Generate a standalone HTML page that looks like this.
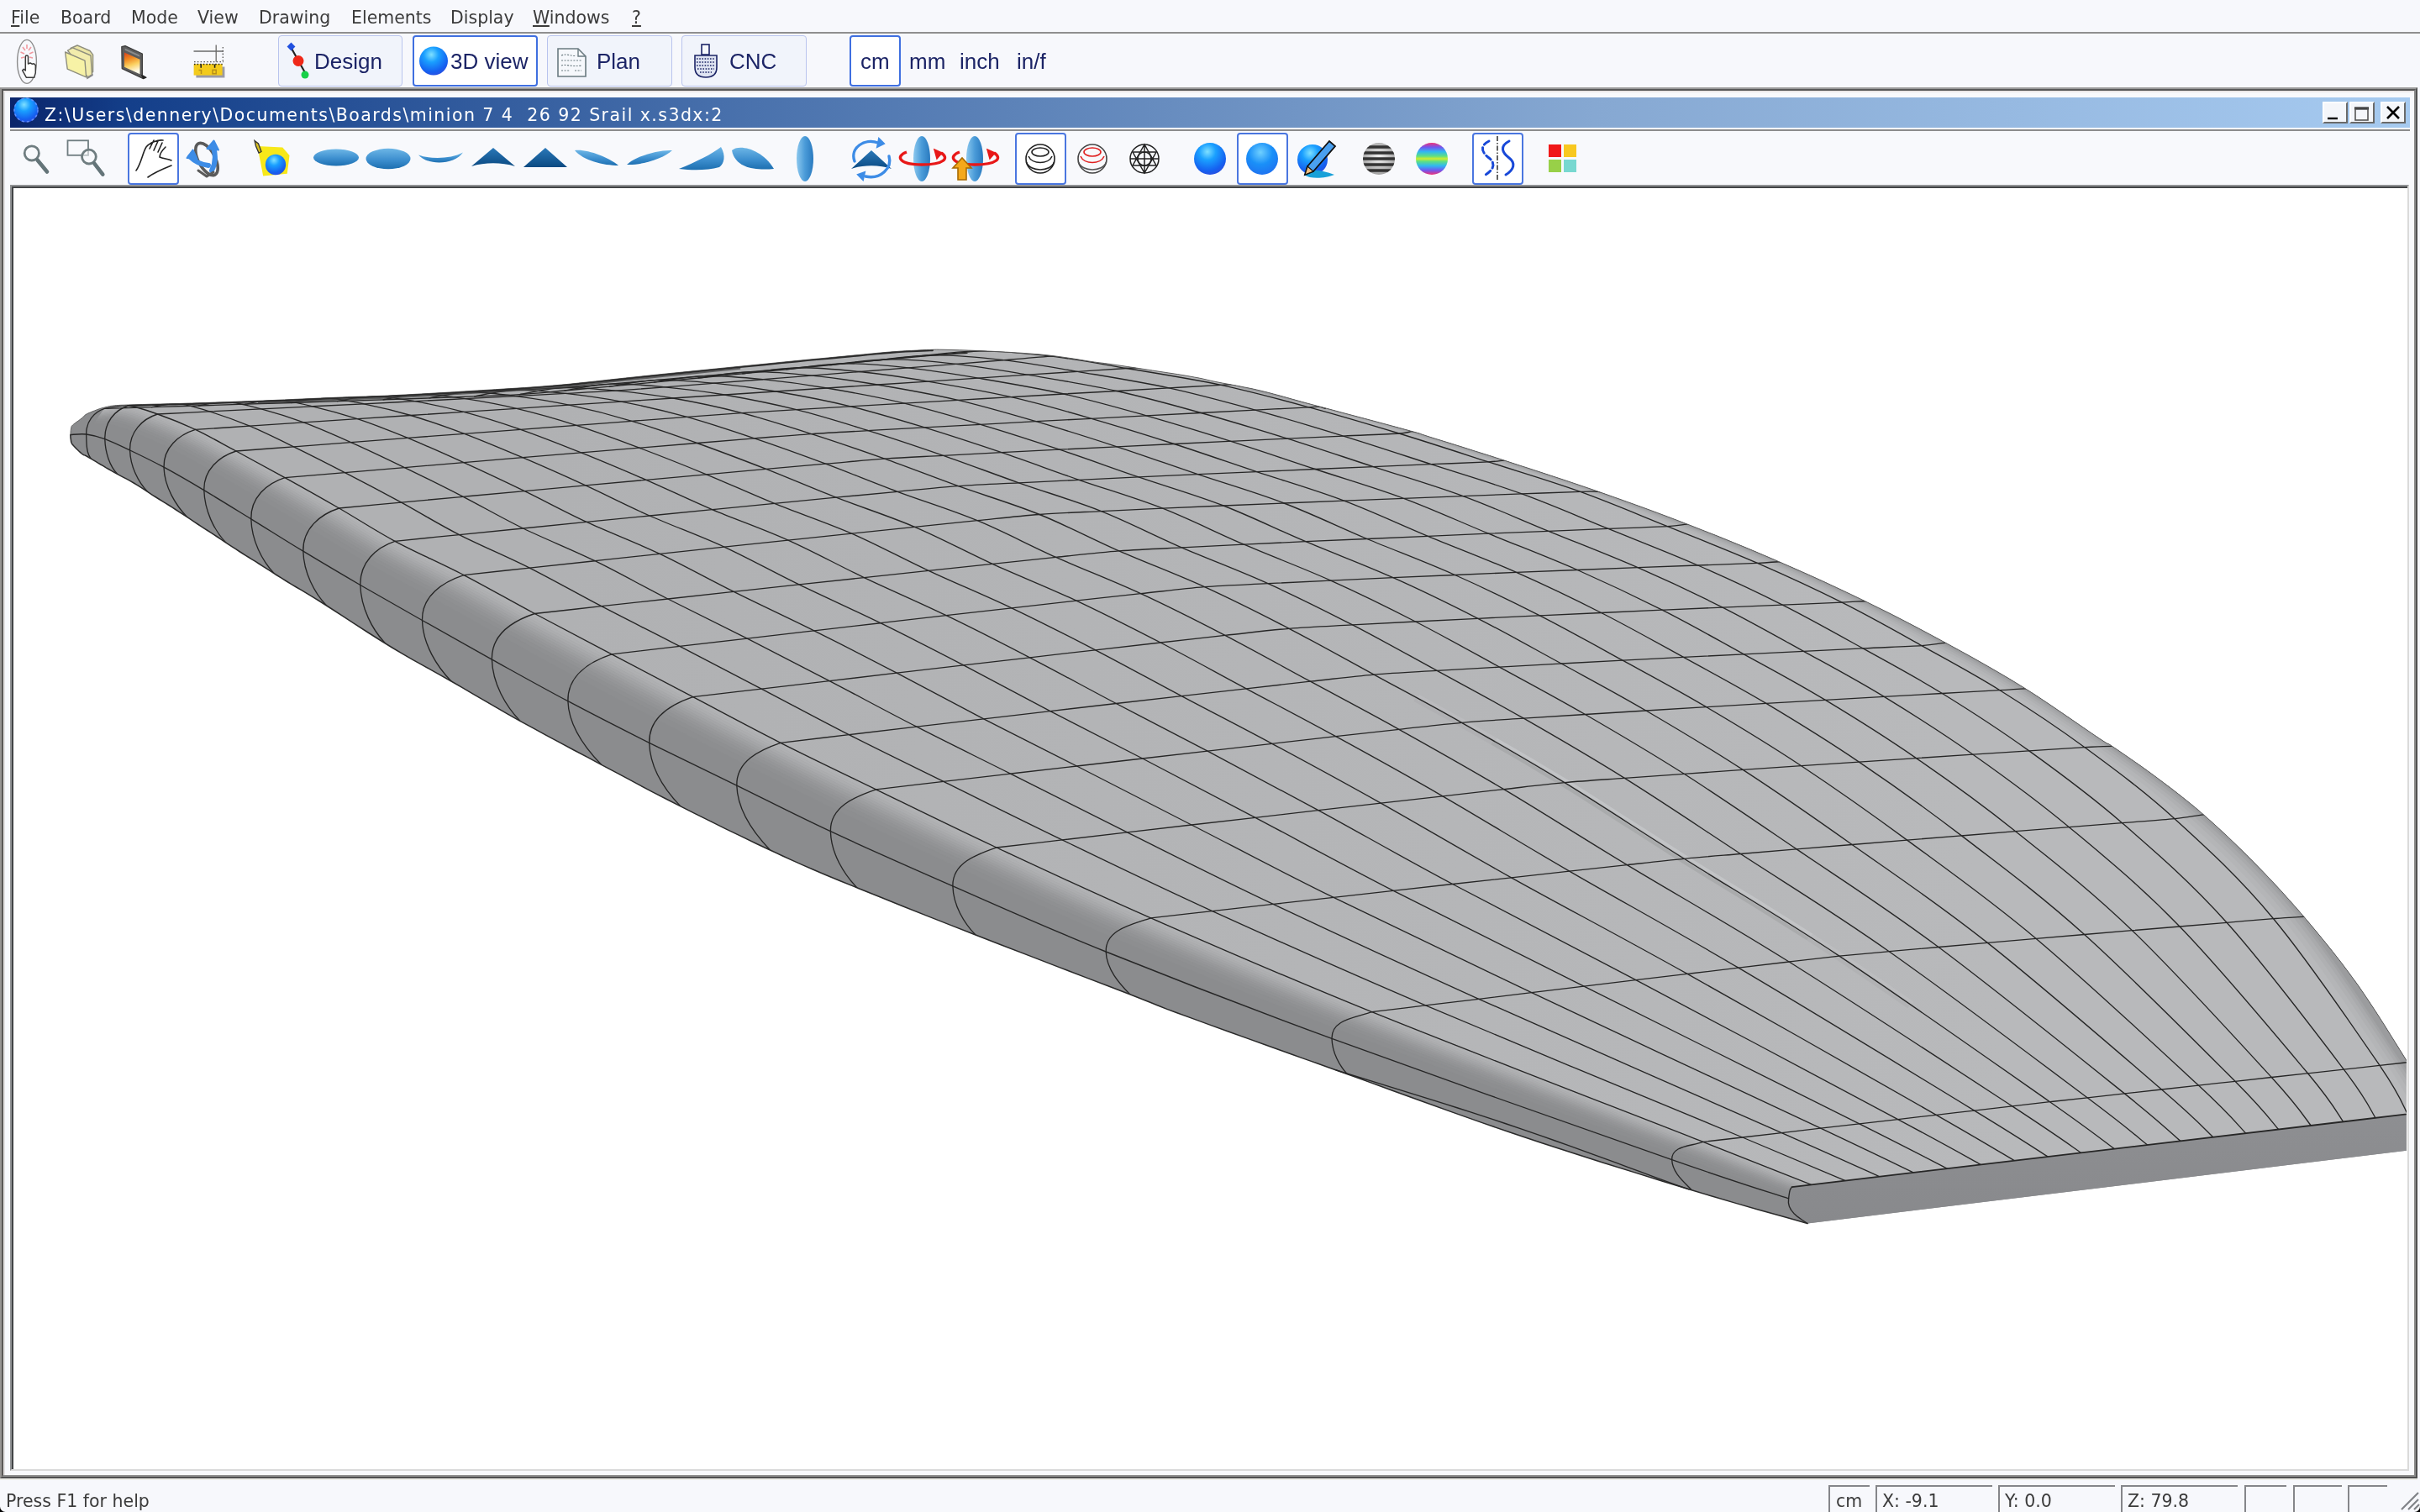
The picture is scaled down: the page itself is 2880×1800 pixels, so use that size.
<!DOCTYPE html><html><head><meta charset="utf-8"><title>Shape3D</title><style>
html,body{margin:0;padding:0;}
body{width:2880px;height:1800px;overflow:hidden;background:#f7f8fc;position:relative;
 font-family:"DejaVu Sans","Liberation Sans",sans-serif;color:#3a3a3a;}
.abs{position:absolute;}
.menu,.tbt,.stt,.ttl{will-change:transform;}
.menu span{position:absolute;top:8px;font-size:20.5px;line-height:26px;color:#3b3b3b;white-space:pre;}
.tb{position:absolute;top:42px;height:61px;border:1.5px solid #b9c4ee;border-radius:4px;background:#f1f4fb;box-sizing:border-box;}
.tb.sel{background:#fff;border:2px solid #3f6fe0;}
.tbt{position:absolute;top:57px;font-family:"Liberation Sans",sans-serif;font-size:26px;line-height:32px;color:#1c2466;white-space:pre;}
.sel2{position:absolute;top:158px;height:62px;width:61px;border:2px solid #4a76e0;border-radius:4px;background:#fff;box-sizing:border-box;}
.st{position:absolute;top:1768px;height:32px;border-top:2px solid #85868a;border-left:2px solid #85868a;box-sizing:border-box;}
.stt{position:absolute;top:1774px;font-size:20.5px;line-height:26px;color:#3b3b3b;white-space:pre;}
.cap{position:absolute;top:121px;height:26px;width:30px;background:#f4f6fa;box-sizing:border-box;
 border-top:2px solid #fff;border-left:2px solid #fff;border-right:2px solid #6a6a6a;border-bottom:2px solid #6a6a6a;}
</style></head><body>
<div class="menu">
<span style="left:13px"><u>F</u>ile</span>
<span style="left:72px">Board</span>
<span style="left:156px">Mode</span>
<span style="left:235px">View</span>
<span style="left:308px">Drawing</span>
<span style="left:418px">Elements</span>
<span style="left:536px">Display</span>
<span style="left:634px"><u>W</u>indows</span>
<span style="left:752px"><u>?</u></span>
</div>
<div class="abs" style="left:0;top:38px;width:2880px;height:2px;background:#8f8f8f"></div>
<div class="tb" style="left:331px;width:148px"></div>
<div class="tb sel" style="left:491px;width:149px"></div>
<div class="tb" style="left:651px;width:149px"></div>
<div class="tb" style="left:811px;width:149px"></div>
<div class="tb sel" style="left:1011px;width:61px"></div>
<div class="tbt" style="left:374px">Design</div>
<div class="tbt" style="left:536px">3D view</div>
<div class="tbt" style="left:710px">Plan</div>
<div class="tbt" style="left:868px">CNC</div>
<div class="tbt" style="left:1024px">cm</div>
<div class="tbt" style="left:1082px">mm</div>
<div class="tbt" style="left:1142px">inch</div>
<div class="tbt" style="left:1210px">in/f</div>
<div class="abs" style="left:0;top:104px;width:2877px;height:1656px;box-sizing:border-box;border-top:2px solid #9a9a9a;border-left:2px solid #979593;border-right:2px solid #505050;border-bottom:2px solid #505050;"></div>
<div class="abs" style="left:2px;top:106px;width:2873px;height:1652px;box-sizing:border-box;border-top:2px solid #585858;border-left:2px solid #5a5856;border-right:2px solid #8a8a8a;border-bottom:2px solid #8e8e8e;background:#f8f9fc"></div>
<div class="abs" style="left:4px;top:108px;width:2869px;height:1648px;box-sizing:border-box;border-top:2px solid #ebe7e7;border-left:2px solid #e4e2e2;"></div>
<div class="abs" style="left:12px;top:116px;width:2856px;height:36px;background:linear-gradient(90deg,#0a246a 0%,#143f8a 5%,#4a72ad 31%,#86a8d2 66%,#a6caf0 100%)"></div>
<div class="abs" style="left:12px;top:154px;width:2856px;height:2px;background:#8c8c8c"></div>
<div class="abs ttl" style="left:53px;top:123px;font-size:20.5px;line-height:28px;color:#fff;letter-spacing:1.45px;white-space:pre">Z:\Users\dennery\Documents\Boards\minion 7 4  26 92 Srail x.s3dx:2</div>
<div class="cap" style="left:2764px"></div>
<div class="cap" style="left:2796px"></div>
<div class="cap" style="left:2833px"></div>
<div class="sel2" style="left:152px"></div>
<div class="sel2" style="left:1208px"></div>
<div class="sel2" style="left:1472px"></div>
<div class="sel2" style="left:1752px"></div>
<div class="abs" style="left:12px;top:220px;width:2855px;height:1531px;box-sizing:border-box;border-top:2px solid #909294;border-left:2px solid #909294;border-right:2px solid #dadada;border-bottom:2px solid #dadada;background:#fff"></div>
<div class="abs" style="left:14px;top:222px;width:2851px;height:1527px;box-sizing:border-box;border-top:2px solid #424446;border-left:2px solid #424446;background:#fff"></div>
<div class="stt" style="left:7px">Press F1 for help</div>
<div class="abs" style="left:0;top:1760px;width:2877px;height:2px;background:#ecece8"></div>
<div class="st" style="left:2176px;width:49px"></div>
<div class="st" style="left:2232px;width:139px"></div>
<div class="st" style="left:2378px;width:139px"></div>
<div class="st" style="left:2524px;width:139px"></div>
<div class="st" style="left:2671px;width:50px"></div>
<div class="st" style="left:2729px;width:58px"></div>
<div class="st" style="left:2794px;width:47px"></div>
<div class="stt" style="left:2185px">cm</div>
<div class="stt" style="left:2240px">X: -9.1</div>
<div class="stt" style="left:2386px">Y: 0.0</div>
<div class="stt" style="left:2532px">Z: 79.8</div>
<svg width="2880" height="1800" viewBox="0 0 2880 1800" style="position:absolute;left:0;top:0">
<defs>
<clipPath id="vp"><rect x="16" y="224" width="2848" height="1524"/></clipPath>
<clipPath id="deckc"><path d="M2155.5 1410.3L2144.6 1406.0L2132.0 1400.9L2115.8 1394.5L2094.1 1385.9L2065.1 1374.5L2026.8 1359.4L1974.9 1339.1L1910.2 1313.9L1838.1 1285.9L1764.1 1256.9L1693.8 1229.2L1632.6 1204.7L1580.2 1183.2L1532.2 1163.2L1487.9 1144.3L1446.4 1126.4L1407.2 1109.3L1369.5 1092.8L1333.8 1077.0L1301.0 1062.2L1270.3 1048.2L1241.3 1034.8L1213.3 1021.8L1186.0 1009.0L1159.4 996.5L1134.1 984.3L1109.9 972.6L1086.6 961.3L1064.2 950.4L1042.5 939.8L1021.7 929.7L1002.1 920.3L983.2 911.1L965.0 902.2L946.9 893.3L928.9 884.3L910.9 875.1L893.2 865.9L875.7 856.7L858.5 847.6L841.5 838.6L824.7 829.7L808.1 821.0L791.7 812.4L775.6 803.9L759.6 795.5L743.7 787.2L728.0 778.9L712.3 770.7L696.8 762.5L681.4 754.4L666.1 746.4L651.1 738.4L636.3 730.5L621.8 722.6L607.5 714.8L593.5 707.0L579.6 699.4L565.7 691.9L551.9 684.6L537.9 677.5L523.8 670.7L509.8 664.0L496.1 657.5L482.7 650.9L470.0 644.3L458.0 637.7L446.6 631.0L435.7 624.4L424.9 617.8L414.3 611.4L403.5 605.0L392.6 598.7L381.6 592.5L370.7 586.3L359.9 580.3L349.4 574.4L339.0 568.6L328.8 563.0L318.8 557.5L309.0 552.1L299.4 546.9L290.0 541.9L281.0 537.0L272.3 532.3L264.0 527.8L255.9 523.4L248.1 519.2L240.3 515.2L232.5 511.4L224.7 507.8L216.9 504.4L209.2 501.2L201.6 498.2L194.4 495.5L187.5 493.0L181.0 490.7L174.9 488.5L169.0 486.6L163.4 485.0L157.9 483.8L152.6 483.0L147.2 482.8L141.7 483.3L136.4 484.1L131.5 485.0L127.5 485.9L124.5 486.4L124.5 485.0L125.9 484.6L127.3 484.3L128.8 483.9L130.4 483.6L132.2 483.3L134.4 483.0L136.5 482.8L138.4 482.6L140.6 482.5L143.4 482.3L147.3 482.2L152.6 482.0L160.1 481.8L169.6 481.5L180.2 481.2L190.9 481.0L200.7 480.7L208.8 480.5L214.4 480.4L218.1 480.3L221.0 480.2L224.1 480.1L228.6 480.0L235.3 479.8L244.5 479.5L255.4 479.1L267.5 478.7L280.6 478.2L294.2 477.7L308.0 477.2L322.6 476.6L338.3 475.9L354.5 475.2L370.7 474.5L386.3 473.8L400.6 473.2L413.3 472.7L424.8 472.3L435.6 472.0L446.3 471.6L457.6 471.2L469.8 470.6L483.0 469.9L496.6 469.2L510.7 468.4L525.3 467.6L540.4 466.7L556.0 465.7L572.3 464.7L589.3 463.7L606.8 462.6L624.6 461.5L642.4 460.2L660.0 458.8L676.8 457.3L692.8 455.6L708.8 453.9L725.7 452.0L744.3 450.0L765.3 447.8L790.5 445.2L819.5 442.3L850.2 439.2L880.4 436.2L907.9 433.5L930.6 431.2L947.8 429.5L961.1 428.2L971.8 427.2L981.0 426.4L990.0 425.5L1000.0 424.6L1011.0 423.5L1022.0 422.5L1032.8 421.4L1043.2 420.4L1053.0 419.5L1062.0 418.8L1070.2 418.2L1077.8 417.7L1084.8 417.4L1091.2 417.1L1097.1 416.8L1102.5 416.6L1106.7 416.4L1109.6 416.3L1111.9 416.2L1114.5 416.1L1118.3 416.2L1124.0 416.3L1132.0 416.5L1141.7 416.8L1152.5 417.1L1163.8 417.5L1175.2 418.0L1186.0 418.5L1196.4 419.1L1206.9 419.7L1217.5 420.4L1227.9 421.2L1238.1 422.0L1248.0 423.0L1257.8 424.2L1267.7 425.6L1277.4 427.0L1286.6 428.5L1295.0 429.9L1302.5 431.0L1308.1 431.8L1311.8 432.2L1314.8 432.6L1318.2 433.0L1323.1 433.7L1330.6 434.8L1341.8 436.5L1355.8 438.6L1371.4 441.0L1387.1 443.4L1401.4 445.6L1413.0 447.5L1421.3 449.0L1427.2 450.1L1431.9 451.1L1436.1 452.1L1440.8 453.2L1447.0 454.5L1454.6 456.0L1462.8 457.5L1471.6 459.1L1480.7 460.9L1490.2 462.8L1499.8 465.0L1509.1 467.3L1518.1 469.7L1527.4 472.2L1537.5 475.1L1549.1 478.3L1562.8 482.0L1580.1 486.6L1601.0 492.2L1623.2 498.1L1645.0 503.9L1664.1 509.1L1678.5 513.0L1686.8 515.3L1690.1 516.2L1690.9 516.5L1691.3 516.8L1693.6 517.6L1700.0 519.7L1710.7 523.0L1723.9 527.1L1739.0 531.8L1755.3 537.0L1772.3 542.3L1789.3 547.8L1806.8 553.5L1825.3 559.5L1844.5 565.8L1863.9 572.2L1883.1 578.7L1901.7 585.1L1919.7 591.4L1937.3 597.7L1954.8 604.0L1972.2 610.4L1989.7 617.0L2007.4 623.8L2025.5 630.9L2043.8 638.1L2062.2 645.6L2080.5 653.1L2098.7 660.8L2116.5 668.4L2134.0 676.1L2151.4 683.8L2168.6 691.6L2185.6 699.5L2202.4 707.4L2219.0 715.4L2235.4 723.5L2251.6 731.6L2267.6 739.8L2283.4 748.1L2299.2 756.5L2314.9 765.0L2330.5 773.5L2346.0 782.0L2361.4 790.7L2376.7 799.5L2392.0 808.5L2407.4 817.9L2423.7 828.3L2441.1 839.9L2458.5 851.8L2474.8 863.0L2488.9 872.7L2499.7 880.0L2506.0 884.1L2508.6 885.6L2508.9 885.6L2508.6 885.2L2509.5 885.6L2513.0 888.0L2519.4 892.3L2527.3 897.7L2536.3 903.9L2545.9 910.6L2555.6 917.5L2565.0 924.4L2574.2 931.3L2583.5 938.3L2592.9 945.6L2602.5 953.2L2612.2 961.1L2622.0 969.5L2632.0 978.4L2642.2 987.7L2652.6 997.4L2663.0 1007.4L2673.4 1017.6L2683.7 1028.0L2693.9 1038.5L2704.1 1049.2L2714.3 1060.2L2724.4 1071.4L2734.6 1082.9L2744.8 1094.8L2755.0 1107.0L2765.3 1119.5L2775.6 1132.3L2785.9 1145.4L2796.0 1158.9L2806.0 1172.6L2816.2 1187.4L2826.7 1203.3L2837.1 1219.5L2846.9 1235.2L2855.8 1249.5L2863.3 1261.5L2869.3 1271.0L2874.0 1278.6L2877.8 1284.9L2880.9 1290.2L2883.5 1295.1L2886.0 1300.0L2888.2 1305.0L2889.8 1309.7L2890.9 1313.9L2891.8 1317.6L2892.4 1320.7L2893.0 1323.0Z"/></clipPath>
<clipPath id="silc"><path d="M83.8 517.5L83.9 516.6L84.0 515.4L84.1 514.0L84.2 512.5L84.4 511.1L84.6 510.0L84.8 509.2L84.8 508.6L84.9 508.0L85.2 507.5L85.7 506.9L86.5 506.0L87.8 504.9L89.6 503.5L91.6 502.1L93.7 500.6L95.6 499.2L97.2 498.0L98.4 497.0L99.2 496.1L99.9 495.4L100.6 494.6L101.6 493.8L103.0 493.0L104.9 492.0L107.3 491.0L109.9 489.9L112.5 488.9L114.9 488.0L117.0 487.2L118.6 486.6L119.9 486.2L121.0 485.9L122.1 485.6L123.2 485.3L124.5 485.0L125.9 484.6L127.3 484.3L128.8 483.9L130.4 483.6L132.2 483.3L134.4 483.0L136.5 482.8L138.4 482.6L140.6 482.5L143.4 482.3L147.3 482.2L152.6 482.0L160.1 481.8L169.6 481.5L180.2 481.2L190.9 481.0L200.7 480.7L208.8 480.5L214.4 480.4L218.1 480.3L221.0 480.2L224.1 480.1L228.6 480.0L235.3 479.8L244.5 479.5L255.4 479.1L267.5 478.7L280.6 478.2L294.2 477.7L308.0 477.2L322.6 476.6L338.3 475.9L354.5 475.2L370.7 474.5L386.3 473.8L400.6 473.2L413.3 472.7L424.8 472.3L435.6 472.0L446.3 471.6L457.6 471.2L469.8 470.6L483.0 469.9L496.6 469.2L510.7 468.4L525.3 467.6L540.4 466.7L556.0 465.7L572.3 464.7L589.3 463.7L606.8 462.6L624.6 461.5L642.4 460.2L660.0 458.8L676.8 457.3L692.8 455.6L708.8 453.9L725.7 452.0L744.3 450.0L765.3 447.8L790.5 445.2L819.5 442.3L850.2 439.2L880.4 436.2L907.9 433.5L930.6 431.2L947.8 429.5L961.1 428.2L971.8 427.2L981.0 426.4L990.0 425.5L1000.0 424.6L1011.0 423.5L1022.0 422.5L1032.8 421.4L1043.2 420.4L1053.0 419.5L1062.0 418.8L1070.2 418.2L1077.8 417.7L1084.8 417.4L1091.2 417.1L1097.1 416.8L1102.5 416.6L1106.7 416.4L1109.6 416.3L1111.9 416.2L1114.5 416.1L1118.3 416.2L1124.0 416.3L1132.0 416.5L1141.7 416.8L1152.5 417.1L1163.8 417.5L1175.2 418.0L1186.0 418.5L1196.4 419.1L1206.9 419.7L1217.5 420.4L1227.9 421.2L1238.1 422.0L1248.0 423.0L1257.8 424.2L1267.7 425.6L1277.4 427.0L1286.6 428.5L1295.0 429.9L1302.5 431.0L1308.1 431.8L1311.8 432.2L1314.8 432.6L1318.2 433.0L1323.1 433.7L1330.6 434.8L1341.8 436.5L1355.8 438.6L1371.4 441.0L1387.1 443.4L1401.4 445.6L1413.0 447.5L1421.3 449.0L1427.2 450.1L1431.9 451.1L1436.1 452.1L1440.8 453.2L1447.0 454.5L1454.6 456.0L1462.8 457.5L1471.6 459.1L1480.7 460.9L1490.2 462.8L1499.8 465.0L1509.1 467.3L1518.1 469.7L1527.4 472.2L1537.5 475.1L1549.1 478.3L1562.8 482.0L1580.1 486.6L1601.0 492.2L1623.2 498.1L1645.0 503.9L1664.1 509.1L1678.5 513.0L1686.8 515.3L1690.1 516.2L1690.9 516.5L1691.3 516.8L1693.6 517.6L1700.0 519.7L1710.7 523.0L1723.9 527.1L1739.0 531.8L1755.3 537.0L1772.3 542.3L1789.3 547.8L1806.8 553.5L1825.3 559.5L1844.5 565.8L1863.9 572.2L1883.1 578.7L1901.7 585.1L1919.7 591.4L1937.3 597.7L1954.8 604.0L1972.2 610.4L1989.7 617.0L2007.4 623.8L2025.5 630.9L2043.8 638.1L2062.2 645.6L2080.5 653.1L2098.7 660.8L2116.5 668.4L2134.0 676.1L2151.4 683.8L2168.6 691.6L2185.6 699.5L2202.4 707.4L2219.0 715.4L2235.4 723.5L2251.6 731.6L2267.6 739.8L2283.4 748.1L2299.2 756.5L2314.9 765.0L2330.5 773.5L2346.0 782.0L2361.4 790.7L2376.7 799.5L2392.0 808.5L2407.4 817.9L2423.7 828.3L2441.1 839.9L2458.5 851.8L2474.8 863.0L2488.9 872.7L2499.7 880.0L2506.0 884.1L2508.6 885.6L2508.9 885.6L2508.6 885.2L2509.5 885.6L2513.0 888.0L2519.4 892.3L2527.3 897.7L2536.3 903.9L2545.9 910.6L2555.6 917.5L2565.0 924.4L2574.2 931.3L2583.5 938.3L2592.9 945.6L2602.5 953.2L2612.2 961.1L2622.0 969.5L2632.0 978.4L2642.2 987.7L2652.6 997.4L2663.0 1007.4L2673.4 1017.6L2683.7 1028.0L2693.9 1038.5L2704.1 1049.2L2714.3 1060.2L2724.4 1071.4L2734.6 1082.9L2744.8 1094.8L2755.0 1107.0L2765.3 1119.5L2775.6 1132.3L2785.9 1145.4L2796.0 1158.9L2806.0 1172.6L2816.2 1187.4L2826.7 1203.3L2837.1 1219.5L2846.9 1235.2L2855.8 1249.5L2863.3 1261.5L2869.3 1271.0L2874.0 1278.6L2877.8 1284.9L2880.9 1290.2L2883.5 1295.1L2886.0 1300.0L2888.2 1305.0L2889.8 1309.7L2890.9 1313.9L2891.8 1317.6L2892.4 1320.7L2893.0 1323.0L2893.0 1366.3L2151.0 1456.5L2136.3 1452.3L2116.7 1446.8L2093.1 1440.2L2066.6 1432.6L2038.2 1424.3L2009.0 1415.5L1977.9 1406.0L1944.0 1395.4L1908.1 1384.2L1871.5 1372.5L1835.1 1360.7L1800.0 1349.0L1764.7 1336.9L1728.0 1323.9L1691.6 1310.8L1657.0 1298.2L1625.9 1286.9L1600.0 1277.5L1581.0 1270.7L1567.9 1266.0L1558.3 1262.6L1549.7 1259.6L1539.7 1256.0L1525.8 1251.0L1507.0 1244.2L1485.1 1236.4L1461.7 1228.0L1438.6 1219.6L1417.5 1211.9L1400.0 1205.5L1388.2 1201.1L1381.1 1198.3L1376.0 1196.2L1370.0 1193.8L1360.5 1190.0L1344.7 1183.8L1321.3 1174.8L1292.1 1163.6L1259.5 1151.1L1225.3 1137.9L1191.8 1125.0L1161.0 1113.0L1132.0 1101.6L1102.8 1090.1L1074.2 1078.7L1047.1 1067.8L1022.1 1057.7L1000.0 1048.7L981.9 1041.2L967.3 1035.0L954.9 1029.6L943.2 1024.4L930.9 1018.7L916.5 1012.0L899.9 1004.2L882.2 995.7L863.9 986.8L845.4 977.7L827.2 968.6L809.9 959.9L793.5 951.5L777.6 943.3L762.1 935.1L746.8 926.9L731.3 918.7L715.6 910.3L699.5 901.7L683.0 893.0L666.5 884.2L650.1 875.4L634.2 866.7L618.9 858.3L604.3 850.1L590.1 841.9L576.3 833.9L562.9 826.1L549.8 818.4L537.0 811.0L524.8 804.1L513.2 797.6L502.0 791.4L490.7 785.1L479.1 778.4L466.7 771.0L453.0 762.5L438.0 753.0L422.7 743.1L407.8 733.4L394.1 724.5L382.4 717.0L372.9 711.1L365.1 706.4L358.5 702.4L352.6 699.0L346.9 695.6L341.0 692.0L334.9 688.2L329.0 684.5L323.4 680.8L318.0 677.4L312.8 674.1L308.0 671.0L303.6 668.2L299.7 665.8L296.0 663.5L292.5 661.3L288.8 659.0L284.9 656.5L280.6 653.7L276.2 650.8L271.6 647.8L267.1 644.8L262.7 641.8L258.4 639.0L254.4 636.4L250.6 633.9L246.9 631.5L243.1 629.1L239.3 626.6L235.3 624.0L231.0 621.2L226.6 618.2L222.1 615.2L217.5 612.2L213.1 609.3L208.8 606.5L204.8 603.9L201.0 601.5L197.2 599.2L193.5 596.9L189.7 594.5L185.7 592.0L181.4 589.3L177.0 586.4L172.5 583.4L167.9 580.4L163.5 577.6L159.2 575.0L155.1 572.6L151.1 570.4L147.1 568.3L143.3 566.3L139.6 564.4L136.0 562.4L132.5 560.4L129.2 558.5L125.9 556.6L122.8 554.7L119.8 553.0L117.0 551.3L114.3 549.7L111.7 548.1L109.2 546.6L106.9 545.3L104.8 544.0L103.0 543.0L101.6 542.3L100.6 541.9L99.9 541.7L99.2 541.4L98.4 540.9L97.2 540.0L95.6 538.6L93.6 536.8L91.5 534.8L89.5 532.7L87.7 530.8L86.3 529.2L85.4 527.9L84.9 526.8L84.6 525.8L84.5 524.8L84.4 523.9L84.3 523.0L84.1 522.0L84.0 520.9L83.9 519.9L83.9 518.9L83.8 518.1L83.8 517.5Z"/></clipPath>
<linearGradient id="tailg" x1="0" y1="0" x2="0" y2="1"><stop offset="0" stop-color="#8e8f92"/><stop offset="1" stop-color="#88898c"/></linearGradient>
<linearGradient id="deckg" gradientUnits="userSpaceOnUse" x1="700" y1="950" x2="2300" y2="700"><stop offset="0" stop-color="#b0b1b3"/><stop offset="1" stop-color="#b8b9bb"/></linearGradient>
</defs>
<g clip-path="url(#vp)">
<path d="M83.8 517.5L83.9 516.6L84.0 515.4L84.1 514.0L84.2 512.5L84.4 511.1L84.6 510.0L84.8 509.2L84.8 508.6L84.9 508.0L85.2 507.5L85.7 506.9L86.5 506.0L87.8 504.9L89.6 503.5L91.6 502.1L93.7 500.6L95.6 499.2L97.2 498.0L98.4 497.0L99.2 496.1L99.9 495.4L100.6 494.6L101.6 493.8L103.0 493.0L104.9 492.0L107.3 491.0L109.9 489.9L112.5 488.9L114.9 488.0L117.0 487.2L118.6 486.6L119.9 486.2L121.0 485.9L122.1 485.6L123.2 485.3L124.5 485.0L125.9 484.6L127.3 484.3L128.8 483.9L130.4 483.6L132.2 483.3L134.4 483.0L136.5 482.8L138.4 482.6L140.6 482.5L143.4 482.3L147.3 482.2L152.6 482.0L160.1 481.8L169.6 481.5L180.2 481.2L190.9 481.0L200.7 480.7L208.8 480.5L214.4 480.4L218.1 480.3L221.0 480.2L224.1 480.1L228.6 480.0L235.3 479.8L244.5 479.5L255.4 479.1L267.5 478.7L280.6 478.2L294.2 477.7L308.0 477.2L322.6 476.6L338.3 475.9L354.5 475.2L370.7 474.5L386.3 473.8L400.6 473.2L413.3 472.7L424.8 472.3L435.6 472.0L446.3 471.6L457.6 471.2L469.8 470.6L483.0 469.9L496.6 469.2L510.7 468.4L525.3 467.6L540.4 466.7L556.0 465.7L572.3 464.7L589.3 463.7L606.8 462.6L624.6 461.5L642.4 460.2L660.0 458.8L676.8 457.3L692.8 455.6L708.8 453.9L725.7 452.0L744.3 450.0L765.3 447.8L790.5 445.2L819.5 442.3L850.2 439.2L880.4 436.2L907.9 433.5L930.6 431.2L947.8 429.5L961.1 428.2L971.8 427.2L981.0 426.4L990.0 425.5L1000.0 424.6L1011.0 423.5L1022.0 422.5L1032.8 421.4L1043.2 420.4L1053.0 419.5L1062.0 418.8L1070.2 418.2L1077.8 417.7L1084.8 417.4L1091.2 417.1L1097.1 416.8L1102.5 416.6L1106.7 416.4L1109.6 416.3L1111.9 416.2L1114.5 416.1L1118.3 416.2L1124.0 416.3L1132.0 416.5L1141.7 416.8L1152.5 417.1L1163.8 417.5L1175.2 418.0L1186.0 418.5L1196.4 419.1L1206.9 419.7L1217.5 420.4L1227.9 421.2L1238.1 422.0L1248.0 423.0L1257.8 424.2L1267.7 425.6L1277.4 427.0L1286.6 428.5L1295.0 429.9L1302.5 431.0L1308.1 431.8L1311.8 432.2L1314.8 432.6L1318.2 433.0L1323.1 433.7L1330.6 434.8L1341.8 436.5L1355.8 438.6L1371.4 441.0L1387.1 443.4L1401.4 445.6L1413.0 447.5L1421.3 449.0L1427.2 450.1L1431.9 451.1L1436.1 452.1L1440.8 453.2L1447.0 454.5L1454.6 456.0L1462.8 457.5L1471.6 459.1L1480.7 460.9L1490.2 462.8L1499.8 465.0L1509.1 467.3L1518.1 469.7L1527.4 472.2L1537.5 475.1L1549.1 478.3L1562.8 482.0L1580.1 486.6L1601.0 492.2L1623.2 498.1L1645.0 503.9L1664.1 509.1L1678.5 513.0L1686.8 515.3L1690.1 516.2L1690.9 516.5L1691.3 516.8L1693.6 517.6L1700.0 519.7L1710.7 523.0L1723.9 527.1L1739.0 531.8L1755.3 537.0L1772.3 542.3L1789.3 547.8L1806.8 553.5L1825.3 559.5L1844.5 565.8L1863.9 572.2L1883.1 578.7L1901.7 585.1L1919.7 591.4L1937.3 597.7L1954.8 604.0L1972.2 610.4L1989.7 617.0L2007.4 623.8L2025.5 630.9L2043.8 638.1L2062.2 645.6L2080.5 653.1L2098.7 660.8L2116.5 668.4L2134.0 676.1L2151.4 683.8L2168.6 691.6L2185.6 699.5L2202.4 707.4L2219.0 715.4L2235.4 723.5L2251.6 731.6L2267.6 739.8L2283.4 748.1L2299.2 756.5L2314.9 765.0L2330.5 773.5L2346.0 782.0L2361.4 790.7L2376.7 799.5L2392.0 808.5L2407.4 817.9L2423.7 828.3L2441.1 839.9L2458.5 851.8L2474.8 863.0L2488.9 872.7L2499.7 880.0L2506.0 884.1L2508.6 885.6L2508.9 885.6L2508.6 885.2L2509.5 885.6L2513.0 888.0L2519.4 892.3L2527.3 897.7L2536.3 903.9L2545.9 910.6L2555.6 917.5L2565.0 924.4L2574.2 931.3L2583.5 938.3L2592.9 945.6L2602.5 953.2L2612.2 961.1L2622.0 969.5L2632.0 978.4L2642.2 987.7L2652.6 997.4L2663.0 1007.4L2673.4 1017.6L2683.7 1028.0L2693.9 1038.5L2704.1 1049.2L2714.3 1060.2L2724.4 1071.4L2734.6 1082.9L2744.8 1094.8L2755.0 1107.0L2765.3 1119.5L2775.6 1132.3L2785.9 1145.4L2796.0 1158.9L2806.0 1172.6L2816.2 1187.4L2826.7 1203.3L2837.1 1219.5L2846.9 1235.2L2855.8 1249.5L2863.3 1261.5L2869.3 1271.0L2874.0 1278.6L2877.8 1284.9L2880.9 1290.2L2883.5 1295.1L2886.0 1300.0L2888.2 1305.0L2889.8 1309.7L2890.9 1313.9L2891.8 1317.6L2892.4 1320.7L2893.0 1323.0L2893.0 1366.3L2151.0 1456.5L2136.3 1452.3L2116.7 1446.8L2093.1 1440.2L2066.6 1432.6L2038.2 1424.3L2009.0 1415.5L1977.9 1406.0L1944.0 1395.4L1908.1 1384.2L1871.5 1372.5L1835.1 1360.7L1800.0 1349.0L1764.7 1336.9L1728.0 1323.9L1691.6 1310.8L1657.0 1298.2L1625.9 1286.9L1600.0 1277.5L1581.0 1270.7L1567.9 1266.0L1558.3 1262.6L1549.7 1259.6L1539.7 1256.0L1525.8 1251.0L1507.0 1244.2L1485.1 1236.4L1461.7 1228.0L1438.6 1219.6L1417.5 1211.9L1400.0 1205.5L1388.2 1201.1L1381.1 1198.3L1376.0 1196.2L1370.0 1193.8L1360.5 1190.0L1344.7 1183.8L1321.3 1174.8L1292.1 1163.6L1259.5 1151.1L1225.3 1137.9L1191.8 1125.0L1161.0 1113.0L1132.0 1101.6L1102.8 1090.1L1074.2 1078.7L1047.1 1067.8L1022.1 1057.7L1000.0 1048.7L981.9 1041.2L967.3 1035.0L954.9 1029.6L943.2 1024.4L930.9 1018.7L916.5 1012.0L899.9 1004.2L882.2 995.7L863.9 986.8L845.4 977.7L827.2 968.6L809.9 959.9L793.5 951.5L777.6 943.3L762.1 935.1L746.8 926.9L731.3 918.7L715.6 910.3L699.5 901.7L683.0 893.0L666.5 884.2L650.1 875.4L634.2 866.7L618.9 858.3L604.3 850.1L590.1 841.9L576.3 833.9L562.9 826.1L549.8 818.4L537.0 811.0L524.8 804.1L513.2 797.6L502.0 791.4L490.7 785.1L479.1 778.4L466.7 771.0L453.0 762.5L438.0 753.0L422.7 743.1L407.8 733.4L394.1 724.5L382.4 717.0L372.9 711.1L365.1 706.4L358.5 702.4L352.6 699.0L346.9 695.6L341.0 692.0L334.9 688.2L329.0 684.5L323.4 680.8L318.0 677.4L312.8 674.1L308.0 671.0L303.6 668.2L299.7 665.8L296.0 663.5L292.5 661.3L288.8 659.0L284.9 656.5L280.6 653.7L276.2 650.8L271.6 647.8L267.1 644.8L262.7 641.8L258.4 639.0L254.4 636.4L250.6 633.9L246.9 631.5L243.1 629.1L239.3 626.6L235.3 624.0L231.0 621.2L226.6 618.2L222.1 615.2L217.5 612.2L213.1 609.3L208.8 606.5L204.8 603.9L201.0 601.5L197.2 599.2L193.5 596.9L189.7 594.5L185.7 592.0L181.4 589.3L177.0 586.4L172.5 583.4L167.9 580.4L163.5 577.6L159.2 575.0L155.1 572.6L151.1 570.4L147.1 568.3L143.3 566.3L139.6 564.4L136.0 562.4L132.5 560.4L129.2 558.5L125.9 556.6L122.8 554.7L119.8 553.0L117.0 551.3L114.3 549.7L111.7 548.1L109.2 546.6L106.9 545.3L104.8 544.0L103.0 543.0L101.6 542.3L100.6 541.9L99.9 541.7L99.2 541.4L98.4 540.9L97.2 540.0L95.6 538.6L93.6 536.8L91.5 534.8L89.5 532.7L87.7 530.8L86.3 529.2L85.4 527.9L84.9 526.8L84.6 525.8L84.5 524.8L84.4 523.9L84.3 523.0L84.1 522.0L84.0 520.9L83.9 519.9L83.9 518.9L83.8 518.1L83.8 517.5Z" fill="#8b8c8e"/>
<path d="M2155.5 1410.3L2144.6 1406.0L2132.0 1400.9L2115.8 1394.5L2094.1 1385.9L2065.1 1374.5L2026.8 1359.4L1974.9 1339.1L1910.2 1313.9L1838.1 1285.9L1764.1 1256.9L1693.8 1229.2L1632.6 1204.7L1580.2 1183.2L1532.2 1163.2L1487.9 1144.3L1446.4 1126.4L1407.2 1109.3L1369.5 1092.8L1333.8 1077.0L1301.0 1062.2L1270.3 1048.2L1241.3 1034.8L1213.3 1021.8L1186.0 1009.0L1159.4 996.5L1134.1 984.3L1109.9 972.6L1086.6 961.3L1064.2 950.4L1042.5 939.8L1021.7 929.7L1002.1 920.3L983.2 911.1L965.0 902.2L946.9 893.3L928.9 884.3L910.9 875.1L893.2 865.9L875.7 856.7L858.5 847.6L841.5 838.6L824.7 829.7L808.1 821.0L791.7 812.4L775.6 803.9L759.6 795.5L743.7 787.2L728.0 778.9L712.3 770.7L696.8 762.5L681.4 754.4L666.1 746.4L651.1 738.4L636.3 730.5L621.8 722.6L607.5 714.8L593.5 707.0L579.6 699.4L565.7 691.9L551.9 684.6L537.9 677.5L523.8 670.7L509.8 664.0L496.1 657.5L482.7 650.9L470.0 644.3L458.0 637.7L446.6 631.0L435.7 624.4L424.9 617.8L414.3 611.4L403.5 605.0L392.6 598.7L381.6 592.5L370.7 586.3L359.9 580.3L349.4 574.4L339.0 568.6L328.8 563.0L318.8 557.5L309.0 552.1L299.4 546.9L290.0 541.9L281.0 537.0L272.3 532.3L264.0 527.8L255.9 523.4L248.1 519.2L240.3 515.2L232.5 511.4L224.7 507.8L216.9 504.4L209.2 501.2L201.6 498.2L194.4 495.5L187.5 493.0L181.0 490.7L174.9 488.5L169.0 486.6L163.4 485.0L157.9 483.8L152.6 483.0L147.2 482.8L141.7 483.3L136.4 484.1L131.5 485.0L127.5 485.9L124.5 486.4L123.0 488.5L125.9 488.1L129.9 487.3L134.7 486.5L139.9 485.8L145.3 485.5L150.7 485.8L155.9 486.6L161.3 487.9L166.9 489.6L172.7 491.5L178.8 493.7L185.2 496.0L192.0 498.5L199.2 501.3L206.7 504.3L214.3 507.5L222.1 510.9L229.9 514.5L237.6 518.3L245.4 522.4L253.3 526.6L261.3 531.0L269.7 535.5L278.3 540.3L287.3 545.2L296.7 550.2L306.3 555.5L316.1 560.9L326.1 566.4L336.2 572.1L346.5 577.8L357.1 583.8L367.8 589.8L378.7 596.0L389.6 602.3L400.5 608.6L411.3 615.0L422.0 621.5L432.7 628.0L443.7 634.7L455.1 641.3L467.1 648.0L479.8 654.6L493.0 661.2L506.7 667.8L520.5 674.5L534.5 681.3L548.4 688.4L562.2 695.7L576.0 703.2L589.9 710.9L604.0 718.7L618.2 726.5L632.7 734.4L647.5 742.3L662.5 750.3L677.7 758.3L693.1 766.4L708.6 774.6L724.3 782.9L740.0 791.2L755.9 799.5L771.8 807.9L788.0 816.4L804.4 824.9L821.0 833.6L837.8 842.5L854.8 851.4L872.0 860.5L889.4 869.7L907.1 878.8L925.1 888.0L943.1 897.0L961.1 905.9L979.3 914.8L998.1 924.0L1017.7 933.5L1038.5 943.5L1060.2 954.1L1082.6 965.0L1105.9 976.3L1130.1 988.0L1155.4 1000.0L1182.0 1012.5L1209.3 1025.3L1237.2 1038.3L1266.1 1051.6L1296.7 1065.6L1329.6 1080.3L1365.2 1096.0L1402.9 1112.5L1442.2 1129.5L1483.6 1147.3L1528.0 1166.1L1576.1 1186.1L1628.5 1207.4L1689.7 1231.8L1760.2 1259.4L1834.3 1288.2L1906.5 1316.2L1971.3 1341.2L2023.3 1361.4L2061.7 1376.4L2090.8 1387.8L2112.6 1396.4L2128.9 1402.8L2141.6 1407.8L2152.6 1412.1Z" fill="#b1b2b4" stroke="#b1b2b4" stroke-width="0.6"/>
<path d="M2152.6 1412.1L2141.6 1407.8L2128.9 1402.8L2112.6 1396.4L2090.8 1387.8L2061.7 1376.4L2023.3 1361.4L1971.3 1341.2L1906.5 1316.2L1834.3 1288.2L1760.2 1259.4L1689.7 1231.8L1628.5 1207.4L1576.1 1186.1L1528.0 1166.1L1483.6 1147.3L1442.2 1129.5L1402.9 1112.5L1365.2 1096.0L1329.6 1080.3L1296.7 1065.6L1266.1 1051.6L1237.2 1038.3L1209.3 1025.3L1182.0 1012.5L1155.4 1000.0L1130.1 988.0L1105.9 976.3L1082.6 965.0L1060.2 954.1L1038.5 943.5L1017.7 933.5L998.1 924.0L979.3 914.8L961.1 905.9L943.1 897.0L925.1 888.0L907.1 878.8L889.4 869.7L872.0 860.5L854.8 851.4L837.8 842.5L821.0 833.6L804.4 824.9L788.0 816.4L771.8 807.9L755.9 799.5L740.0 791.2L724.3 782.9L708.6 774.6L693.1 766.4L677.7 758.3L662.5 750.3L647.5 742.3L632.7 734.4L618.2 726.5L604.0 718.7L589.9 710.9L576.0 703.2L562.2 695.7L548.4 688.4L534.5 681.3L520.5 674.5L506.7 667.8L493.0 661.2L479.8 654.6L467.1 648.0L455.1 641.3L443.7 634.7L432.7 628.0L422.0 621.5L411.3 615.0L400.5 608.6L389.6 602.3L378.7 596.0L367.8 589.8L357.1 583.8L346.5 577.8L336.2 572.1L326.1 566.4L316.1 560.9L306.3 555.5L296.7 550.2L287.3 545.2L278.3 540.3L269.7 535.5L261.3 531.0L253.3 526.6L245.4 522.4L237.6 518.3L229.9 514.5L222.1 510.9L214.3 507.5L206.7 504.3L199.2 501.3L192.0 498.5L185.2 496.0L178.8 493.7L172.7 491.5L166.9 489.6L161.3 487.9L155.9 486.6L150.7 485.8L145.3 485.5L139.9 485.8L134.7 486.5L129.9 487.3L125.9 488.1L123.0 488.5L122.1 489.8L125.0 489.4L129.0 488.7L133.7 487.9L138.9 487.3L144.3 487.0L149.5 487.4L154.7 488.3L160.1 489.6L165.6 491.2L171.4 493.2L177.5 495.4L183.9 497.7L190.7 500.3L197.8 503.1L205.2 506.1L212.9 509.3L220.6 512.7L228.4 516.3L236.1 520.1L243.9 524.2L251.8 528.4L259.8 532.8L268.1 537.4L276.8 542.1L285.8 547.0L295.1 552.1L304.7 557.4L314.5 562.8L324.5 568.4L334.6 574.0L344.9 579.8L355.4 585.8L366.1 591.9L377.0 598.1L387.9 604.3L398.8 610.7L409.6 617.0L420.3 623.5L431.1 630.1L442.1 636.7L453.5 643.4L465.4 650.1L478.1 656.7L491.3 663.3L504.8 669.9L518.7 676.6L532.6 683.5L546.4 690.6L560.2 697.9L574.0 705.4L587.9 713.1L601.9 720.8L616.1 728.7L630.6 736.6L645.4 744.5L660.4 752.5L675.6 760.6L691.0 768.7L706.5 776.9L722.2 785.1L737.9 793.4L753.7 801.8L769.7 810.2L785.9 818.6L802.2 827.2L818.8 835.9L835.6 844.7L852.6 853.6L869.8 862.7L887.3 871.8L905.0 881.0L922.9 890.1L940.9 899.1L958.9 908.0L977.1 917.0L995.8 926.1L1015.4 935.6L1036.2 945.6L1057.9 956.2L1080.3 967.1L1103.6 978.4L1127.8 990.0L1153.1 1002.1L1179.7 1014.5L1207.0 1027.3L1234.8 1040.2L1263.7 1053.6L1294.3 1067.5L1327.1 1082.2L1362.7 1097.9L1400.5 1114.3L1439.7 1131.3L1481.2 1149.1L1525.6 1167.8L1573.7 1187.7L1626.1 1209.0L1687.4 1233.3L1757.9 1260.9L1832.1 1289.6L1904.3 1317.4L1969.2 1342.4L2021.3 1362.6L2059.7 1377.5L2089.0 1388.9L2110.8 1397.4L2127.2 1403.8L2139.9 1408.8L2150.9 1413.1Z" fill="#afb0b2" stroke="#afb0b2" stroke-width="0.6"/>
<path d="M2150.9 1413.1L2139.9 1408.8L2127.2 1403.8L2110.8 1397.4L2089.0 1388.9L2059.7 1377.5L2021.3 1362.6L1969.2 1342.4L1904.3 1317.4L1832.1 1289.6L1757.9 1260.9L1687.4 1233.3L1626.1 1209.0L1573.7 1187.7L1525.6 1167.8L1481.2 1149.1L1439.7 1131.3L1400.5 1114.3L1362.7 1097.9L1327.1 1082.2L1294.3 1067.5L1263.7 1053.6L1234.8 1040.2L1207.0 1027.3L1179.7 1014.5L1153.1 1002.1L1127.8 990.0L1103.6 978.4L1080.3 967.1L1057.9 956.2L1036.2 945.6L1015.4 935.6L995.8 926.1L977.1 917.0L958.9 908.0L940.9 899.1L922.9 890.1L905.0 881.0L887.3 871.8L869.8 862.7L852.6 853.6L835.6 844.7L818.8 835.9L802.2 827.2L785.9 818.6L769.7 810.2L753.7 801.8L737.9 793.4L722.2 785.1L706.5 776.9L691.0 768.7L675.6 760.6L660.4 752.5L645.4 744.5L630.6 736.6L616.1 728.7L601.9 720.8L587.9 713.1L574.0 705.4L560.2 697.9L546.4 690.6L532.6 683.5L518.7 676.6L504.8 669.9L491.3 663.3L478.1 656.7L465.4 650.1L453.5 643.4L442.1 636.7L431.1 630.1L420.3 623.5L409.6 617.0L398.8 610.7L387.9 604.3L377.0 598.1L366.1 591.9L355.4 585.8L344.9 579.8L334.6 574.0L324.5 568.4L314.5 562.8L304.7 557.4L295.1 552.1L285.8 547.0L276.8 542.1L268.1 537.4L259.8 532.8L251.8 528.4L243.9 524.2L236.1 520.1L228.4 516.3L220.6 512.7L212.9 509.3L205.2 506.1L197.8 503.1L190.7 500.3L183.9 497.7L177.5 495.4L171.4 493.2L165.6 491.2L160.1 489.6L154.7 488.3L149.5 487.4L144.3 487.0L138.9 487.3L133.7 487.9L129.0 488.7L125.0 489.4L122.1 489.8L121.2 491.0L124.1 490.6L128.0 490.0L132.7 489.3L137.8 488.8L143.2 488.6L148.4 488.9L153.6 489.9L158.9 491.2L164.4 492.9L170.2 494.9L176.2 497.1L182.6 499.5L189.3 502.0L196.4 504.8L203.8 507.8L211.4 511.1L219.1 514.5L226.9 518.1L234.6 522.0L242.4 526.0L250.2 530.2L258.3 534.7L266.6 539.2L275.3 544.0L284.3 548.9L293.6 554.0L303.1 559.3L312.9 564.8L322.9 570.3L333.0 576.0L343.2 581.8L353.8 587.8L364.5 593.9L375.3 600.1L386.2 606.4L397.1 612.7L407.9 619.1L418.6 625.6L429.4 632.2L440.4 638.8L451.8 645.5L463.8 652.2L476.4 658.8L489.5 665.4L503.0 672.0L516.8 678.8L530.6 685.7L544.4 692.7L558.2 700.1L572.0 707.6L585.8 715.3L599.9 723.0L614.1 730.9L628.6 738.8L643.3 746.7L658.3 754.7L673.5 762.8L688.9 771.0L704.4 779.2L720.0 787.4L735.8 795.7L751.6 804.0L767.6 812.4L783.7 820.9L800.1 829.4L816.7 838.1L833.5 846.9L850.5 855.9L867.7 864.9L885.1 874.0L902.8 883.1L920.8 892.2L938.7 901.3L956.7 910.2L974.8 919.1L993.6 928.2L1013.1 937.7L1033.9 947.8L1055.6 958.3L1078.0 969.2L1101.3 980.4L1125.5 992.1L1150.9 1004.1L1177.4 1016.6L1204.7 1029.3L1232.5 1042.2L1261.4 1055.5L1291.9 1069.4L1324.7 1084.1L1360.3 1099.7L1398.0 1116.1L1437.3 1133.1L1478.8 1150.8L1523.2 1169.5L1571.3 1189.3L1623.8 1210.6L1685.1 1234.8L1755.7 1262.3L1829.9 1290.9L1902.2 1318.7L1967.2 1343.7L2019.2 1363.7L2057.8 1378.6L2087.1 1390.0L2109.0 1398.5L2125.4 1404.8L2138.2 1409.8L2149.2 1414.2Z" fill="#acadaf" stroke="#acadaf" stroke-width="0.6"/>
<path d="M2149.2 1414.2L2138.2 1409.8L2125.4 1404.8L2109.0 1398.5L2087.1 1390.0L2057.8 1378.6L2019.2 1363.7L1967.2 1343.7L1902.2 1318.7L1829.9 1290.9L1755.7 1262.3L1685.1 1234.8L1623.8 1210.6L1571.3 1189.3L1523.2 1169.5L1478.8 1150.8L1437.3 1133.1L1398.0 1116.1L1360.3 1099.7L1324.7 1084.1L1291.9 1069.4L1261.4 1055.5L1232.5 1042.2L1204.7 1029.3L1177.4 1016.6L1150.9 1004.1L1125.5 992.1L1101.3 980.4L1078.0 969.2L1055.6 958.3L1033.9 947.8L1013.1 937.7L993.6 928.2L974.8 919.1L956.7 910.2L938.7 901.3L920.8 892.2L902.8 883.1L885.1 874.0L867.7 864.9L850.5 855.9L833.5 846.9L816.7 838.1L800.1 829.4L783.7 820.9L767.6 812.4L751.6 804.0L735.8 795.7L720.0 787.4L704.4 779.2L688.9 771.0L673.5 762.8L658.3 754.7L643.3 746.7L628.6 738.8L614.1 730.9L599.9 723.0L585.8 715.3L572.0 707.6L558.2 700.1L544.4 692.7L530.6 685.7L516.8 678.8L503.0 672.0L489.5 665.4L476.4 658.8L463.8 652.2L451.8 645.5L440.4 638.8L429.4 632.2L418.6 625.6L407.9 619.1L397.1 612.7L386.2 606.4L375.3 600.1L364.5 593.9L353.8 587.8L343.2 581.8L333.0 576.0L322.9 570.3L312.9 564.8L303.1 559.3L293.6 554.0L284.3 548.9L275.3 544.0L266.6 539.2L258.3 534.7L250.2 530.2L242.4 526.0L234.6 522.0L226.9 518.1L219.1 514.5L211.4 511.1L203.8 507.8L196.4 504.8L189.3 502.0L182.6 499.5L176.2 497.1L170.2 494.9L164.4 492.9L158.9 491.2L153.6 489.9L148.4 488.9L143.2 488.6L137.8 488.8L132.7 489.3L128.0 490.0L124.1 490.6L121.2 491.0L120.4 492.2L123.2 491.9L127.1 491.3L131.7 490.7L136.8 490.2L142.1 490.1L147.3 490.5L152.4 491.5L157.7 492.9L163.2 494.6L168.9 496.6L174.9 498.8L181.2 501.2L188.0 503.7L195.0 506.6L202.4 509.6L210.0 512.8L217.7 516.3L225.4 519.9L233.1 523.8L240.8 527.8L248.7 532.1L256.8 536.5L265.1 541.1L273.7 545.9L282.7 550.8L292.0 555.9L301.6 561.2L311.3 566.7L321.3 572.3L331.3 578.0L341.6 583.8L352.1 589.8L362.8 595.9L373.6 602.1L384.5 608.4L395.4 614.8L406.2 621.2L416.9 627.7L427.7 634.3L438.8 640.9L450.2 647.6L462.1 654.3L474.7 660.9L487.8 667.5L501.2 674.2L514.9 680.9L528.7 687.8L542.4 694.9L556.2 702.3L569.9 709.8L583.8 717.5L597.8 725.2L612.0 733.1L626.5 741.0L641.3 748.9L656.2 757.0L671.4 765.1L686.8 773.2L702.3 781.4L717.9 789.7L733.6 798.0L749.5 806.3L765.4 814.7L781.6 823.1L798.0 831.7L814.5 840.4L831.4 849.1L848.3 858.1L865.5 867.1L883.0 876.1L900.6 885.2L918.6 894.4L936.5 903.4L954.4 912.3L972.6 921.2L991.3 930.3L1010.9 939.9L1031.6 949.9L1053.3 960.4L1075.7 971.3L1099.0 982.5L1123.2 994.1L1148.6 1006.2L1175.1 1018.6L1202.4 1031.3L1230.1 1044.2L1259.0 1057.5L1289.5 1071.4L1322.3 1086.0L1357.8 1101.6L1395.6 1117.9L1434.8 1134.8L1476.3 1152.5L1520.8 1171.1L1568.9 1190.9L1621.4 1212.1L1682.8 1236.3L1753.4 1263.7L1827.7 1292.3L1900.1 1320.0L1965.1 1344.9L2017.2 1364.9L2055.8 1379.8L2085.2 1391.1L2107.2 1399.5L2123.7 1405.9L2136.5 1410.9L2147.6 1415.2Z" fill="#a8a9ab" stroke="#a8a9ab" stroke-width="0.6"/>
<path d="M2147.6 1415.2L2136.5 1410.9L2123.7 1405.9L2107.2 1399.5L2085.2 1391.1L2055.8 1379.8L2017.2 1364.9L1965.1 1344.9L1900.1 1320.0L1827.7 1292.3L1753.4 1263.7L1682.8 1236.3L1621.4 1212.1L1568.9 1190.9L1520.8 1171.1L1476.3 1152.5L1434.8 1134.8L1395.6 1117.9L1357.8 1101.6L1322.3 1086.0L1289.5 1071.4L1259.0 1057.5L1230.1 1044.2L1202.4 1031.3L1175.1 1018.6L1148.6 1006.2L1123.2 994.1L1099.0 982.5L1075.7 971.3L1053.3 960.4L1031.6 949.9L1010.9 939.9L991.3 930.3L972.6 921.2L954.4 912.3L936.5 903.4L918.6 894.4L900.6 885.2L883.0 876.1L865.5 867.1L848.3 858.1L831.4 849.1L814.5 840.4L798.0 831.7L781.6 823.1L765.4 814.7L749.5 806.3L733.6 798.0L717.9 789.7L702.3 781.4L686.8 773.2L671.4 765.1L656.2 757.0L641.3 748.9L626.5 741.0L612.0 733.1L597.8 725.2L583.8 717.5L569.9 709.8L556.2 702.3L542.4 694.9L528.7 687.8L514.9 680.9L501.2 674.2L487.8 667.5L474.7 660.9L462.1 654.3L450.2 647.6L438.8 640.9L427.7 634.3L416.9 627.7L406.2 621.2L395.4 614.8L384.5 608.4L373.6 602.1L362.8 595.9L352.1 589.8L341.6 583.8L331.3 578.0L321.3 572.3L311.3 566.7L301.6 561.2L292.0 555.9L282.7 550.8L273.7 545.9L265.1 541.1L256.8 536.5L248.7 532.1L240.8 527.8L233.1 523.8L225.4 519.9L217.7 516.3L210.0 512.8L202.4 509.6L195.0 506.6L188.0 503.7L181.2 501.2L174.9 498.8L168.9 496.6L163.2 494.6L157.7 492.9L152.4 491.5L147.3 490.5L142.1 490.1L136.8 490.2L131.7 490.7L127.1 491.3L123.2 491.9L120.4 492.2L119.5 493.4L122.3 493.2L126.2 492.6L130.7 492.1L135.8 491.7L141.0 491.6L146.2 492.1L151.3 493.1L156.5 494.5L162.0 496.2L167.7 498.3L173.6 500.5L179.9 502.9L186.6 505.5L193.7 508.3L201.0 511.4L208.5 514.6L216.2 518.1L223.9 521.7L231.6 525.6L239.3 529.6L247.2 533.9L255.2 538.3L263.6 543.0L272.2 547.7L281.2 552.7L290.5 557.8L300.0 563.2L309.7 568.6L319.7 574.2L329.7 579.9L340.0 585.8L350.5 591.8L361.1 597.9L371.9 604.2L382.8 610.5L393.6 616.8L404.5 623.2L415.2 629.8L426.1 636.3L437.1 643.0L448.5 649.7L460.5 656.4L473.0 663.0L486.0 669.7L499.4 676.3L513.0 683.1L526.7 690.0L540.5 697.1L554.1 704.4L567.9 712.0L581.7 719.6L595.8 727.4L610.0 735.3L624.5 743.2L639.2 751.2L654.2 759.2L669.3 767.3L684.7 775.5L700.2 783.7L715.8 792.0L731.5 800.3L747.3 808.6L763.3 817.0L779.5 825.4L795.8 834.0L812.4 842.6L829.2 851.4L846.2 860.3L863.4 869.2L880.8 878.3L898.5 887.4L916.4 896.5L934.4 905.5L952.2 914.4L970.4 923.3L989.0 932.5L1008.6 942.0L1029.3 952.0L1051.0 962.5L1073.4 973.4L1096.7 984.6L1120.9 996.2L1146.3 1008.2L1172.8 1020.6L1200.1 1033.3L1227.8 1046.1L1256.6 1059.4L1287.1 1073.3L1319.8 1087.9L1355.4 1103.5L1393.1 1119.8L1432.4 1136.6L1473.9 1154.2L1518.4 1172.8L1566.5 1192.6L1619.1 1213.7L1680.5 1237.8L1751.1 1265.2L1825.5 1293.6L1897.9 1321.3L1963.0 1346.1L2015.2 1366.0L2053.9 1380.9L2083.3 1392.1L2105.4 1400.6L2121.9 1406.9L2134.8 1411.9L2145.9 1416.2Z" fill="#a4a5a7" stroke="#a4a5a7" stroke-width="0.6"/>
<path d="M2145.9 1416.2L2134.8 1411.9L2121.9 1406.9L2105.4 1400.6L2083.3 1392.1L2053.9 1380.9L2015.2 1366.0L1963.0 1346.1L1897.9 1321.3L1825.5 1293.6L1751.1 1265.2L1680.5 1237.8L1619.1 1213.7L1566.5 1192.6L1518.4 1172.8L1473.9 1154.2L1432.4 1136.6L1393.1 1119.8L1355.4 1103.5L1319.8 1087.9L1287.1 1073.3L1256.6 1059.4L1227.8 1046.1L1200.1 1033.3L1172.8 1020.6L1146.3 1008.2L1120.9 996.2L1096.7 984.6L1073.4 973.4L1051.0 962.5L1029.3 952.0L1008.6 942.0L989.0 932.5L970.4 923.3L952.2 914.4L934.4 905.5L916.4 896.5L898.5 887.4L880.8 878.3L863.4 869.2L846.2 860.3L829.2 851.4L812.4 842.6L795.8 834.0L779.5 825.4L763.3 817.0L747.3 808.6L731.5 800.3L715.8 792.0L700.2 783.7L684.7 775.5L669.3 767.3L654.2 759.2L639.2 751.2L624.5 743.2L610.0 735.3L595.8 727.4L581.7 719.6L567.9 712.0L554.1 704.4L540.5 697.1L526.7 690.0L513.0 683.1L499.4 676.3L486.0 669.7L473.0 663.0L460.5 656.4L448.5 649.7L437.1 643.0L426.1 636.3L415.2 629.8L404.5 623.2L393.6 616.8L382.8 610.5L371.9 604.2L361.1 597.9L350.5 591.8L340.0 585.8L329.7 579.9L319.7 574.2L309.7 568.6L300.0 563.2L290.5 557.8L281.2 552.7L272.2 547.7L263.6 543.0L255.2 538.3L247.2 533.9L239.3 529.6L231.6 525.6L223.9 521.7L216.2 518.1L208.5 514.6L201.0 511.4L193.7 508.3L186.6 505.5L179.9 502.9L173.6 500.5L167.7 498.3L162.0 496.2L156.5 494.5L151.3 493.1L146.2 492.1L141.0 491.6L135.8 491.7L130.7 492.1L126.2 492.6L122.3 493.2L119.5 493.4L118.6 494.7L121.4 494.4L125.2 494.0L129.8 493.5L134.8 493.2L140.0 493.2L145.1 493.7L150.2 494.7L155.4 496.2L160.8 497.9L166.4 499.9L172.4 502.2L178.6 504.6L185.3 507.2L192.3 510.1L199.6 513.1L207.1 516.4L214.7 519.8L222.4 523.5L230.0 527.4L237.8 531.4L245.7 535.7L253.7 540.2L262.0 544.8L270.7 549.6L279.6 554.6L288.9 559.7L298.4 565.1L308.2 570.6L318.1 576.2L328.1 581.9L338.4 587.8L348.8 593.8L359.4 599.9L370.2 606.2L381.0 612.5L391.9 618.9L402.8 625.3L413.5 631.8L424.4 638.4L435.5 645.1L446.9 651.8L458.8 658.5L471.3 665.1L484.3 671.8L497.6 678.5L511.1 685.2L524.8 692.1L538.5 699.3L552.1 706.6L565.8 714.2L579.7 721.8L593.7 729.6L607.9 737.5L622.4 745.4L637.1 753.4L652.1 761.4L667.2 769.5L682.6 777.7L698.1 786.0L713.7 794.2L729.4 802.5L745.2 810.9L761.2 819.2L777.3 827.7L793.7 836.2L810.3 844.8L827.1 853.6L844.1 862.5L861.3 871.4L878.7 880.4L896.3 889.5L914.2 898.6L932.2 907.6L950.0 916.5L968.1 925.4L986.8 934.6L1006.3 944.1L1027.0 954.1L1048.6 964.6L1071.1 975.5L1094.4 986.7L1118.7 998.3L1144.0 1010.2L1170.5 1022.6L1197.8 1035.3L1225.5 1048.1L1254.2 1061.4L1284.7 1075.2L1317.4 1089.8L1352.9 1105.3L1390.6 1121.6L1429.9 1138.4L1471.5 1156.0L1516.0 1174.5L1564.2 1194.2L1616.7 1215.3L1678.2 1239.3L1748.9 1266.6L1823.3 1295.0L1895.8 1322.5L1960.9 1347.3L2013.2 1367.2L2051.9 1382.0L2081.4 1393.2L2103.6 1401.6L2120.2 1408.0L2133.1 1412.9L2144.2 1417.2Z" fill="#a0a1a3" stroke="#a0a1a3" stroke-width="0.6"/>
<path d="M2144.2 1417.2L2133.1 1412.9L2120.2 1408.0L2103.6 1401.6L2081.4 1393.2L2051.9 1382.0L2013.2 1367.2L1960.9 1347.3L1895.8 1322.5L1823.3 1295.0L1748.9 1266.6L1678.2 1239.3L1616.7 1215.3L1564.2 1194.2L1516.0 1174.5L1471.5 1156.0L1429.9 1138.4L1390.6 1121.6L1352.9 1105.3L1317.4 1089.8L1284.7 1075.2L1254.2 1061.4L1225.5 1048.1L1197.8 1035.3L1170.5 1022.6L1144.0 1010.2L1118.7 998.3L1094.4 986.7L1071.1 975.5L1048.6 964.6L1027.0 954.1L1006.3 944.1L986.8 934.6L968.1 925.4L950.0 916.5L932.2 907.6L914.2 898.6L896.3 889.5L878.7 880.4L861.3 871.4L844.1 862.5L827.1 853.6L810.3 844.8L793.7 836.2L777.3 827.7L761.2 819.2L745.2 810.9L729.4 802.5L713.7 794.2L698.1 786.0L682.6 777.7L667.2 769.5L652.1 761.4L637.1 753.4L622.4 745.4L607.9 737.5L593.7 729.6L579.7 721.8L565.8 714.2L552.1 706.6L538.5 699.3L524.8 692.1L511.1 685.2L497.6 678.5L484.3 671.8L471.3 665.1L458.8 658.5L446.9 651.8L435.5 645.1L424.4 638.4L413.5 631.8L402.8 625.3L391.9 618.9L381.0 612.5L370.2 606.2L359.4 599.9L348.8 593.8L338.4 587.8L328.1 581.9L318.1 576.2L308.2 570.6L298.4 565.1L288.9 559.7L279.6 554.6L270.7 549.6L262.0 544.8L253.7 540.2L245.7 535.7L237.8 531.4L230.0 527.4L222.4 523.5L214.7 519.8L207.1 516.4L199.6 513.1L192.3 510.1L185.3 507.2L178.6 504.6L172.4 502.2L166.4 499.9L160.8 497.9L155.4 496.2L150.2 494.7L145.1 493.7L140.0 493.2L134.8 493.2L129.8 493.5L125.2 494.0L121.4 494.4L118.6 494.7L117.7 495.9L120.5 495.7L124.3 495.3L128.8 494.9L133.7 494.6L138.9 494.7L144.0 495.3L149.0 496.4L154.2 497.8L159.6 499.6L165.2 501.6L171.1 503.9L177.3 506.3L183.9 509.0L190.9 511.8L198.1 514.9L205.6 518.2L213.2 521.6L220.9 525.3L228.5 529.2L236.3 533.3L244.1 537.5L252.2 542.0L260.5 546.7L269.1 551.5L278.1 556.5L287.4 561.6L296.9 567.0L306.6 572.5L316.5 578.1L326.5 583.9L336.7 589.8L347.2 595.8L357.8 602.0L368.5 608.2L379.3 614.5L390.2 620.9L401.0 627.4L411.8 633.9L422.7 640.5L433.8 647.2L445.3 653.9L457.2 660.6L469.6 667.2L482.5 673.9L495.8 680.6L509.2 687.4L522.8 694.3L536.5 701.4L550.1 708.8L563.8 716.3L577.7 724.0L591.7 731.8L605.9 739.7L620.3 747.6L635.1 755.6L650.0 763.7L665.2 771.8L680.5 780.0L696.0 788.2L711.6 796.5L727.3 804.8L743.1 813.1L759.1 821.5L775.2 829.9L791.6 838.5L808.1 847.1L824.9 855.8L841.9 864.7L859.1 873.6L876.5 882.6L894.2 891.6L912.1 900.7L930.0 909.7L947.8 918.6L965.9 927.6L984.5 936.7L1004.0 946.2L1024.6 956.3L1046.3 966.8L1068.8 977.6L1092.1 988.8L1116.4 1000.3L1141.7 1012.3L1168.2 1024.6L1195.4 1037.3L1223.1 1050.1L1251.9 1063.3L1282.3 1077.1L1314.9 1091.7L1350.5 1107.2L1388.2 1123.4L1427.5 1140.2L1469.0 1157.7L1513.6 1176.2L1561.8 1195.8L1614.4 1216.8L1675.9 1240.8L1746.6 1268.0L1821.1 1296.3L1893.7 1323.8L1958.9 1348.5L2011.2 1368.3L2050.0 1383.1L2079.5 1394.3L2101.8 1402.7L2118.4 1409.0L2131.4 1413.9L2142.6 1418.3Z" fill="#9c9d9f" stroke="#9c9d9f" stroke-width="0.6"/>
<path d="M2142.6 1418.3L2131.4 1413.9L2118.4 1409.0L2101.8 1402.7L2079.5 1394.3L2050.0 1383.1L2011.2 1368.3L1958.9 1348.5L1893.7 1323.8L1821.1 1296.3L1746.6 1268.0L1675.9 1240.8L1614.4 1216.8L1561.8 1195.8L1513.6 1176.2L1469.0 1157.7L1427.5 1140.2L1388.2 1123.4L1350.5 1107.2L1314.9 1091.7L1282.3 1077.1L1251.9 1063.3L1223.1 1050.1L1195.4 1037.3L1168.2 1024.6L1141.7 1012.3L1116.4 1000.3L1092.1 988.8L1068.8 977.6L1046.3 966.8L1024.6 956.3L1004.0 946.2L984.5 936.7L965.9 927.6L947.8 918.6L930.0 909.7L912.1 900.7L894.2 891.6L876.5 882.6L859.1 873.6L841.9 864.7L824.9 855.8L808.1 847.1L791.6 838.5L775.2 829.9L759.1 821.5L743.1 813.1L727.3 804.8L711.6 796.5L696.0 788.2L680.5 780.0L665.2 771.8L650.0 763.7L635.1 755.6L620.3 747.6L605.9 739.7L591.7 731.8L577.7 724.0L563.8 716.3L550.1 708.8L536.5 701.4L522.8 694.3L509.2 687.4L495.8 680.6L482.5 673.9L469.6 667.2L457.2 660.6L445.3 653.9L433.8 647.2L422.7 640.5L411.8 633.9L401.0 627.4L390.2 620.9L379.3 614.5L368.5 608.2L357.8 602.0L347.2 595.8L336.7 589.8L326.5 583.9L316.5 578.1L306.6 572.5L296.9 567.0L287.4 561.6L278.1 556.5L269.1 551.5L260.5 546.7L252.2 542.0L244.1 537.5L236.3 533.3L228.5 529.2L220.9 525.3L213.2 521.6L205.6 518.2L198.1 514.9L190.9 511.8L183.9 509.0L177.3 506.3L171.1 503.9L165.2 501.6L159.6 499.6L154.2 497.8L149.0 496.4L144.0 495.3L138.9 494.7L133.7 494.6L128.8 494.9L124.3 495.3L120.5 495.7L117.7 495.9L116.9 497.1L119.6 497.0L123.3 496.6L127.8 496.3L132.7 496.1L137.8 496.2L142.9 496.9L147.9 498.0L153.0 499.5L158.3 501.3L163.9 503.3L169.8 505.6L176.0 508.1L182.6 510.7L189.5 513.6L196.7 516.6L204.2 519.9L211.7 523.4L219.4 527.1L227.0 531.0L234.8 535.1L242.6 539.4L250.7 543.9L259.0 548.5L267.6 553.3L276.6 558.3L285.8 563.5L295.3 568.9L305.0 574.4L314.9 580.1L324.9 585.9L335.1 591.7L345.5 597.8L356.1 604.0L366.8 610.2L377.6 616.6L388.5 623.0L399.3 629.4L410.1 636.0L421.0 642.6L432.2 649.2L443.6 655.9L455.5 662.7L467.9 669.4L480.8 676.0L493.9 682.7L507.4 689.5L520.9 696.5L534.5 703.6L548.1 711.0L561.8 718.5L575.6 726.2L589.6 734.0L603.8 741.9L618.3 749.8L633.0 757.8L647.9 765.9L663.1 774.0L678.4 782.2L693.8 790.5L709.4 798.8L725.1 807.1L741.0 815.4L756.9 823.8L773.1 832.2L789.4 840.7L806.0 849.3L822.8 858.1L839.8 866.9L857.0 875.8L874.4 884.7L892.0 893.8L909.9 902.8L927.8 911.8L945.6 920.7L963.6 929.7L982.2 938.8L1001.7 948.4L1022.3 958.4L1044.0 968.9L1066.5 979.7L1089.8 990.8L1114.1 1002.4L1139.4 1014.3L1166.0 1026.7L1193.1 1039.3L1220.8 1052.1L1249.5 1065.3L1279.8 1079.0L1312.5 1093.6L1348.0 1109.0L1385.7 1125.2L1425.0 1141.9L1466.6 1159.4L1511.2 1177.8L1559.4 1197.4L1612.1 1218.4L1673.6 1242.3L1744.4 1269.4L1818.9 1297.7L1891.5 1325.1L1956.8 1349.7L2009.2 1369.5L2048.0 1384.2L2077.7 1395.4L2099.9 1403.7L2116.7 1410.0L2129.7 1415.0L2140.9 1419.3Z" fill="#98999b" stroke="#98999b" stroke-width="0.6"/>
<path d="M2140.9 1419.3L2129.7 1415.0L2116.7 1410.0L2099.9 1403.7L2077.7 1395.4L2048.0 1384.2L2009.2 1369.5L1956.8 1349.7L1891.5 1325.1L1818.9 1297.7L1744.4 1269.4L1673.6 1242.3L1612.1 1218.4L1559.4 1197.4L1511.2 1177.8L1466.6 1159.4L1425.0 1141.9L1385.7 1125.2L1348.0 1109.0L1312.5 1093.6L1279.8 1079.0L1249.5 1065.3L1220.8 1052.1L1193.1 1039.3L1166.0 1026.7L1139.4 1014.3L1114.1 1002.4L1089.8 990.8L1066.5 979.7L1044.0 968.9L1022.3 958.4L1001.7 948.4L982.2 938.8L963.6 929.7L945.6 920.7L927.8 911.8L909.9 902.8L892.0 893.8L874.4 884.7L857.0 875.8L839.8 866.9L822.8 858.1L806.0 849.3L789.4 840.7L773.1 832.2L756.9 823.8L741.0 815.4L725.1 807.1L709.4 798.8L693.8 790.5L678.4 782.2L663.1 774.0L647.9 765.9L633.0 757.8L618.3 749.8L603.8 741.9L589.6 734.0L575.6 726.2L561.8 718.5L548.1 711.0L534.5 703.6L520.9 696.5L507.4 689.5L493.9 682.7L480.8 676.0L467.9 669.4L455.5 662.7L443.6 655.9L432.2 649.2L421.0 642.6L410.1 636.0L399.3 629.4L388.5 623.0L377.6 616.6L366.8 610.2L356.1 604.0L345.5 597.8L335.1 591.7L324.9 585.9L314.9 580.1L305.0 574.4L295.3 568.9L285.8 563.5L276.6 558.3L267.6 553.3L259.0 548.5L250.7 543.9L242.6 539.4L234.8 535.1L227.0 531.0L219.4 527.1L211.7 523.4L204.2 519.9L196.7 516.6L189.5 513.6L182.6 510.7L176.0 508.1L169.8 505.6L163.9 503.3L158.3 501.3L153.0 499.5L147.9 498.0L142.9 496.9L137.8 496.2L132.7 496.1L127.8 496.3L123.3 496.6L119.6 497.0L116.9 497.1L116.0 498.3L118.7 498.2L122.4 498.0L126.8 497.7L131.7 497.6L136.7 497.8L141.8 498.4L146.7 499.6L151.8 501.1L157.1 502.9L162.7 505.0L168.5 507.3L174.7 509.8L181.2 512.4L188.1 515.3L195.3 518.4L202.7 521.7L210.3 525.2L217.9 528.9L225.5 532.8L233.2 536.9L241.1 541.2L249.2 545.7L257.5 550.4L266.1 555.2L275.0 560.2L284.3 565.4L293.7 570.8L303.4 576.4L313.3 582.1L323.3 587.8L333.5 593.7L343.9 599.8L354.4 606.0L365.1 612.3L375.9 618.6L386.8 625.0L397.6 631.5L408.5 638.0L419.4 644.7L430.5 651.3L442.0 658.0L453.9 664.8L466.2 671.5L479.0 678.1L492.1 684.9L505.5 691.7L519.0 698.6L532.5 705.8L546.1 713.2L559.7 720.7L573.6 728.4L587.6 736.2L601.8 744.1L616.2 752.0L630.9 760.0L645.8 768.1L661.0 776.3L676.3 784.5L691.7 792.8L707.3 801.1L723.0 809.4L738.8 817.7L754.8 826.0L770.9 834.5L787.3 843.0L803.9 851.6L820.7 860.3L837.6 869.1L854.8 877.9L872.2 886.9L889.8 895.9L907.7 904.9L925.6 913.9L943.4 922.8L961.4 931.8L980.0 941.0L999.4 950.5L1020.0 960.5L1041.7 971.0L1064.2 981.8L1087.5 992.9L1111.8 1004.4L1137.1 1016.4L1163.7 1028.7L1190.8 1041.2L1218.4 1054.0L1247.1 1067.2L1277.4 1080.9L1310.0 1095.4L1345.6 1110.9L1383.3 1127.0L1422.6 1143.7L1464.2 1161.1L1508.7 1179.5L1557.0 1199.0L1609.7 1219.9L1671.3 1243.8L1742.1 1270.9L1816.7 1299.0L1889.4 1326.4L1954.7 1350.9L2007.1 1370.6L2046.1 1385.3L2075.8 1396.4L2098.1 1404.8L2115.0 1411.1L2128.1 1416.0L2139.2 1420.3Z" fill="#959698" stroke="#959698" stroke-width="0.6"/>
<path d="M2139.2 1420.3L2128.1 1416.0L2115.0 1411.1L2098.1 1404.8L2075.8 1396.4L2046.1 1385.3L2007.1 1370.6L1954.7 1350.9L1889.4 1326.4L1816.7 1299.0L1742.1 1270.9L1671.3 1243.8L1609.7 1219.9L1557.0 1199.0L1508.7 1179.5L1464.2 1161.1L1422.6 1143.7L1383.3 1127.0L1345.6 1110.9L1310.0 1095.4L1277.4 1080.9L1247.1 1067.2L1218.4 1054.0L1190.8 1041.2L1163.7 1028.7L1137.1 1016.4L1111.8 1004.4L1087.5 992.9L1064.2 981.8L1041.7 971.0L1020.0 960.5L999.4 950.5L980.0 941.0L961.4 931.8L943.4 922.8L925.6 913.9L907.7 904.9L889.8 895.9L872.2 886.9L854.8 877.9L837.6 869.1L820.7 860.3L803.9 851.6L787.3 843.0L770.9 834.5L754.8 826.0L738.8 817.7L723.0 809.4L707.3 801.1L691.7 792.8L676.3 784.5L661.0 776.3L645.8 768.1L630.9 760.0L616.2 752.0L601.8 744.1L587.6 736.2L573.6 728.4L559.7 720.7L546.1 713.2L532.5 705.8L519.0 698.6L505.5 691.7L492.1 684.9L479.0 678.1L466.2 671.5L453.9 664.8L442.0 658.0L430.5 651.3L419.4 644.7L408.5 638.0L397.6 631.5L386.8 625.0L375.9 618.6L365.1 612.3L354.4 606.0L343.9 599.8L333.5 593.7L323.3 587.8L313.3 582.1L303.4 576.4L293.7 570.8L284.3 565.4L275.0 560.2L266.1 555.2L257.5 550.4L249.2 545.7L241.1 541.2L233.2 536.9L225.5 532.8L217.9 528.9L210.3 525.2L202.7 521.7L195.3 518.4L188.1 515.3L181.2 512.4L174.7 509.8L168.5 507.3L162.7 505.0L157.1 502.9L151.8 501.1L146.7 499.6L141.8 498.4L136.7 497.8L131.7 497.6L126.8 497.7L122.4 498.0L118.7 498.2L116.0 498.3L114.9 499.9L117.6 499.8L121.2 499.6L125.6 499.4L130.4 499.4L135.4 499.7L140.4 500.4L145.3 501.6L150.3 503.2L155.6 505.0L161.1 507.1L166.9 509.4L173.0 511.9L179.5 514.6L186.4 517.5L193.5 520.6L200.9 523.9L208.4 527.4L216.0 531.1L223.6 535.0L231.3 539.2L239.2 543.5L247.3 548.0L255.6 552.7L264.2 557.5L273.1 562.6L282.3 567.8L291.8 573.2L301.4 578.8L311.3 584.5L321.3 590.3L331.4 596.2L341.8 602.3L352.3 608.5L363.0 614.8L373.8 621.2L384.7 627.6L395.5 634.1L406.3 640.6L417.3 647.3L428.4 653.9L439.9 660.6L451.8 667.4L464.1 674.1L476.8 680.8L489.9 687.5L503.1 694.4L516.5 701.3L530.0 708.5L543.5 715.9L557.2 723.4L571.0 731.2L585.0 739.0L599.2 746.9L613.6 754.8L628.3 762.8L643.2 770.9L658.4 779.1L673.6 787.3L689.1 795.6L704.7 803.9L720.4 812.2L736.2 820.5L752.1 828.9L768.3 837.3L784.6 845.8L801.2 854.4L818.0 863.1L835.0 871.8L852.1 880.7L869.5 889.6L887.1 898.6L905.0 907.6L922.9 916.6L940.6 925.5L958.6 934.5L977.1 943.6L996.6 953.2L1017.2 963.2L1038.8 973.6L1061.3 984.4L1084.6 995.5L1108.9 1007.0L1134.3 1018.9L1160.8 1031.2L1187.9 1043.7L1215.5 1056.5L1244.1 1069.6L1274.4 1083.3L1307.0 1097.8L1342.5 1113.2L1380.2 1129.3L1419.5 1145.9L1461.1 1163.3L1505.7 1181.6L1554.0 1201.1L1606.8 1221.9L1668.4 1245.7L1739.3 1272.7L1813.9 1300.7L1886.7 1328.0L1952.1 1352.4L2004.6 1372.1L2043.6 1386.7L2073.4 1397.8L2095.9 1406.1L2112.8 1412.4L2125.9 1417.3L2137.2 1421.6Z" fill="#929395" stroke="#929395" stroke-width="0.6"/>
<path d="M2137.2 1421.6L2125.9 1417.3L2112.8 1412.4L2095.9 1406.1L2073.4 1397.8L2043.6 1386.7L2004.6 1372.1L1952.1 1352.4L1886.7 1328.0L1813.9 1300.7L1739.3 1272.7L1668.4 1245.7L1606.8 1221.9L1554.0 1201.1L1505.7 1181.6L1461.1 1163.3L1419.5 1145.9L1380.2 1129.3L1342.5 1113.2L1307.0 1097.8L1274.4 1083.3L1244.1 1069.6L1215.5 1056.5L1187.9 1043.7L1160.8 1031.2L1134.3 1018.9L1108.9 1007.0L1084.6 995.5L1061.3 984.4L1038.8 973.6L1017.2 963.2L996.6 953.2L977.1 943.6L958.6 934.5L940.6 925.5L922.9 916.6L905.0 907.6L887.1 898.6L869.5 889.6L852.1 880.7L835.0 871.8L818.0 863.1L801.2 854.4L784.6 845.8L768.3 837.3L752.1 828.9L736.2 820.5L720.4 812.2L704.7 803.9L689.1 795.6L673.6 787.3L658.4 779.1L643.2 770.9L628.3 762.8L613.6 754.8L599.2 746.9L585.0 739.0L571.0 731.2L557.2 723.4L543.5 715.9L530.0 708.5L516.5 701.3L503.1 694.4L489.9 687.5L476.8 680.8L464.1 674.1L451.8 667.4L439.9 660.6L428.4 653.9L417.3 647.3L406.3 640.6L395.5 634.1L384.7 627.6L373.8 621.2L363.0 614.8L352.3 608.5L341.8 602.3L331.4 596.2L321.3 590.3L311.3 584.5L301.4 578.8L291.8 573.2L282.3 567.8L273.1 562.6L264.2 557.5L255.6 552.7L247.3 548.0L239.2 543.5L231.3 539.2L223.6 535.0L216.0 531.1L208.4 527.4L200.9 523.9L193.5 520.6L186.4 517.5L179.5 514.6L173.0 511.9L166.9 509.4L161.1 507.1L155.6 505.0L150.3 503.2L145.3 501.6L140.4 500.4L135.4 499.7L130.4 499.4L125.6 499.4L121.2 499.6L117.6 499.8L114.9 499.9L113.6 501.7L116.2 501.7L119.8 501.6L124.1 501.5L128.9 501.6L133.8 502.0L138.7 502.8L143.5 504.1L148.6 505.6L153.8 507.5L159.2 509.7L165.0 512.0L171.0 514.5L177.5 517.2L184.3 520.1L191.4 523.2L198.7 526.6L206.2 530.1L213.7 533.8L221.3 537.7L229.0 541.9L236.9 546.2L245.0 550.8L253.3 555.5L261.9 560.3L270.8 565.4L280.0 570.7L289.4 576.1L299.1 581.7L308.9 587.4L318.9 593.3L329.0 599.2L339.3 605.3L349.8 611.5L360.5 617.9L371.2 624.3L382.1 630.7L392.9 637.2L403.8 643.7L414.8 650.4L426.0 657.1L437.4 663.8L449.3 670.5L461.6 677.3L474.2 684.0L487.1 690.7L500.3 697.6L513.6 704.6L527.0 711.8L540.5 719.2L554.2 726.7L568.0 734.4L581.9 742.3L596.1 750.2L610.6 758.1L625.2 766.1L640.1 774.3L655.2 782.5L670.5 790.7L685.9 799.0L701.5 807.3L717.2 815.6L733.0 823.9L748.9 832.3L765.1 840.7L781.4 849.2L798.0 857.7L814.8 866.4L831.7 875.1L848.9 883.9L866.3 892.8L883.9 901.8L901.8 910.8L919.6 919.7L937.3 928.6L955.2 937.6L973.7 946.8L993.1 956.4L1013.7 966.4L1035.4 976.8L1057.8 987.6L1081.2 998.7L1105.5 1010.1L1130.9 1022.0L1157.4 1034.2L1184.5 1046.7L1212.0 1059.5L1240.6 1072.6L1270.8 1086.2L1303.3 1100.6L1338.8 1116.0L1376.5 1132.0L1415.8 1148.6L1457.5 1165.9L1502.1 1184.1L1550.5 1203.5L1603.2 1224.2L1664.9 1248.0L1735.9 1274.8L1810.6 1302.8L1883.5 1329.9L1949.0 1354.2L2001.6 1373.8L2040.7 1388.4L2070.6 1399.4L2093.2 1407.7L2110.2 1413.9L2123.4 1418.8L2134.7 1423.2Z" fill="#8f9092" stroke="#8f9092" stroke-width="0.6"/>
<path d="M2134.7 1423.2L2123.4 1418.8L2110.2 1413.9L2093.2 1407.7L2070.6 1399.4L2040.7 1388.4L2001.6 1373.8L1949.0 1354.2L1883.5 1329.9L1810.6 1302.8L1735.9 1274.8L1664.9 1248.0L1603.2 1224.2L1550.5 1203.5L1502.1 1184.1L1457.5 1165.9L1415.8 1148.6L1376.5 1132.0L1338.8 1116.0L1303.3 1100.6L1270.8 1086.2L1240.6 1072.6L1212.0 1059.5L1184.5 1046.7L1157.4 1034.2L1130.9 1022.0L1105.5 1010.1L1081.2 998.7L1057.8 987.6L1035.4 976.8L1013.7 966.4L993.1 956.4L973.7 946.8L955.2 937.6L937.3 928.6L919.6 919.7L901.8 910.8L883.9 901.8L866.3 892.8L848.9 883.9L831.7 875.1L814.8 866.4L798.0 857.7L781.4 849.2L765.1 840.7L748.9 832.3L733.0 823.9L717.2 815.6L701.5 807.3L685.9 799.0L670.5 790.7L655.2 782.5L640.1 774.3L625.2 766.1L610.6 758.1L596.1 750.2L581.9 742.3L568.0 734.4L554.2 726.7L540.5 719.2L527.0 711.8L513.6 704.6L500.3 697.6L487.1 690.7L474.2 684.0L461.6 677.3L449.3 670.5L437.4 663.8L426.0 657.1L414.8 650.4L403.8 643.7L392.9 637.2L382.1 630.7L371.2 624.3L360.5 617.9L349.8 611.5L339.3 605.3L329.0 599.2L318.9 593.3L308.9 587.4L299.1 581.7L289.4 576.1L280.0 570.7L270.8 565.4L261.9 560.3L253.3 555.5L245.0 550.8L236.9 546.2L229.0 541.9L221.3 537.7L213.7 533.8L206.2 530.1L198.7 526.6L191.4 523.2L184.3 520.1L177.5 517.2L171.0 514.5L165.0 512.0L159.2 509.7L153.8 507.5L148.6 505.6L143.5 504.1L138.7 502.8L133.8 502.0L128.9 501.6L124.1 501.5L119.8 501.6L116.2 501.7L113.6 501.7L111.9 504.2L114.4 504.2L118.0 504.2L122.2 504.3L126.8 504.5L131.7 505.1L136.5 506.0L141.2 507.3L146.2 508.9L151.3 510.9L156.7 513.0L162.4 515.4L168.4 518.0L174.8 520.7L181.5 523.6L188.6 526.8L195.8 530.1L203.2 533.7L210.7 537.4L218.3 541.4L226.0 545.5L233.9 549.9L241.9 554.4L250.2 559.2L258.8 564.1L267.7 569.2L276.9 574.5L286.3 579.9L295.9 585.6L305.7 591.3L315.6 597.2L325.7 603.2L336.0 609.3L346.5 615.6L357.1 621.9L367.8 628.3L378.7 634.8L389.5 641.3L400.4 647.9L411.4 654.5L422.7 661.2L434.2 668.0L446.0 674.7L458.2 681.5L470.7 688.2L483.5 695.0L496.5 701.9L509.7 708.9L523.0 716.1L536.5 723.5L550.1 731.1L563.9 738.8L577.8 746.7L592.0 754.6L606.4 762.5L621.1 770.6L635.9 778.7L651.0 786.9L666.3 795.2L681.7 803.5L697.2 811.8L712.9 820.1L728.7 828.5L744.7 836.8L760.8 845.2L777.2 853.7L793.7 862.2L810.5 870.9L827.4 879.5L844.6 888.3L862.0 897.1L879.6 906.0L897.4 915.0L915.2 924.0L932.9 932.9L950.8 941.9L969.2 951.1L988.5 960.6L1009.1 970.6L1030.8 981.0L1053.2 991.8L1076.6 1002.8L1100.9 1014.2L1126.3 1026.0L1152.8 1038.3L1179.9 1050.7L1207.3 1063.4L1235.8 1076.4L1266.0 1090.1L1298.4 1104.4L1333.9 1119.7L1371.6 1135.6L1410.9 1152.1L1452.6 1169.3L1497.3 1187.4L1545.7 1206.7L1598.5 1227.4L1660.3 1251.0L1731.4 1277.6L1806.2 1305.5L1879.2 1332.4L1944.9 1356.6L1997.6 1376.1L2036.8 1390.6L2066.8 1401.6L2089.5 1409.8L2106.7 1416.0L2120.0 1420.9L2131.3 1425.2Z" fill="#8d8e90" stroke="#8d8e90" stroke-width="0.6"/>
<path d="M2155.5 1410.3L2144.6 1406.0L2132.0 1400.9L2115.8 1394.5L2094.1 1385.9L2065.1 1374.5L2026.8 1359.4L1974.9 1339.1L1910.2 1313.9L1838.1 1285.9L1764.1 1256.9L1693.8 1229.2L1632.6 1204.7L1580.2 1183.2L1532.2 1163.2L1487.9 1144.3L1446.4 1126.4L1407.2 1109.3L1369.5 1092.8L1333.8 1077.0L1301.0 1062.2L1270.3 1048.2L1241.3 1034.8L1213.3 1021.8L1186.0 1009.0L1159.4 996.5L1134.1 984.3L1109.9 972.6L1086.6 961.3L1064.2 950.4L1042.5 939.8L1021.7 929.7L1002.1 920.3L983.2 911.1L965.0 902.2L946.9 893.3L928.9 884.3L910.9 875.1L893.2 865.9L875.7 856.7L858.5 847.6L841.5 838.6L824.7 829.7L808.1 821.0L791.7 812.4L775.6 803.9L759.6 795.5L743.7 787.2L728.0 778.9L712.3 770.7L696.8 762.5L681.4 754.4L666.1 746.4L651.1 738.4L636.3 730.5L621.8 722.6L607.5 714.8L593.5 707.0L579.6 699.4L565.7 691.9L551.9 684.6L537.9 677.5L523.8 670.7L509.8 664.0L496.1 657.5L482.7 650.9L470.0 644.3L458.0 637.7L446.6 631.0L435.7 624.4L424.9 617.8L414.3 611.4L403.5 605.0L392.6 598.7L381.6 592.5L370.7 586.3L359.9 580.3L349.4 574.4L339.0 568.6L328.8 563.0L318.8 557.5L309.0 552.1L299.4 546.9L290.0 541.9L281.0 537.0L272.3 532.3L264.0 527.8L255.9 523.4L248.1 519.2L240.3 515.2L232.5 511.4L224.7 507.8L216.9 504.4L209.2 501.2L201.6 498.2L194.4 495.5L187.5 493.0L181.0 490.7L174.9 488.5L169.0 486.6L163.4 485.0L157.9 483.8L152.6 483.0L147.2 482.8L141.7 483.3L136.4 484.1L131.5 485.0L127.5 485.9L124.5 486.4L124.5 485.0L125.9 484.6L127.3 484.3L128.8 483.9L130.4 483.6L132.2 483.3L134.4 483.0L136.5 482.8L138.4 482.6L140.6 482.5L143.4 482.3L147.3 482.2L152.6 482.0L160.1 481.8L169.6 481.5L180.2 481.2L190.9 481.0L200.7 480.7L208.8 480.5L214.4 480.4L218.1 480.3L221.0 480.2L224.1 480.1L228.6 480.0L235.3 479.8L244.5 479.5L255.4 479.1L267.5 478.7L280.6 478.2L294.2 477.7L308.0 477.2L322.6 476.6L338.3 475.9L354.5 475.2L370.7 474.5L386.3 473.8L400.6 473.2L413.3 472.7L424.8 472.3L435.6 472.0L446.3 471.6L457.6 471.2L469.8 470.6L483.0 469.9L496.6 469.2L510.7 468.4L525.3 467.6L540.4 466.7L556.0 465.7L572.3 464.7L589.3 463.7L606.8 462.6L624.6 461.5L642.4 460.2L660.0 458.8L676.8 457.3L692.8 455.6L708.8 453.9L725.7 452.0L744.3 450.0L765.3 447.8L790.5 445.2L819.5 442.3L850.2 439.2L880.4 436.2L907.9 433.5L930.6 431.2L947.8 429.5L961.1 428.2L971.8 427.2L981.0 426.4L990.0 425.5L1000.0 424.6L1011.0 423.5L1022.0 422.5L1032.8 421.4L1043.2 420.4L1053.0 419.5L1062.0 418.8L1070.2 418.2L1077.8 417.7L1084.8 417.4L1091.2 417.1L1097.1 416.8L1102.5 416.6L1106.7 416.4L1109.6 416.3L1111.9 416.2L1114.5 416.1L1118.3 416.2L1124.0 416.3L1132.0 416.5L1141.7 416.8L1152.5 417.1L1163.8 417.5L1175.2 418.0L1186.0 418.5L1196.4 419.1L1206.9 419.7L1217.5 420.4L1227.9 421.2L1238.1 422.0L1248.0 423.0L1257.8 424.2L1267.7 425.6L1277.4 427.0L1286.6 428.5L1295.0 429.9L1302.5 431.0L1308.1 431.8L1311.8 432.2L1314.8 432.6L1318.2 433.0L1323.1 433.7L1330.6 434.8L1341.8 436.5L1355.8 438.6L1371.4 441.0L1387.1 443.4L1401.4 445.6L1413.0 447.5L1421.3 449.0L1427.2 450.1L1431.9 451.1L1436.1 452.1L1440.8 453.2L1447.0 454.5L1454.6 456.0L1462.8 457.5L1471.6 459.1L1480.7 460.9L1490.2 462.8L1499.8 465.0L1509.1 467.3L1518.1 469.7L1527.4 472.2L1537.5 475.1L1549.1 478.3L1562.8 482.0L1580.1 486.6L1601.0 492.2L1623.2 498.1L1645.0 503.9L1664.1 509.1L1678.5 513.0L1686.8 515.3L1690.1 516.2L1690.9 516.5L1691.3 516.8L1693.6 517.6L1700.0 519.7L1710.7 523.0L1723.9 527.1L1739.0 531.8L1755.3 537.0L1772.3 542.3L1789.3 547.8L1806.8 553.5L1825.3 559.5L1844.5 565.8L1863.9 572.2L1883.1 578.7L1901.7 585.1L1919.7 591.4L1937.3 597.7L1954.8 604.0L1972.2 610.4L1989.7 617.0L2007.4 623.8L2025.5 630.9L2043.8 638.1L2062.2 645.6L2080.5 653.1L2098.7 660.8L2116.5 668.4L2134.0 676.1L2151.4 683.8L2168.6 691.6L2185.6 699.5L2202.4 707.4L2219.0 715.4L2235.4 723.5L2251.6 731.6L2267.6 739.8L2283.4 748.1L2299.2 756.5L2314.9 765.0L2330.5 773.5L2346.0 782.0L2361.4 790.7L2376.7 799.5L2392.0 808.5L2407.4 817.9L2423.7 828.3L2441.1 839.9L2458.5 851.8L2474.8 863.0L2488.9 872.7L2499.7 880.0L2506.0 884.1L2508.6 885.6L2508.9 885.6L2508.6 885.2L2509.5 885.6L2513.0 888.0L2519.4 892.3L2527.3 897.7L2536.3 903.9L2545.9 910.6L2555.6 917.5L2565.0 924.4L2574.2 931.3L2583.5 938.3L2592.9 945.6L2602.5 953.2L2612.2 961.1L2622.0 969.5L2632.0 978.4L2642.2 987.7L2652.6 997.4L2663.0 1007.4L2673.4 1017.6L2683.7 1028.0L2693.9 1038.5L2704.1 1049.2L2714.3 1060.2L2724.4 1071.4L2734.6 1082.9L2744.8 1094.8L2755.0 1107.0L2765.3 1119.5L2775.6 1132.3L2785.9 1145.4L2796.0 1158.9L2806.0 1172.6L2816.2 1187.4L2826.7 1203.3L2837.1 1219.5L2846.9 1235.2L2855.8 1249.5L2863.3 1261.5L2869.3 1271.0L2874.0 1278.6L2877.8 1284.9L2880.9 1290.2L2883.5 1295.1L2886.0 1300.0L2888.2 1305.0L2889.8 1309.7L2890.9 1313.9L2891.8 1317.6L2892.4 1320.7L2893.0 1323.0Z" fill="url(#deckg)"/>
<path d="M2276.4 1193.9L2231.3 1162.9L2191.3 1135.9L2156.2 1113.0" fill="none" stroke="#c6c7c9" stroke-width="3.4" opacity="0.35"/>
<path d="M2271.4 1198.5L2226.3 1167.5L2186.3 1140.5L2151.2 1117.6" fill="none" stroke="#a6a7a9" stroke-width="4.0" opacity="0.35"/>
<path d="M2156.2 1113.0L2123.3 1092.1L2092.2 1072.8L2062.6 1054.7L2034.1 1037.3L2006.6 1020.1L1980.2 1003.3L1955.3 987.3L1931.5 972.1L1908.7 957.4L1886.4 943.2L1864.3 929.5L1842.5 916.4L1821.4 903.8L1800.7 891.7L1780.6 880.1" fill="none" stroke="#c6c7c9" stroke-width="3.4" opacity="0.80"/>
<path d="M2151.2 1117.6L2118.3 1096.7L2087.2 1077.4L2057.6 1059.3L2029.1 1041.9L2001.6 1024.7L1975.2 1007.9L1950.3 991.9L1926.5 976.7L1903.7 962.0L1881.4 947.8L1859.3 934.1L1837.5 921.0L1816.4 908.4L1795.7 896.3L1775.6 884.7" fill="none" stroke="#a6a7a9" stroke-width="4.0" opacity="0.80"/>
<path d="M1780.6 880.1L1761.0 868.9L1741.9 858.1L1723.4 847.7L1705.6 837.9L1688.3 828.5" fill="none" stroke="#c6c7c9" stroke-width="3.4" opacity="0.35"/>
<path d="M1775.6 884.7L1756.0 873.5L1736.9 862.7L1718.4 852.3L1700.6 842.5L1683.3 833.1" fill="none" stroke="#a6a7a9" stroke-width="4.0" opacity="0.35"/>
<path d="M2875.0 1327.1L2872.3 1322.0L2869.5 1316.0L2865.8 1308.4L2860.3 1298.3L2852.3 1285.0L2841.0 1267.8L2825.4 1244.7L2805.9 1216.0L2784.0 1184.1L2760.8 1151.4L2737.8 1120.2L2716.4 1092.9L2696.2 1069.3L2676.1 1047.6L2656.2 1027.3L2636.6 1008.4L2617.2 990.4L2598.2 973.2L2579.6 956.9L2561.3 941.9L2543.4 928.0L2525.6 914.7L2508.1 901.9L2490.6 889.2L2473.2 876.8L2456.0 864.8L2438.9 853.2L2422.1 842.1L2405.4 831.4L2389.0 821.1L2372.9 811.3L2357.2 802.0L2341.8 793.2L2326.4 784.6L2310.9 776.1L2295.3 767.5L2279.6 758.8L2263.9 750.2L2248.2 741.7L2232.3 733.2L2216.3 724.9L2200.1 716.6L2183.7 708.6L2167.1 700.6L2150.3 692.8L2133.4 685.0L2116.3 677.4L2099.0 669.8L2081.4 662.2L2063.5 654.8L2045.4 647.4L2027.2 640.1L2009.1 632.9L1991.3 625.8L1973.8 618.8L1956.5 611.9L1939.3 605.1L1922.1 598.4L1904.7 591.8L1887.0 585.3L1868.9 579.0L1850.6 572.9L1832.0 566.9L1813.5 561.0L1795.0 555.1L1776.7 549.3L1758.7 543.5L1740.8 537.7L1722.9 531.9L1705.2 526.3L1687.4 520.7L1669.5 515.2L1651.5 509.9L1633.5 504.6L1615.5 499.4L1597.4 494.4L1579.5 489.4L1561.6 484.6L1542.6 479.6L1522.2 474.5L1501.9 469.4L1483.1 464.8L1467.2 460.9L1455.7 458.1L1467.4 456.7L1479.3 459.6L1495.8 463.6L1515.3 468.3L1536.4 473.4L1557.5 478.5L1577.2 483.4L1595.7 487.9L1614.3 492.5L1633.0 497.1L1651.7 501.8L1670.4 506.7L1689.0 511.8L1707.5 517.2L1726.0 522.8L1744.4 528.6L1762.9 534.5L1781.4 540.5L1800.1 546.5L1819.0 552.7L1838.2 559.1L1857.5 565.6L1876.7 572.1L1895.7 578.5L1914.3 584.9L1932.5 591.1L1950.3 597.1L1968.0 603.1L1985.6 609.2L2003.3 615.4L2021.2 622.1L2039.5 629.1L2058.0 636.5L2076.6 644.0L2095.1 651.7L2113.5 659.5L2131.5 667.2L2149.2 674.9L2166.8 682.7L2184.2 690.6L2201.4 698.4L2218.4 706.4L2235.2 714.3L2251.7 722.3L2267.9 730.1L2283.9 738.1L2299.8 746.1L2315.7 754.4L2331.7 762.9L2347.7 771.5L2363.5 780.3L2379.4 789.3L2395.3 798.6L2411.5 808.2L2428.0 818.3L2444.8 828.8L2461.9 839.8L2479.2 851.1L2496.7 862.8L2514.4 874.7L2532.2 887.0L2550.1 899.1L2568.1 911.0L2586.3 923.3L2604.7 936.3L2623.4 950.5L2642.4 966.4L2662.0 983.7L2682.0 1002.2L2702.4 1021.9L2722.8 1043.0L2743.2 1065.4L2763.2 1089.5L2783.9 1117.1L2805.5 1148.5L2827.0 1181.3L2847.3 1213.3L2865.4 1242.0L2880.0 1265.2L2890.9 1282.5L2898.7 1295.8L2904.3 1305.8L2908.3 1313.4L2911.3 1319.4L2914.0 1324.5Z" fill="#b4b5b7" clip-path="url(#silc)"/>
<path d="M2881.0 1326.7L2878.3 1321.6L2875.5 1315.6L2871.7 1308.0L2866.2 1297.9L2858.2 1284.6L2847.0 1267.4L2831.6 1244.3L2812.3 1215.6L2790.6 1183.7L2767.7 1150.9L2744.9 1119.7L2723.6 1092.4L2703.4 1068.7L2683.3 1046.9L2663.3 1026.5L2643.6 1007.4L2624.1 989.4L2605.0 972.1L2586.3 955.9L2568.0 941.1L2550.0 927.2L2532.2 914.1L2514.5 901.4L2497.0 888.9L2479.6 876.5L2462.3 864.5L2445.1 852.9L2428.2 841.8L2411.5 831.0L2395.0 820.7L2378.9 810.8L2363.1 801.5L2347.5 792.6L2332.1 784.0L2316.6 775.4L2300.9 766.8L2285.1 758.1L2269.4 749.6L2253.7 741.1L2237.8 732.7L2221.8 724.5L2205.5 716.3L2189.0 708.2L2172.4 700.3L2155.5 692.4L2138.5 684.7L2121.4 677.0L2104.0 669.4L2086.3 661.8L2068.3 654.3L2050.2 646.9L2031.9 639.5L2013.8 632.3L1995.9 625.2L1978.3 618.3L1961.0 611.5L1943.7 604.8L1926.4 598.2L1909.0 591.7L1891.2 585.3L1873.0 579.0L1854.6 572.8L1835.9 566.7L1817.3 560.7L1798.7 554.8L1780.3 548.9L1762.2 543.0L1744.2 537.2L1726.2 531.4L1708.4 525.7L1690.5 520.2L1672.5 514.7L1654.4 509.4L1636.3 504.2L1618.2 499.1L1600.0 494.1L1582.0 489.2L1564.0 484.4L1544.9 479.5L1524.4 474.3L1504.0 469.2L1485.0 464.6L1469.1 460.7L1457.5 457.9L1467.4 456.7L1479.3 459.6L1495.8 463.6L1515.3 468.3L1536.4 473.4L1557.5 478.5L1577.2 483.4L1595.7 487.9L1614.3 492.5L1633.0 497.1L1651.7 501.8L1670.4 506.7L1689.0 511.8L1707.5 517.2L1726.0 522.8L1744.4 528.6L1762.9 534.5L1781.4 540.5L1800.1 546.5L1819.0 552.7L1838.2 559.1L1857.5 565.6L1876.7 572.1L1895.7 578.5L1914.3 584.9L1932.5 591.1L1950.3 597.1L1968.0 603.1L1985.6 609.2L2003.3 615.4L2021.2 622.1L2039.5 629.1L2058.0 636.5L2076.6 644.0L2095.1 651.7L2113.5 659.5L2131.5 667.2L2149.2 674.9L2166.8 682.7L2184.2 690.6L2201.4 698.4L2218.4 706.4L2235.2 714.3L2251.7 722.3L2267.9 730.1L2283.9 738.1L2299.8 746.1L2315.7 754.4L2331.7 762.9L2347.7 771.5L2363.5 780.3L2379.4 789.3L2395.3 798.6L2411.5 808.2L2428.0 818.3L2444.8 828.8L2461.9 839.8L2479.2 851.1L2496.7 862.8L2514.4 874.7L2532.2 887.0L2550.1 899.1L2568.1 911.0L2586.3 923.3L2604.7 936.3L2623.4 950.5L2642.4 966.4L2662.0 983.7L2682.0 1002.2L2702.4 1021.9L2722.8 1043.0L2743.2 1065.4L2763.2 1089.5L2783.9 1117.1L2805.5 1148.5L2827.0 1181.3L2847.3 1213.3L2865.4 1242.0L2880.0 1265.2L2890.9 1282.5L2898.7 1295.8L2904.3 1305.8L2908.3 1313.4L2911.3 1319.4L2914.0 1324.5Z" fill="#afb0b2" clip-path="url(#silc)"/>
<path d="M2885.8 1326.4L2883.1 1321.3L2880.3 1315.3L2876.5 1307.7L2870.9 1297.6L2863.0 1284.3L2851.8 1267.1L2836.5 1243.9L2817.4 1215.2L2795.9 1183.3L2773.2 1150.6L2750.6 1119.3L2729.4 1092.0L2709.2 1068.3L2689.1 1046.3L2669.0 1025.8L2649.2 1006.7L2629.6 988.6L2610.4 971.3L2591.7 955.1L2573.3 940.4L2555.2 926.7L2537.4 913.7L2519.7 901.1L2502.1 888.6L2484.6 876.2L2467.3 864.2L2450.1 852.7L2433.1 841.5L2416.3 830.7L2399.8 820.3L2383.6 810.4L2367.8 801.1L2352.2 792.1L2336.6 783.4L2321.1 774.8L2305.4 766.2L2289.6 757.6L2273.8 749.1L2258.1 740.7L2242.2 732.4L2226.1 724.1L2209.8 716.0L2193.3 708.0L2176.6 700.0L2159.7 692.2L2142.7 684.4L2125.4 676.7L2108.0 669.1L2090.3 661.5L2072.2 653.9L2054.0 646.5L2035.7 639.1L2017.5 631.8L1999.6 624.8L1982.0 617.9L1964.6 611.1L1947.3 604.5L1929.9 598.0L1912.4 591.6L1894.6 585.2L1876.3 578.9L1857.8 572.7L1839.1 566.5L1820.3 560.5L1801.6 554.5L1783.2 548.5L1765.0 542.6L1746.9 536.8L1728.9 531.0L1710.9 525.3L1693.0 519.7L1674.9 514.3L1656.8 509.0L1638.6 503.8L1620.3 498.8L1602.1 493.9L1584.0 489.0L1565.9 484.3L1546.7 479.3L1526.1 474.2L1505.6 469.1L1486.6 464.5L1470.6 460.5L1458.9 457.7L1467.4 456.7L1479.3 459.6L1495.8 463.6L1515.3 468.3L1536.4 473.4L1557.5 478.5L1577.2 483.4L1595.7 487.9L1614.3 492.5L1633.0 497.1L1651.7 501.8L1670.4 506.7L1689.0 511.8L1707.5 517.2L1726.0 522.8L1744.4 528.6L1762.9 534.5L1781.4 540.5L1800.1 546.5L1819.0 552.7L1838.2 559.1L1857.5 565.6L1876.7 572.1L1895.7 578.5L1914.3 584.9L1932.5 591.1L1950.3 597.1L1968.0 603.1L1985.6 609.2L2003.3 615.4L2021.2 622.1L2039.5 629.1L2058.0 636.5L2076.6 644.0L2095.1 651.7L2113.5 659.5L2131.5 667.2L2149.2 674.9L2166.8 682.7L2184.2 690.6L2201.4 698.4L2218.4 706.4L2235.2 714.3L2251.7 722.3L2267.9 730.1L2283.9 738.1L2299.8 746.1L2315.7 754.4L2331.7 762.9L2347.7 771.5L2363.5 780.3L2379.4 789.3L2395.3 798.6L2411.5 808.2L2428.0 818.3L2444.8 828.8L2461.9 839.8L2479.2 851.1L2496.7 862.8L2514.4 874.7L2532.2 887.0L2550.1 899.1L2568.1 911.0L2586.3 923.3L2604.7 936.3L2623.4 950.5L2642.4 966.4L2662.0 983.7L2682.0 1002.2L2702.4 1021.9L2722.8 1043.0L2743.2 1065.4L2763.2 1089.5L2783.9 1117.1L2805.5 1148.5L2827.0 1181.3L2847.3 1213.3L2865.4 1242.0L2880.0 1265.2L2890.9 1282.5L2898.7 1295.8L2904.3 1305.8L2908.3 1313.4L2911.3 1319.4L2914.0 1324.5Z" fill="#a9aaac" clip-path="url(#silc)"/>
<path d="M2890.0 1326.1L2887.3 1321.0L2884.4 1315.0L2880.6 1307.4L2875.1 1297.3L2867.1 1284.1L2856.0 1266.8L2840.8 1243.7L2821.9 1215.0L2800.5 1183.0L2778.0 1150.3L2755.5 1119.0L2734.4 1091.6L2714.3 1067.8L2694.1 1045.8L2674.0 1025.3L2654.1 1006.0L2634.4 987.8L2615.2 970.5L2596.4 954.4L2578.0 939.8L2559.9 926.2L2542.0 913.3L2524.2 900.8L2506.6 888.3L2489.1 876.0L2471.7 864.0L2454.4 852.4L2437.4 841.2L2420.6 830.4L2404.0 820.0L2387.8 810.1L2371.9 800.7L2356.2 791.7L2340.6 783.0L2325.0 774.3L2309.3 765.7L2293.5 757.1L2277.7 748.6L2261.9 740.3L2246.0 732.0L2229.9 723.9L2213.6 715.8L2197.0 707.7L2180.3 699.8L2163.4 691.9L2146.3 684.2L2129.0 676.4L2111.5 668.8L2093.7 661.2L2075.6 653.6L2057.3 646.1L2039.0 638.7L2020.8 631.4L2002.8 624.4L1985.1 617.5L1967.7 610.8L1950.3 604.3L1933.0 597.9L1915.4 591.5L1897.5 585.2L1879.2 578.8L1860.6 572.6L1841.8 566.4L1823.0 560.3L1804.2 554.2L1785.7 548.2L1767.4 542.3L1749.3 536.4L1731.2 530.6L1713.2 524.9L1695.1 519.4L1677.0 513.9L1658.8 508.7L1640.5 503.5L1622.2 498.5L1603.9 493.7L1585.7 488.8L1567.6 484.1L1548.3 479.2L1527.7 474.0L1507.1 469.0L1488.0 464.3L1471.9 460.4L1460.2 457.6L1467.4 456.7L1479.3 459.6L1495.8 463.6L1515.3 468.3L1536.4 473.4L1557.5 478.5L1577.2 483.4L1595.7 487.9L1614.3 492.5L1633.0 497.1L1651.7 501.8L1670.4 506.7L1689.0 511.8L1707.5 517.2L1726.0 522.8L1744.4 528.6L1762.9 534.5L1781.4 540.5L1800.1 546.5L1819.0 552.7L1838.2 559.1L1857.5 565.6L1876.7 572.1L1895.7 578.5L1914.3 584.9L1932.5 591.1L1950.3 597.1L1968.0 603.1L1985.6 609.2L2003.3 615.4L2021.2 622.1L2039.5 629.1L2058.0 636.5L2076.6 644.0L2095.1 651.7L2113.5 659.5L2131.5 667.2L2149.2 674.9L2166.8 682.7L2184.2 690.6L2201.4 698.4L2218.4 706.4L2235.2 714.3L2251.7 722.3L2267.9 730.1L2283.9 738.1L2299.8 746.1L2315.7 754.4L2331.7 762.9L2347.7 771.5L2363.5 780.3L2379.4 789.3L2395.3 798.6L2411.5 808.2L2428.0 818.3L2444.8 828.8L2461.9 839.8L2479.2 851.1L2496.7 862.8L2514.4 874.7L2532.2 887.0L2550.1 899.1L2568.1 911.0L2586.3 923.3L2604.7 936.3L2623.4 950.5L2642.4 966.4L2662.0 983.7L2682.0 1002.2L2702.4 1021.9L2722.8 1043.0L2743.2 1065.4L2763.2 1089.5L2783.9 1117.1L2805.5 1148.5L2827.0 1181.3L2847.3 1213.3L2865.4 1242.0L2880.0 1265.2L2890.9 1282.5L2898.7 1295.8L2904.3 1305.8L2908.3 1313.4L2911.3 1319.4L2914.0 1324.5Z" fill="#a2a3a5" clip-path="url(#silc)"/>
<path d="M2893.0 1325.9L2890.3 1320.8L2887.4 1314.8L2883.6 1307.2L2878.0 1297.1L2870.1 1283.9L2859.0 1266.6L2843.8 1243.5L2825.1 1214.7L2803.8 1182.8L2781.4 1150.0L2759.1 1118.8L2738.0 1091.3L2717.9 1067.5L2697.7 1045.4L2677.5 1024.8L2657.6 1005.5L2637.9 987.3L2618.6 970.0L2599.8 953.9L2581.3 939.3L2563.2 925.8L2545.2 913.0L2527.5 900.6L2509.8 888.2L2492.2 875.8L2474.8 863.9L2457.5 852.3L2440.5 841.0L2423.6 830.2L2407.0 819.8L2390.7 809.8L2374.8 800.4L2359.1 791.4L2343.5 782.6L2327.9 774.0L2312.1 765.4L2296.3 756.8L2280.5 748.3L2264.7 740.0L2248.7 731.8L2232.7 723.7L2216.3 715.6L2199.7 707.6L2182.9 699.6L2166.0 691.8L2148.8 684.0L2131.5 676.3L2114.0 668.6L2096.2 661.0L2078.1 653.4L2059.8 645.8L2041.4 638.4L2023.1 631.2L2005.1 624.1L1987.4 617.2L1969.9 610.6L1952.6 604.1L1935.1 597.8L1917.5 591.5L1899.6 585.1L1881.3 578.8L1862.6 572.5L1843.8 566.3L1824.9 560.1L1806.1 554.0L1787.5 548.0L1769.2 542.1L1751.0 536.2L1732.8 530.4L1714.8 524.7L1696.7 519.1L1678.5 513.7L1660.2 508.4L1641.9 503.3L1623.6 498.4L1605.2 493.5L1587.0 488.7L1568.8 484.0L1549.5 479.1L1528.8 474.0L1508.1 468.9L1488.9 464.2L1472.8 460.3L1461.1 457.4L1467.4 456.7L1479.3 459.6L1495.8 463.6L1515.3 468.3L1536.4 473.4L1557.5 478.5L1577.2 483.4L1595.7 487.9L1614.3 492.5L1633.0 497.1L1651.7 501.8L1670.4 506.7L1689.0 511.8L1707.5 517.2L1726.0 522.8L1744.4 528.6L1762.9 534.5L1781.4 540.5L1800.1 546.5L1819.0 552.7L1838.2 559.1L1857.5 565.6L1876.7 572.1L1895.7 578.5L1914.3 584.9L1932.5 591.1L1950.3 597.1L1968.0 603.1L1985.6 609.2L2003.3 615.4L2021.2 622.1L2039.5 629.1L2058.0 636.5L2076.6 644.0L2095.1 651.7L2113.5 659.5L2131.5 667.2L2149.2 674.9L2166.8 682.7L2184.2 690.6L2201.4 698.4L2218.4 706.4L2235.2 714.3L2251.7 722.3L2267.9 730.1L2283.9 738.1L2299.8 746.1L2315.7 754.4L2331.7 762.9L2347.7 771.5L2363.5 780.3L2379.4 789.3L2395.3 798.6L2411.5 808.2L2428.0 818.3L2444.8 828.8L2461.9 839.8L2479.2 851.1L2496.7 862.8L2514.4 874.7L2532.2 887.0L2550.1 899.1L2568.1 911.0L2586.3 923.3L2604.7 936.3L2623.4 950.5L2642.4 966.4L2662.0 983.7L2682.0 1002.2L2702.4 1021.9L2722.8 1043.0L2743.2 1065.4L2763.2 1089.5L2783.9 1117.1L2805.5 1148.5L2827.0 1181.3L2847.3 1213.3L2865.4 1242.0L2880.0 1265.2L2890.9 1282.5L2898.7 1295.8L2904.3 1305.8L2908.3 1313.4L2911.3 1319.4L2914.0 1324.5Z" fill="#9b9c9e" clip-path="url(#silc)"/>
<path d="M2132.6 1413.1L2893.0 1323.0L2893.0 1366.3L2151.0 1456.5L2144.6 1452.3L2139.2 1448.4L2134.8 1444.4L2131.5 1440.4L2129.4 1436.3L2128.4 1431.8L2128.6 1426.9L2128.6 1426.9L2129.1 1422.7L2129.6 1419.5L2130.2 1416.9L2131.1 1414.9L2132.6 1413.1Z" fill="url(#tailg)"/>
<g fill="none" stroke="#262626" stroke-width="1.35" stroke-linecap="round" stroke-linejoin="round">
<g clip-path="url(#deckc)">
<path d="M2196.3 1405.6C2175.9 1397.0 2157.0 1388.7 2073.7 1354.0C1990.4 1319.2 1801.7 1241.8 1696.5 1196.9C1591.3 1152.0 1514.8 1117.4 1442.7 1084.6C1370.7 1051.7 1317.4 1025.6 1264.1 999.9C1210.8 974.2 1165.3 951.3 1122.9 930.4C1080.6 909.6 1046.4 893.1 1010.3 874.7C974.1 856.3 939.8 837.6 906.2 820.1C872.7 802.5 840.6 785.8 808.9 769.4C777.2 753.0 745.6 737.3 715.8 721.7C686.1 706.2 658.4 690.3 630.2 676.1C602.0 661.9 572.0 649.6 546.6 636.6C521.1 623.6 500.3 610.5 477.6 598.1C454.9 585.8 431.8 573.6 410.4 562.6C389.1 551.5 368.4 541.0 349.5 531.8C330.6 522.5 313.8 514.1 297.1 507.1C280.4 500.2 263.7 494.3 249.4 489.9C235.1 485.5 222.8 481.6 211.4 480.7C199.9 479.9 185.6 484.0 180.5 484.7"/>
<path d="M2237.0 1400.8C2217.5 1392.1 2199.9 1383.8 2120.3 1348.6C2040.8 1313.3 1860.7 1234.6 1759.9 1189.3C1659.0 1143.9 1585.0 1109.5 1515.2 1076.4C1445.5 1043.4 1393.6 1016.8 1341.5 990.9C1289.4 965.0 1244.4 942.1 1202.6 921.1C1160.9 900.2 1126.8 883.7 1090.9 865.2C1054.9 846.8 1020.7 828.1 987.1 810.6C953.5 793.0 921.2 776.3 889.2 760.1C857.1 743.8 825.0 728.4 794.8 713.0C764.6 697.6 736.7 681.7 708.0 667.7C679.3 653.7 648.7 641.7 622.6 629.0C596.5 616.2 574.7 603.4 551.2 591.3C527.6 579.3 503.7 567.3 481.4 556.6C459.2 545.8 437.6 535.5 417.6 526.6C397.6 517.6 379.2 509.5 361.4 502.9C343.6 496.3 326.2 491.0 310.9 486.9C295.6 482.8 282.3 479.1 269.8 478.5C257.4 477.8 241.8 482.2 236.2 483.0"/>
<path d="M2277.5 1396.1C2259.0 1387.3 2242.5 1379.0 2166.7 1343.2C2090.9 1307.5 1919.3 1227.5 1822.7 1181.7C1726.1 1135.9 1654.5 1101.6 1587.1 1068.4C1519.6 1035.1 1469.0 1008.1 1418.0 982.0C1367.1 956.0 1322.7 933.0 1281.5 912.0C1240.3 891.0 1206.5 874.3 1170.7 855.9C1135.0 837.4 1100.9 818.7 1067.2 801.2C1033.6 783.7 1001.1 766.9 968.8 750.8C936.4 734.7 903.8 719.7 873.2 704.4C842.6 689.2 814.3 673.2 785.2 659.4C756.0 645.5 724.9 633.9 698.1 621.4C671.3 609.0 648.6 596.4 624.3 584.6C599.9 572.8 575.1 561.1 551.9 550.6C528.8 540.1 506.4 530.1 485.3 521.4C464.2 512.8 444.1 505.0 425.3 498.7C406.4 492.5 388.3 487.6 372.1 483.8C355.9 480.1 341.4 476.6 328.0 476.2C314.6 475.8 297.7 480.4 291.6 481.2"/>
<path d="M2317.8 1391.4C2300.3 1382.5 2284.9 1374.1 2212.8 1337.9C2140.7 1301.7 1977.4 1220.4 1885.0 1174.2C1792.6 1127.9 1723.4 1093.9 1658.2 1060.4C1593.0 1026.9 1543.6 999.5 1493.9 973.3C1444.1 947.0 1400.3 924.1 1359.7 903.0C1319.0 881.9 1285.4 865.1 1249.9 846.6C1214.4 828.1 1180.4 809.4 1146.7 791.9C1113.0 774.4 1080.4 757.7 1047.8 741.7C1015.1 725.7 982.0 711.0 951.0 695.9C920.0 680.9 891.5 664.8 861.8 651.1C832.2 637.5 800.6 626.2 773.1 614.0C745.6 601.8 722.1 589.5 696.9 577.9C671.7 566.4 646.1 555.0 622.0 544.7C598.0 534.5 574.8 524.7 552.6 516.3C530.4 508.0 508.7 500.5 488.8 494.5C468.8 488.6 450.1 484.2 432.9 480.8C415.8 477.3 400.2 474.1 385.8 473.9C371.4 473.7 353.3 478.5 346.8 479.5"/>
<path d="M2358.0 1386.8C2341.4 1377.7 2327.2 1369.3 2258.7 1332.6C2190.1 1295.9 2035.1 1213.4 1946.8 1166.7C1858.5 1120.1 1791.7 1086.2 1728.7 1052.5C1665.7 1018.9 1617.5 991.0 1568.9 964.6C1520.3 938.2 1477.2 915.2 1437.1 894.1C1397.0 872.9 1363.6 856.1 1328.3 837.5C1293.1 819.0 1259.2 800.2 1225.5 782.8C1191.8 765.3 1159.0 748.5 1126.1 732.7C1093.3 716.8 1059.6 702.5 1028.3 687.6C996.9 672.6 968.0 656.5 937.9 643.1C907.8 629.6 875.8 618.6 847.6 606.6C819.5 594.6 795.0 582.6 769.0 571.3C743.0 560.1 716.6 548.9 691.6 538.9C666.7 528.9 642.8 519.4 619.5 511.3C596.2 503.2 572.9 496.0 551.9 490.4C530.9 484.8 511.6 480.8 493.5 477.7C475.4 474.6 458.7 471.6 443.4 471.6C428.0 471.6 408.6 476.7 401.6 477.7"/>
<path d="M2398.0 1382.1C2382.4 1373.0 2369.2 1364.4 2304.3 1327.3C2239.3 1290.2 2092.4 1206.5 2008.1 1159.4C1923.8 1112.3 1859.4 1078.7 1798.6 1044.8C1737.8 1010.9 1690.7 982.7 1643.3 956.1C1595.8 929.5 1553.3 906.5 1513.8 885.3C1474.2 864.0 1441.1 847.2 1406.1 828.6C1371.0 810.0 1337.3 791.3 1303.6 773.8C1269.9 756.3 1237.0 739.6 1203.9 723.8C1170.8 708.1 1136.7 694.1 1105.0 679.3C1073.2 664.5 1044.1 648.4 1013.5 635.1C982.9 621.8 950.4 611.1 921.6 599.4C892.8 587.6 867.5 575.9 840.7 564.8C813.9 553.8 786.6 542.9 760.8 533.2C735.0 523.4 710.3 514.1 685.9 506.3C661.6 498.4 636.8 491.5 614.7 486.3C592.7 481.0 572.7 477.5 553.7 474.6C534.6 471.8 516.8 469.0 500.6 469.2C484.4 469.4 463.6 474.7 456.2 475.8"/>
<path d="M2437.8 1377.5C2423.1 1368.2 2411.1 1359.6 2349.6 1322.1C2288.1 1284.5 2149.2 1199.6 2068.9 1152.2C1988.5 1104.7 1926.4 1071.2 1867.7 1037.1C1809.1 1003.1 1763.2 974.5 1716.9 947.8C1670.5 921.0 1628.7 898.0 1589.7 876.7C1550.8 855.4 1517.9 838.4 1483.1 819.8C1448.3 801.2 1414.8 782.4 1381.1 765.0C1347.4 747.6 1314.4 730.8 1281.0 715.1C1247.7 699.5 1213.2 685.9 1181.1 671.3C1149.0 656.6 1119.6 640.4 1088.5 627.3C1057.5 614.1 1024.5 603.7 995.0 592.2C965.6 580.8 939.4 569.2 911.8 558.4C884.3 547.7 856.2 537.0 829.6 527.5C802.9 518.0 777.4 508.9 752.0 501.3C726.6 493.7 700.2 487.1 677.1 482.2C654.1 477.2 633.4 474.1 613.5 471.6C593.6 469.0 574.7 466.5 557.5 466.8C540.4 467.2 518.4 472.7 510.6 473.9"/>
<path d="M2477.5 1372.9C2463.7 1363.5 2452.7 1354.9 2394.7 1316.9C2336.6 1278.9 2205.5 1192.9 2129.1 1145.0C2052.7 1097.2 1992.8 1063.8 1936.3 1029.6C1879.7 995.4 1835.0 966.5 1789.7 939.6C1744.5 912.7 1703.3 889.7 1664.9 868.3C1626.6 846.9 1593.9 829.9 1559.4 811.2C1524.9 792.6 1491.5 773.9 1457.9 756.4C1424.3 739.0 1391.1 722.2 1357.6 706.7C1324.1 691.2 1289.2 677.9 1256.7 663.4C1224.3 648.9 1194.5 632.7 1163.1 619.7C1131.6 606.6 1098.1 596.5 1068.0 585.3C1037.9 574.0 1010.9 562.8 982.6 552.2C954.2 541.6 925.4 531.2 897.9 521.9C870.4 512.6 844.1 503.7 817.6 496.4C791.2 489.1 763.3 482.7 739.2 478.1C715.1 473.4 693.9 470.7 673.0 468.4C652.2 466.1 632.3 463.8 614.2 464.4C596.1 464.9 572.9 470.6 564.6 471.9"/>
<path d="M2517.1 1368.3C2504.1 1358.8 2494.2 1350.1 2439.5 1311.7C2384.8 1273.4 2261.5 1186.4 2188.9 1138.1C2116.4 1089.9 2058.7 1056.7 2004.2 1022.3C1949.7 987.9 1906.0 958.7 1861.9 931.7C1817.8 904.7 1777.3 881.7 1739.5 860.3C1701.7 838.8 1669.3 821.8 1635.1 803.1C1600.9 784.5 1567.7 765.7 1534.1 748.3C1500.5 730.9 1467.2 714.2 1433.5 698.7C1399.8 683.3 1364.6 670.3 1331.8 655.9C1299.1 641.5 1269.0 625.3 1237.1 612.5C1205.2 599.6 1171.2 589.7 1140.5 578.7C1109.8 567.6 1081.9 556.6 1052.8 546.2C1023.7 535.8 994.1 525.6 965.8 516.6C937.4 507.5 910.4 498.7 882.9 491.6C855.4 484.5 826.0 478.4 800.9 474.0C775.8 469.6 754.0 467.2 732.3 465.2C710.5 463.1 689.5 461.0 670.6 461.7C651.6 462.4 627.1 468.3 618.4 469.6"/>
<path d="M2556.5 1363.7C2544.4 1354.2 2535.5 1345.3 2484.1 1306.8C2432.7 1268.3 2317.0 1181.1 2248.2 1132.7C2179.4 1084.3 2123.9 1050.9 2071.4 1016.5C2019.0 982.1 1976.4 953.2 1933.4 926.4C1890.4 899.5 1850.5 876.5 1813.3 855.2C1776.1 833.9 1744.0 816.9 1710.1 798.4C1676.1 779.9 1643.1 761.2 1609.6 743.9C1576.1 726.7 1542.8 710.0 1508.9 694.7C1475.0 679.3 1439.4 666.2 1406.4 651.9C1373.3 637.5 1342.9 621.5 1310.6 608.6C1278.3 595.8 1243.8 585.9 1212.5 574.8C1181.1 563.7 1152.5 552.7 1122.6 542.3C1092.7 532.0 1062.4 521.7 1033.2 512.6C1004.1 503.5 976.3 494.8 947.8 487.7C919.3 480.6 888.4 474.5 862.3 470.0C836.2 465.5 813.8 462.9 791.1 460.8C768.5 458.6 746.5 456.4 726.6 457.1C706.8 457.8 681.1 463.7 672.0 465.0"/>
<path d="M2595.7 1359.1C2584.5 1349.6 2576.5 1340.5 2528.4 1301.9C2480.3 1263.3 2372.1 1176.0 2307.0 1127.5C2242.0 1079.0 2188.6 1045.3 2138.1 1010.9C2087.6 976.6 2046.1 948.0 2004.2 921.3C1962.2 894.6 1923.1 871.7 1886.5 850.5C1849.8 829.3 1818.1 812.5 1784.4 794.1C1750.8 775.7 1718.0 757.2 1684.5 740.0C1651.1 722.8 1617.7 706.4 1583.7 691.1C1549.7 675.8 1513.8 662.5 1480.4 648.2C1447.1 633.9 1416.3 618.1 1383.6 605.2C1350.8 592.4 1315.9 582.4 1284.0 571.3C1252.0 560.2 1222.6 549.1 1192.0 538.7C1161.3 528.3 1130.2 518.1 1100.3 508.9C1070.3 499.8 1041.7 491.0 1012.2 483.8C982.8 476.7 950.4 470.6 923.3 466.0C896.2 461.4 873.2 458.5 849.7 456.2C826.2 454.0 803.1 451.8 782.4 452.4C761.7 453.0 734.8 458.8 725.2 460.1"/>
<path d="M2634.8 1354.6C2624.4 1345.0 2617.4 1335.7 2572.5 1297.0C2527.6 1258.3 2426.7 1171.0 2365.3 1122.4C2304.0 1073.8 2252.7 1039.8 2204.1 1005.5C2155.6 971.1 2115.1 943.0 2074.2 916.4C2033.4 889.8 1995.0 867.1 1958.9 846.0C1922.9 824.9 1891.4 808.3 1858.1 790.0C1824.7 771.8 1792.2 753.4 1758.8 736.3C1725.4 719.3 1692.0 702.9 1657.9 687.7C1623.7 672.4 1587.6 659.0 1553.9 644.7C1520.3 630.5 1489.2 614.9 1456.0 602.0C1422.9 589.2 1387.5 579.1 1355.0 567.9C1322.5 556.8 1292.2 545.6 1260.8 535.2C1229.5 524.8 1197.6 514.5 1166.9 505.3C1136.1 496.1 1106.8 487.3 1076.3 480.1C1045.9 472.8 1012.1 466.7 984.0 462.0C955.9 457.2 932.3 454.1 908.0 451.7C883.6 449.3 859.5 447.0 837.9 447.6C816.3 448.1 788.2 453.8 778.3 455.1"/>
<path d="M2673.7 1350.1C2664.1 1340.4 2658.1 1330.9 2616.4 1292.1C2574.6 1253.4 2481.0 1166.1 2423.2 1117.4C2365.4 1068.8 2316.2 1034.4 2269.6 1000.1C2223.0 965.8 2183.5 938.1 2143.7 911.7C2103.9 885.3 2066.2 862.6 2030.7 841.7C1995.3 820.7 1964.2 804.3 1931.1 786.2C1898.1 768.0 1865.8 749.8 1832.5 732.8C1799.2 715.9 1765.8 699.7 1731.5 684.5C1697.3 669.2 1660.8 655.7 1626.9 641.5C1593.0 627.2 1561.6 611.8 1528.0 599.0C1494.5 586.2 1458.7 575.9 1425.5 564.7C1392.4 553.5 1361.4 542.3 1329.3 531.8C1297.2 521.3 1264.6 511.0 1233.1 501.7C1201.5 492.5 1171.5 483.6 1140.1 476.3C1108.6 469.1 1073.4 462.9 1044.3 458.0C1015.3 453.1 991.1 449.6 965.9 447.1C940.7 444.5 915.6 442.2 893.1 442.7C870.6 443.2 841.4 448.8 831.0 450.0"/>
<path d="M2712.4 1345.5C2703.7 1335.8 2698.6 1326.2 2660.0 1287.3C2621.3 1248.5 2534.9 1161.3 2480.6 1112.5C2426.3 1063.8 2379.1 1029.1 2334.4 994.9C2289.7 960.6 2251.2 933.3 2212.4 907.1C2173.7 880.8 2136.7 858.2 2101.9 837.4C2067.1 816.7 2036.2 800.4 2003.5 782.4C1970.8 764.4 1938.7 746.3 1905.6 729.5C1872.4 712.6 1839.0 696.6 1804.6 681.4C1770.3 666.2 1733.6 652.5 1699.4 638.3C1665.2 624.1 1633.5 608.9 1599.5 596.1C1565.6 583.3 1529.3 572.8 1495.6 561.6C1461.9 550.3 1430.1 539.1 1397.3 528.5C1364.5 518.0 1331.2 507.6 1298.9 498.3C1266.5 488.9 1235.8 480.0 1203.4 472.7C1171.0 465.3 1134.3 459.1 1104.3 454.1C1074.4 449.0 1049.6 445.2 1023.5 442.5C997.5 439.8 971.4 437.4 948.0 437.8C924.7 438.2 894.3 443.7 883.5 444.9"/>
<path d="M2751.1 1341.1C2743.1 1331.3 2738.9 1321.4 2703.3 1282.5C2667.7 1243.7 2588.3 1156.5 2537.5 1107.7C2486.8 1058.9 2441.5 1023.9 2398.7 989.7C2355.9 955.5 2318.3 928.6 2280.5 902.6C2242.8 876.5 2206.6 854.0 2172.4 833.4C2138.2 812.7 2107.7 796.6 2075.3 778.8C2042.9 760.9 2011.1 742.9 1978.1 726.2C1945.0 709.5 1911.6 693.7 1877.2 678.5C1842.7 663.3 1805.8 649.4 1771.4 635.2C1737.0 621.0 1704.9 606.1 1670.5 593.3C1636.2 580.5 1599.5 569.9 1565.2 558.5C1530.9 547.2 1498.4 535.9 1464.9 525.3C1431.4 514.7 1397.3 504.2 1364.2 494.8C1331.2 485.5 1299.7 476.5 1266.3 469.0C1233.0 461.6 1194.9 455.3 1164.0 450.1C1133.1 444.9 1107.7 440.8 1080.9 437.9C1054.0 435.0 1026.9 432.5 1002.7 432.8C978.5 433.2 946.9 438.6 935.8 439.8"/>
<path d="M2789.5 1336.6C2782.3 1326.8 2779.0 1316.7 2746.5 1277.8C2713.9 1238.9 2641.4 1151.8 2594.0 1103.0C2546.7 1054.1 2503.4 1018.8 2462.4 984.7C2421.4 950.5 2384.7 924.1 2348.0 898.2C2311.3 872.3 2275.8 849.9 2242.2 829.4C2208.6 808.9 2178.5 793.0 2146.4 775.3C2114.4 757.6 2082.8 739.7 2050.0 723.1C2017.1 706.5 1983.7 690.8 1949.1 675.7C1914.6 660.6 1877.6 646.5 1842.9 632.3C1808.2 618.1 1775.8 603.3 1741.1 590.6C1706.3 577.8 1669.2 567.0 1634.4 555.6C1599.5 544.2 1566.2 532.8 1532.0 522.1C1497.8 511.5 1463.1 500.9 1429.2 491.5C1395.4 482.0 1363.2 473.0 1328.9 465.5C1294.6 457.9 1255.2 451.6 1223.3 446.2C1191.5 440.9 1165.6 436.3 1137.9 433.3C1110.2 430.2 1082.1 427.7 1057.1 427.9C1032.1 428.1 999.3 433.5 987.8 434.6"/>
<path d="M2827.8 1332.1C2821.4 1322.3 2819.0 1312.0 2789.3 1273.1C2759.7 1234.1 2694.0 1147.2 2650.0 1098.3C2606.0 1049.4 2564.7 1013.7 2525.5 979.7C2486.3 945.6 2450.5 919.6 2414.8 893.9C2379.1 868.2 2344.4 845.9 2311.4 825.5C2278.4 805.2 2248.7 789.4 2217.0 771.9C2185.3 754.3 2154.0 736.6 2121.3 720.1C2088.5 703.6 2055.2 688.1 2020.6 673.0C1986.0 657.9 1948.8 643.6 1913.9 629.4C1879.0 615.2 1846.3 600.7 1811.1 587.9C1776.0 575.2 1738.5 564.2 1703.1 552.7C1667.7 541.2 1633.6 529.8 1598.7 519.1C1563.8 508.3 1528.4 497.7 1493.8 488.1C1459.2 478.6 1426.4 469.5 1391.1 461.9C1355.9 454.3 1315.1 447.9 1282.3 442.3C1249.6 436.8 1223.1 431.9 1194.6 428.7C1166.1 425.4 1137.0 422.8 1111.2 422.9C1085.3 423.0 1051.4 428.3 1039.5 429.4"/>
<path d="M2866.0 1327.7C2860.3 1317.8 2858.7 1307.4 2832.0 1268.4C2805.3 1229.4 2746.3 1142.6 2705.6 1093.7C2664.9 1044.7 2625.4 1008.7 2588.0 974.7C2550.6 940.8 2515.7 915.2 2481.0 889.7C2446.3 864.2 2412.3 841.9 2380.0 821.7C2347.7 801.6 2318.2 786.0 2286.9 768.6C2255.6 751.1 2224.6 733.5 2192.0 717.2C2159.4 700.8 2126.1 685.5 2091.5 670.4C2056.9 655.3 2019.5 640.8 1984.4 626.6C1949.3 612.5 1916.2 598.2 1880.7 585.4C1845.2 572.6 1807.2 561.5 1771.3 549.9C1735.3 538.3 1700.5 526.9 1665.0 516.0C1629.5 505.2 1593.3 494.5 1558.0 484.9C1522.7 475.3 1489.2 466.1 1453.0 458.4C1416.8 450.7 1374.7 444.2 1341.0 438.5C1307.3 432.8 1280.3 427.5 1251.0 424.1C1221.7 420.6 1191.7 417.9 1165.0 417.9C1138.3 418.0 1103.3 423.2 1091.0 424.2"/>
</g>
<g clip-path="url(#silc)">
<path d="M2155.5 1410.3C2134.1 1401.8 2113.9 1393.7 2026.8 1359.4C1939.6 1325.1 1742.1 1249.1 1632.6 1204.7C1523.0 1160.3 1443.9 1125.4 1369.5 1092.8C1295.1 1060.2 1240.5 1034.5 1186.0 1009.0C1131.5 983.5 1085.3 960.6 1042.5 939.8C999.6 919.0 965.2 902.6 928.9 884.3C892.6 865.9 858.2 847.3 824.7 829.7C791.2 812.1 759.4 795.4 728.0 778.9C696.6 762.4 665.6 746.2 636.3 730.5C606.9 714.8 579.6 699.0 551.9 684.6C524.2 670.2 494.7 657.6 470.0 644.3C445.3 631.0 425.3 617.6 403.5 605.0C381.7 592.4 359.4 579.9 339.0 568.6C318.6 557.3 298.8 546.5 281.0 537.0C263.2 527.5 248.1 518.7 232.5 511.4C216.9 504.1 200.8 497.7 187.5 493.0C174.2 488.3 163.1 484.1 152.6 483.0C142.1 481.9 129.2 485.8 124.5 486.4"/>
<path d="M2026.8 1359.4C2034.6 1358.5 2058.1 1355.8 2073.7 1354.0C2089.3 1352.2 2104.8 1350.4 2120.3 1348.6C2135.8 1346.8 2151.3 1345.0 2166.7 1343.2C2182.1 1341.4 2197.5 1339.7 2212.8 1337.9C2228.1 1336.1 2243.4 1334.3 2258.7 1332.6C2273.9 1330.8 2289.1 1329.1 2304.3 1327.3C2319.4 1325.6 2334.5 1323.8 2349.6 1322.1C2364.7 1320.3 2379.7 1318.6 2394.7 1316.9C2409.7 1315.2 2424.6 1313.4 2439.5 1311.7C2454.4 1310.1 2469.3 1308.4 2484.1 1306.8C2498.9 1305.1 2513.7 1303.5 2528.4 1301.9C2543.2 1300.2 2557.9 1298.6 2572.5 1297.0C2587.2 1295.4 2601.8 1293.8 2616.4 1292.1C2630.9 1290.5 2645.5 1288.9 2660.0 1287.3C2674.5 1285.7 2688.9 1284.1 2703.3 1282.5C2717.7 1281.0 2732.1 1279.4 2746.5 1277.8C2760.8 1276.2 2775.1 1274.6 2789.3 1273.1C2803.6 1271.5 2815.0 1270.3 2832.0 1268.4C2849.0 1266.5 2881.7 1262.8 2891.6 1261.6"/>
<path d="M2026.8 1359.4 C2012.4 1364.8 1989.3 1363.5 1989.7 1380.6 C1990.1 1396.2 2004.5 1407.5 2013.5 1416.9"/>
<path d="M1632.6 1204.7C1643.2 1203.4 1675.3 1199.5 1696.5 1196.9C1717.7 1194.4 1738.8 1191.8 1759.9 1189.3C1780.9 1186.7 1801.8 1184.2 1822.7 1181.7C1843.6 1179.2 1864.3 1176.6 1885.0 1174.2C1905.7 1171.7 1926.3 1169.2 1946.8 1166.7C1967.3 1164.3 1987.7 1161.8 2008.1 1159.4C2028.4 1157.0 2048.7 1154.5 2068.9 1152.2C2089.0 1149.8 2109.1 1147.4 2129.1 1145.0C2149.1 1142.7 2169.1 1140.2 2188.9 1138.1C2208.8 1136.1 2228.5 1134.5 2248.2 1132.7C2267.9 1130.9 2287.5 1129.2 2307.0 1127.5C2326.5 1125.8 2346.0 1124.1 2365.3 1122.4C2384.7 1120.7 2404.0 1119.1 2423.2 1117.4C2442.4 1115.8 2461.5 1114.1 2480.6 1112.5C2499.7 1110.9 2518.6 1109.3 2537.5 1107.7C2556.4 1106.1 2575.3 1104.5 2594.0 1103.0C2612.8 1101.4 2631.4 1099.8 2650.0 1098.3C2668.6 1096.7 2690.3 1094.8 2705.6 1093.7C2720.9 1092.5 2732.0 1091.6 2741.6 1091.4C2751.2 1091.2 2759.6 1092.3 2763.2 1092.5"/>
<path d="M1632.6 1204.7 C1613.2 1211.7 1584.4 1213.5 1585.0 1236.4 C1585.5 1253.0 1593.9 1268.8 1603.5 1278.8"/>
<path d="M1369.5 1092.8C1381.7 1091.4 1418.4 1087.3 1442.7 1084.6C1467.0 1081.8 1491.2 1079.1 1515.2 1076.4C1539.3 1073.7 1563.2 1071.0 1587.1 1068.4C1610.9 1065.7 1634.6 1063.0 1658.2 1060.4C1681.8 1057.8 1705.3 1055.1 1728.7 1052.5C1752.1 1049.9 1775.4 1047.3 1798.6 1044.8C1821.7 1042.2 1844.8 1039.7 1867.7 1037.1C1890.7 1034.6 1913.5 1032.1 1936.3 1029.6C1959.0 1027.1 1981.6 1024.5 2004.2 1022.3C2026.7 1020.1 2049.1 1018.4 2071.4 1016.5C2093.8 1014.6 2116.0 1012.8 2138.1 1010.9C2160.2 1009.1 2182.2 1007.3 2204.1 1005.5C2226.1 1003.7 2247.9 1001.9 2269.6 1000.1C2291.3 998.4 2312.9 996.6 2334.4 994.9C2355.9 993.2 2377.4 991.4 2398.7 989.7C2420.0 988.0 2441.2 986.3 2462.4 984.7C2483.5 983.0 2504.5 981.3 2525.5 979.7C2546.4 978.0 2571.9 976.4 2588.0 974.7C2604.1 973.1 2612.9 970.7 2622.0 969.8C2631.1 968.9 2639.0 969.4 2642.4 969.3"/>
<path d="M1369.5 1092.8 C1346.8 1100.8 1315.5 1106.3 1316.2 1133.0 C1316.8 1154.0 1332.6 1171.2 1344.7 1183.8"/>
<path d="M1186.0 1009.0C1199.0 1007.5 1238.2 1002.9 1264.1 999.9C1290.0 996.9 1315.8 993.9 1341.5 990.9C1367.1 987.9 1392.7 985.0 1418.0 982.0C1443.4 979.1 1468.7 976.2 1493.9 973.3C1519.0 970.4 1544.0 967.5 1568.9 964.6C1593.8 961.8 1618.6 958.9 1643.3 956.1C1667.9 953.3 1692.4 950.5 1716.9 947.8C1741.3 945.0 1765.6 942.3 1789.7 939.6C1813.9 936.9 1838.0 933.9 1861.9 931.7C1885.8 929.5 1909.7 928.1 1933.4 926.4C1957.1 924.6 1980.7 923.0 2004.2 921.3C2027.6 919.6 2051.0 918.0 2074.2 916.4C2097.5 914.8 2120.6 913.2 2143.7 911.7C2166.7 910.1 2189.6 908.6 2212.4 907.1C2235.2 905.6 2257.9 904.1 2280.5 902.6C2303.1 901.1 2325.6 899.6 2348.0 898.2C2370.4 896.8 2392.6 895.3 2414.8 893.9C2437.0 892.5 2464.6 890.6 2481.0 889.7C2497.4 888.8 2504.5 888.3 2513.0 888.3C2521.5 888.3 2529.0 889.7 2532.2 890.0"/>
<path d="M1186.0 1009.0 C1162.4 1017.2 1133.2 1027.1 1133.9 1054.9 C1134.5 1078.0 1147.6 1099.2 1161.0 1113.0"/>
<path d="M1042.5 939.8C1055.9 938.2 1096.3 933.5 1122.9 930.4C1149.6 927.3 1176.2 924.2 1202.6 921.1C1229.0 918.1 1255.4 915.0 1281.5 912.0C1307.7 909.0 1333.8 905.9 1359.7 903.0C1385.6 900.0 1411.4 897.0 1437.1 894.1C1462.8 891.1 1488.3 888.2 1513.8 885.3C1539.2 882.4 1564.5 879.5 1589.7 876.7C1614.9 873.9 1640.0 871.0 1664.9 868.3C1689.9 865.6 1714.8 862.5 1739.5 860.3C1764.2 858.1 1788.8 856.8 1813.3 855.2C1837.8 853.6 1862.2 852.0 1886.5 850.5C1910.7 849.0 1934.9 847.5 1958.9 846.0C1983.0 844.5 2006.9 843.1 2030.7 841.7C2054.6 840.2 2078.3 838.8 2101.9 837.4C2125.5 836.1 2149.0 834.7 2172.4 833.4C2195.7 832.0 2219.0 830.7 2242.2 829.4C2265.4 828.1 2288.5 826.8 2311.4 825.5C2334.4 824.2 2363.6 822.7 2380.0 821.7C2396.4 820.8 2402.0 819.9 2410.0 819.9C2418.0 819.8 2425.0 821.0 2428.0 821.2"/>
<path d="M1042.5 939.8 C1017.5 948.4 987.7 960.3 988.4 989.7 C989.1 1016.4 1004.5 1040.9 1020.0 1056.9"/>
<path d="M928.9 884.3C942.5 882.7 983.3 877.9 1010.3 874.7C1037.2 871.5 1064.1 868.4 1090.9 865.2C1117.6 862.1 1144.2 859.0 1170.7 855.9C1197.2 852.8 1223.6 849.7 1249.9 846.6C1276.2 843.6 1302.3 840.5 1328.3 837.5C1354.4 834.5 1380.3 831.5 1406.1 828.6C1431.8 825.6 1457.5 822.7 1483.1 819.8C1508.6 816.9 1534.1 814.0 1559.4 811.2C1584.8 808.5 1610.0 805.3 1635.1 803.1C1660.2 801.0 1685.2 799.9 1710.1 798.4C1735.0 796.9 1759.7 795.5 1784.4 794.1C1809.1 792.7 1833.6 791.4 1858.1 790.0C1882.5 788.7 1906.9 787.4 1931.1 786.2C1955.4 784.9 1979.5 783.6 2003.5 782.4C2027.6 781.2 2051.5 780.0 2075.3 778.8C2099.1 777.6 2122.8 776.4 2146.4 775.3C2170.1 774.1 2193.6 773.0 2217.0 771.9C2240.4 770.7 2270.6 769.7 2286.9 768.6C2303.2 767.5 2307.4 765.8 2314.9 765.3C2322.4 764.8 2328.9 765.8 2331.7 765.8"/>
<path d="M928.9 884.3 C904.1 892.8 876.1 906.0 876.8 935.1 C877.7 966.3 898.5 993.3 916.5 1012.0"/>
<path d="M824.7 829.7C838.3 828.1 879.2 823.3 906.2 820.1C933.3 816.9 960.3 813.7 987.1 810.6C1013.9 807.4 1040.6 804.3 1067.2 801.2C1093.8 798.1 1120.3 795.0 1146.7 791.9C1173.1 788.8 1199.3 785.8 1225.5 782.8C1251.6 779.8 1277.7 776.8 1303.6 773.8C1329.5 770.8 1355.4 767.9 1381.1 765.0C1406.8 762.1 1432.4 759.2 1457.9 756.4C1483.4 753.7 1508.8 750.4 1534.1 748.3C1559.4 746.2 1584.5 745.3 1609.6 743.9C1634.7 742.6 1659.7 741.3 1684.5 740.0C1709.4 738.8 1734.2 737.5 1758.8 736.3C1783.5 735.1 1808.0 734.0 1832.5 732.8C1857.0 731.7 1881.3 730.6 1905.6 729.5C1929.8 728.4 1954.0 727.3 1978.1 726.2C2002.1 725.2 2026.1 724.1 2050.0 723.1C2073.8 722.1 2097.6 721.1 2121.3 720.1C2144.9 719.1 2175.7 717.9 2192.0 717.2C2208.3 716.5 2211.8 715.7 2219.0 715.7C2226.2 715.7 2232.5 717.0 2235.2 717.3"/>
<path d="M824.7 829.7 C799.0 838.4 771.9 854.1 772.7 884.3 C773.5 914.6 792.3 941.7 809.9 959.9"/>
<path d="M728.0 778.9C741.5 777.3 782.0 772.6 808.9 769.4C835.8 766.3 862.5 763.2 889.2 760.1C915.8 756.9 942.3 753.9 968.8 750.8C995.2 747.7 1021.5 744.7 1047.8 741.7C1074.0 738.6 1100.1 735.6 1126.1 732.7C1152.2 729.7 1178.1 726.7 1203.9 723.8C1229.7 720.9 1255.4 718.0 1281.0 715.1C1306.6 712.3 1332.2 709.4 1357.6 706.7C1383.0 704.0 1408.3 700.8 1433.5 698.7C1458.7 696.7 1483.9 696.0 1508.9 694.7C1533.9 693.4 1558.8 692.2 1583.7 691.1C1608.5 689.9 1633.3 688.8 1657.9 687.7C1682.5 686.6 1707.1 685.5 1731.5 684.5C1756.0 683.4 1780.4 682.4 1804.6 681.4C1828.9 680.4 1853.1 679.5 1877.2 678.5C1901.2 677.5 1925.2 676.6 1949.1 675.7C1973.1 674.8 1996.9 673.9 2020.6 673.0C2044.3 672.1 2075.5 671.1 2091.5 670.4C2107.5 669.7 2109.8 668.7 2116.5 668.7C2123.2 668.7 2129.0 669.9 2131.5 670.2"/>
<path d="M728.0 778.9 C701.9 787.6 675.1 804.2 675.9 834.7 C676.8 865.4 697.8 891.9 715.6 910.3"/>
<path d="M636.3 730.5C649.6 729.0 689.4 724.6 715.8 721.7C742.2 718.8 768.6 715.9 794.8 713.0C821.0 710.1 847.1 707.3 873.2 704.4C899.2 701.6 925.1 698.7 951.0 695.9C976.8 693.1 1002.6 690.3 1028.3 687.6C1053.9 684.8 1079.5 682.1 1105.0 679.3C1130.4 676.6 1155.8 673.9 1181.1 671.3C1206.4 668.6 1231.6 665.9 1256.7 663.4C1281.9 660.8 1306.9 657.8 1331.8 655.9C1356.8 654.0 1381.6 653.1 1406.4 651.9C1431.1 650.6 1455.8 649.4 1480.4 648.2C1505.0 647.0 1529.5 645.9 1553.9 644.7C1578.3 643.6 1602.7 642.5 1626.9 641.5C1651.2 640.4 1675.3 639.3 1699.4 638.3C1723.5 637.2 1747.5 636.2 1771.4 635.2C1795.3 634.2 1819.1 633.2 1842.9 632.3C1866.6 631.3 1890.3 630.4 1913.9 629.4C1937.5 628.5 1968.8 627.5 1984.4 626.6C2000.0 625.8 2001.3 624.4 2007.4 624.1C2013.5 623.8 2018.9 624.9 2021.2 625.1"/>
<path d="M636.3 730.5 C610.8 739.0 584.7 755.2 585.4 785.1 C586.2 814.1 602.1 840.9 618.9 858.3"/>
<path d="M551.9 684.6C565.0 683.2 604.2 678.9 630.2 676.1C656.2 673.3 682.1 670.5 708.0 667.7C733.8 664.9 759.5 662.1 785.2 659.4C810.8 656.6 836.3 653.9 861.8 651.1C887.3 648.4 912.6 645.7 937.9 643.1C963.2 640.4 988.4 637.7 1013.5 635.1C1038.6 632.5 1063.6 629.8 1088.5 627.3C1113.5 624.7 1138.3 622.1 1163.1 619.7C1187.8 617.2 1212.5 614.3 1237.1 612.5C1261.7 610.6 1286.2 609.8 1310.6 608.6C1335.0 607.4 1359.3 606.3 1383.6 605.2C1407.8 604.1 1432.0 603.1 1456.0 602.0C1480.1 601.0 1504.1 600.0 1528.0 599.0C1551.9 598.0 1575.8 597.0 1599.5 596.1C1623.3 595.1 1646.9 594.2 1670.5 593.3C1694.1 592.4 1717.6 591.5 1741.1 590.6C1764.5 589.7 1787.8 588.8 1811.1 587.9C1834.4 587.1 1865.6 585.8 1880.7 585.4C1895.8 585.0 1896.1 585.0 1901.7 585.4C1907.3 585.8 1912.2 587.5 1914.3 587.9"/>
<path d="M551.9 684.6 C526.9 692.9 501.8 709.3 502.5 738.5 C503.3 767.4 520.3 793.7 537.0 811.0"/>
<path d="M470.0 644.3C482.8 643.0 521.1 639.1 546.6 636.6C572.0 634.0 597.4 631.5 622.6 629.0C647.9 626.4 673.0 623.9 698.1 621.4C723.2 618.9 748.2 616.4 773.1 614.0C798.0 611.5 822.9 609.0 847.6 606.6C872.3 604.2 897.0 601.7 921.6 599.4C946.2 597.0 970.6 594.6 995.0 592.2C1019.5 589.9 1043.8 587.5 1068.0 585.3C1092.3 583.0 1116.4 580.4 1140.5 578.7C1164.6 576.9 1188.6 576.0 1212.5 574.8C1236.4 573.6 1260.2 572.4 1284.0 571.3C1307.7 570.1 1331.4 569.0 1355.0 567.9C1378.6 566.8 1402.1 565.7 1425.5 564.7C1449.0 563.6 1472.3 562.6 1495.6 561.6C1518.9 560.5 1542.1 559.5 1565.2 558.5C1588.3 557.5 1611.4 556.5 1634.4 555.6C1657.3 554.6 1680.2 553.7 1703.1 552.7C1725.9 551.8 1756.9 550.7 1771.3 549.9C1785.7 549.1 1784.5 548.2 1789.3 548.1C1794.1 548.0 1798.3 549.3 1800.1 549.5"/>
<path d="M470.0 644.3 C447.3 651.8 428.1 669.9 428.8 696.5 C429.6 723.8 443.0 749.7 458.8 766.1"/>
<path d="M403.5 605.0C415.8 603.9 453.0 600.4 477.6 598.1C502.2 595.8 526.7 593.6 551.2 591.3C575.6 589.1 600.0 586.8 624.3 584.6C648.6 582.3 672.8 580.1 696.9 577.9C721.0 575.7 745.0 573.5 769.0 571.3C793.0 569.2 816.9 567.0 840.7 564.8C864.5 562.7 888.2 560.6 911.8 558.4C935.5 556.3 959.1 554.2 982.6 552.2C1006.1 550.2 1029.5 547.8 1052.8 546.2C1076.2 544.6 1099.4 543.6 1122.6 542.3C1145.8 541.1 1168.9 539.9 1192.0 538.7C1215.0 537.5 1238.0 536.3 1260.8 535.2C1283.7 534.1 1306.5 532.9 1329.3 531.8C1352.0 530.7 1374.7 529.6 1397.3 528.5C1419.9 527.4 1442.4 526.4 1464.9 525.3C1487.3 524.2 1509.7 523.2 1532.0 522.1C1554.3 521.1 1576.5 520.1 1598.7 519.1C1620.9 518.0 1651.5 516.9 1665.0 516.0C1678.5 515.1 1676.0 513.9 1680.0 513.7C1684.0 513.5 1687.5 514.6 1689.0 514.8"/>
<path d="M403.5 605.0 C380.7 612.4 360.1 629.5 360.8 656.2 C361.5 681.6 374.1 705.8 388.8 721.1"/>
<path d="M339.0 568.6C350.9 567.6 386.7 564.6 410.4 562.6C434.2 560.5 457.8 558.5 481.4 556.6C505.0 554.6 528.5 552.6 551.9 550.6C575.4 548.7 598.7 546.7 622.0 544.7C645.3 542.8 668.5 540.8 691.6 538.9C714.8 537.0 737.8 535.1 760.8 533.2C783.8 531.3 806.7 529.4 829.6 527.5C852.4 525.6 875.2 523.8 897.9 521.9C920.6 520.1 943.2 518.1 965.8 516.6C988.3 515.0 1010.8 513.9 1033.2 512.6C1055.6 511.4 1078.0 510.1 1100.3 508.9C1122.5 507.7 1144.7 506.5 1166.9 505.3C1189.0 504.1 1211.1 502.9 1233.1 501.7C1255.1 500.6 1277.0 499.4 1298.9 498.3C1320.7 497.1 1342.5 496.0 1364.2 494.8C1386.0 493.7 1407.6 492.6 1429.2 491.5C1450.8 490.3 1472.4 489.2 1493.8 488.1C1515.3 487.0 1545.3 485.5 1558.0 484.9C1570.7 484.2 1566.8 484.0 1570.0 484.2C1573.2 484.5 1576.0 486.0 1577.2 486.3"/>
<path d="M339.0 568.6 C317.2 575.6 298.2 592.4 298.8 617.8 C299.5 643.2 311.6 667.5 326.3 682.7"/>
<path d="M281.0 537.0C292.4 536.1 326.8 533.5 349.5 531.8C372.3 530.0 395.0 528.3 417.6 526.6C440.3 524.9 462.8 523.1 485.3 521.4C507.8 519.7 530.2 518.0 552.6 516.3C575.0 514.6 597.3 512.9 619.5 511.3C641.7 509.6 663.8 507.9 685.9 506.3C708.0 504.6 730.0 502.9 752.0 501.3C773.9 499.7 795.8 498.0 817.6 496.4C839.5 494.8 861.2 493.1 882.9 491.6C904.6 490.2 926.2 489.0 947.8 487.7C969.3 486.4 990.8 485.1 1012.2 483.8C1033.7 482.6 1055.0 481.3 1076.3 480.1C1097.6 478.8 1118.9 477.6 1140.1 476.3C1161.2 475.1 1182.3 473.9 1203.4 472.7C1224.4 471.5 1245.4 470.2 1266.3 469.0C1287.3 467.8 1308.1 466.6 1328.9 465.5C1349.7 464.3 1370.5 463.1 1391.1 461.9C1411.8 460.7 1432.7 459.6 1453.0 458.4C1473.3 457.1 1502.9 455.0 1512.9 454.4"/>
<path d="M281.0 537.0 C260.4 543.6 242.2 559.5 242.8 583.6 C243.5 607.9 254.7 631.3 268.8 645.9"/>
<path d="M232.5 511.4C243.3 510.7 275.6 508.6 297.1 507.1C318.6 505.7 340.0 504.3 361.4 502.9C382.7 501.5 404.0 500.1 425.3 498.7C446.5 497.3 467.7 495.9 488.8 494.5C509.9 493.2 530.9 491.8 551.9 490.4C572.9 489.0 593.8 487.6 614.7 486.3C635.6 484.9 656.4 483.5 677.1 482.2C697.9 480.8 718.6 479.4 739.2 478.1C759.8 476.7 780.4 475.4 800.9 474.0C821.4 472.7 841.9 471.3 862.3 470.0C882.7 468.6 903.0 467.3 923.3 466.0C943.6 464.6 963.8 463.3 984.0 462.0C1004.2 460.6 1024.3 459.3 1044.3 458.0C1064.4 456.7 1084.4 455.4 1104.3 454.1C1124.3 452.7 1144.2 451.4 1164.0 450.1C1183.8 448.8 1203.6 447.5 1223.3 446.2C1243.0 444.9 1262.7 443.6 1282.3 442.3C1301.9 441.1 1321.2 439.8 1341.0 438.5C1360.8 437.2 1390.9 435.2 1400.9 434.5"/>
<path d="M232.5 511.4 C212.5 517.8 194.4 532.8 195.0 556.2 C195.7 579.9 209.3 601.6 223.0 615.9"/>
<path d="M187.5 493.0C197.8 492.5 228.8 491.0 249.4 489.9C269.9 488.9 290.4 487.9 310.9 486.9C331.4 485.9 351.8 484.8 372.1 483.8C392.4 482.8 412.7 481.8 432.9 480.8C453.2 479.8 473.3 478.7 493.5 477.7C513.6 476.7 533.6 475.7 553.7 474.6C573.7 473.6 593.6 472.6 613.5 471.6C633.4 470.5 653.3 469.5 673.0 468.4C692.8 467.4 712.6 466.5 732.3 465.2C751.9 463.9 771.6 462.3 791.1 460.8C810.7 459.3 830.2 457.8 849.7 456.2C869.2 454.7 888.6 453.2 908.0 451.7C927.3 450.2 946.6 448.6 965.9 447.1C985.2 445.6 1004.4 444.0 1023.5 442.5C1042.7 441.0 1061.8 439.4 1080.9 437.9C1099.9 436.4 1118.9 434.8 1137.9 433.3C1156.8 431.7 1175.7 430.2 1194.6 428.7C1213.4 427.1 1231.6 425.5 1251.0 424.1C1270.4 422.6 1300.9 420.8 1310.9 420.2"/>
<path d="M187.5 493.0 C168.9 498.9 154.1 514.3 154.6 536.0 C155.1 555.3 164.4 573.8 175.6 585.4"/>
<path d="M152.6 483.0C162.4 482.6 191.8 481.5 211.4 480.7C230.9 480.0 250.4 479.2 269.8 478.5C289.3 477.7 308.6 477.0 328.0 476.2C347.3 475.4 366.6 474.7 385.8 473.9C405.0 473.1 424.2 472.4 443.4 471.6C462.5 470.8 481.6 470.0 500.6 469.2C519.6 468.5 538.6 467.7 557.5 466.8C576.5 466.0 595.4 465.2 614.2 464.4C633.0 463.5 651.8 462.9 670.6 461.7C689.3 460.5 708.0 458.7 726.6 457.1C745.3 455.6 763.9 454.0 782.4 452.4C800.9 450.8 819.4 449.2 837.9 447.6C856.4 445.9 874.8 444.3 893.1 442.7C911.5 441.1 929.8 439.4 948.0 437.8C966.3 436.1 984.5 434.5 1002.7 432.8C1020.9 431.2 1039.0 429.5 1057.1 427.9C1075.2 426.2 1093.2 424.6 1111.2 422.9C1129.2 421.3 1146.0 419.4 1165.0 417.9C1184.0 416.5 1214.9 414.7 1224.9 414.1"/>
<path d="M152.6 483.0 C136.0 488.3 124.3 503.2 124.8 522.6 C125.2 538.6 130.5 554.9 139.8 564.5"/>
<path d="M124.5 486.4C133.8 486.1 161.9 485.3 180.5 484.7C199.1 484.1 217.7 483.6 236.2 483.0C254.7 482.4 273.2 481.8 291.6 481.2C310.0 480.7 328.4 480.1 346.8 479.5C365.1 478.9 383.4 478.3 401.6 477.7C419.9 477.1 438.1 476.4 456.2 475.8C474.4 475.2 492.5 474.6 510.6 473.9C528.6 473.2 546.7 472.6 564.6 471.9C582.6 471.2 600.5 470.8 618.4 469.6C636.3 468.5 654.2 466.6 672.0 465.0C689.8 463.4 707.5 461.7 725.2 460.1C743.0 458.4 760.6 456.8 778.3 455.1C795.9 453.4 813.5 451.7 831.0 450.0C848.6 448.3 866.1 446.6 883.5 444.9C901.0 443.2 918.4 441.5 935.8 439.8C953.1 438.1 970.5 436.3 987.8 434.6C1005.1 432.9 1022.3 431.2 1039.5 429.4C1056.7 427.7 1072.4 425.7 1091.0 424.2C1109.6 422.7 1140.9 421.0 1150.9 420.4"/>
<path d="M124.5 486.4 C111.6 490.5 102.3 502.0 102.7 517.0 C103.0 527.8 102.5 539.9 108.7 546.4"/>
<path d="M2128.6 1426.9C2105.4 1419.2 2080.3 1412.3 1989.7 1380.6C1899.1 1348.8 1697.2 1277.7 1585.0 1236.4C1472.8 1195.1 1391.4 1163.2 1316.2 1133.0C1241.0 1102.8 1188.5 1078.8 1133.9 1054.9C1079.3 1031.0 1031.2 1009.7 988.4 989.7C945.5 969.7 912.8 952.7 876.8 935.1C840.8 917.5 806.2 901.0 772.7 884.3C739.2 867.6 707.1 851.2 675.9 834.7C644.7 818.2 614.3 801.1 585.4 785.1C556.5 769.1 528.6 753.3 502.5 738.5C476.4 723.7 452.4 710.2 428.8 696.5C405.2 682.8 382.5 669.3 360.8 656.2C339.1 643.1 318.5 629.9 298.8 617.8C279.1 605.7 260.1 593.9 242.8 583.6C225.5 573.3 209.7 564.1 195.0 556.2C180.3 548.3 166.3 541.6 154.6 536.0C142.9 530.4 133.4 525.8 124.8 522.6C116.2 519.4 109.5 517.9 102.7 517.0C95.9 516.1 87.0 517.4 83.8 517.5"/>
</g>
<path d="M2132.6 1413.1L2893.0 1323.0" stroke-width="1.8"/>
<path d="M2151.0 1456.5L2144.6 1452.3L2139.2 1448.4L2134.8 1444.4L2131.5 1440.4L2129.4 1436.3L2128.4 1431.8L2128.6 1426.9L2128.6 1426.9L2129.1 1422.7L2129.6 1419.5L2130.2 1416.9L2131.1 1414.9L2132.6 1413.1"/>
<path d="M83.8 517.5L83.8 518.1L83.9 518.9L83.9 519.9L84.0 520.9L84.1 522.0L84.3 523.0L84.4 523.9L84.5 524.8L84.6 525.8L84.9 526.8L85.4 527.9L86.3 529.2L87.7 530.8L89.5 532.7L91.5 534.8L93.6 536.8L95.6 538.6L97.2 540.0L98.4 540.9L99.2 541.4L99.9 541.7L100.6 541.9L101.6 542.3L103.0 543.0L104.8 544.0L106.9 545.3L109.2 546.6L111.7 548.1L114.3 549.7L117.0 551.3L119.8 553.0L122.8 554.7L125.9 556.6L129.2 558.5L132.5 560.4L136.0 562.4L139.6 564.4L143.3 566.3L147.1 568.3L151.1 570.4L155.1 572.6L159.2 575.0L163.5 577.6L167.9 580.4L172.5 583.4L177.0 586.4L181.4 589.3L185.7 592.0L189.7 594.5L193.5 596.9L197.2 599.2L201.0 601.5L204.8 603.9L208.8 606.5L213.1 609.3L217.5 612.2L222.1 615.2L226.6 618.2L231.0 621.2L235.3 624.0L239.3 626.6L243.1 629.1L246.9 631.5L250.6 633.9L254.4 636.4L258.4 639.0L262.7 641.8L267.1 644.8L271.6 647.8L276.2 650.8L280.6 653.7L284.9 656.5L288.8 659.0L292.5 661.3L296.0 663.5L299.7 665.8L303.6 668.2L308.0 671.0L312.8 674.1L318.0 677.4L323.4 680.8L329.0 684.5L334.9 688.2L341.0 692.0L346.9 695.6L352.6 699.0L358.5 702.4L365.1 706.4L372.9 711.1L382.4 717.0L394.1 724.5L407.8 733.4L422.7 743.1L438.0 753.0L453.0 762.5L466.7 771.0L479.1 778.4L490.7 785.1L502.0 791.4L513.2 797.6L524.8 804.1L537.0 811.0L549.8 818.4L562.9 826.1L576.3 833.9L590.1 841.9L604.3 850.1L618.9 858.3L634.2 866.7L650.1 875.4L666.5 884.2L683.0 893.0L699.5 901.7L715.6 910.3L731.3 918.7L746.8 926.9L762.1 935.1L777.6 943.3L793.5 951.5L809.9 959.9L827.2 968.6L845.4 977.7L863.9 986.8L882.2 995.7L899.9 1004.2L916.5 1012.0L930.9 1018.7L943.2 1024.4L954.9 1029.6L967.3 1035.0L981.9 1041.2L1000.0 1048.7L1022.1 1057.7L1047.1 1067.8L1074.2 1078.7L1102.8 1090.1L1132.0 1101.6L1161.0 1113.0L1191.8 1125.0L1225.3 1137.9L1259.5 1151.1L1292.1 1163.6L1321.3 1174.8L1344.7 1183.8L1360.5 1190.0L1370.0 1193.8L1376.0 1196.2L1381.1 1198.3L1388.2 1201.1L1400.0 1205.5L1417.5 1211.9L1438.6 1219.6L1461.7 1228.0L1485.1 1236.4L1507.0 1244.2L1525.8 1251.0L1539.7 1256.0L1549.7 1259.6L1558.3 1262.6L1567.9 1266.0L1581.0 1270.7L1600.0 1277.5L1625.9 1286.9L1657.0 1298.2L1691.6 1310.8L1728.0 1323.9L1764.7 1336.9L1800.0 1349.0L1835.1 1360.7L1871.5 1372.5L1908.1 1384.2L1944.0 1395.4L1977.9 1406.0L2009.0 1415.5L2038.2 1424.3L2066.6 1432.6L2093.1 1440.2L2116.7 1446.8L2136.3 1452.3L2151.0 1456.5" stroke-width="1.5" stroke="#2a2a2a"/>
<path d="M1590.0 1273.9L1604.5 1278.5L1619.0 1283.0L1633.4 1287.4L1647.9 1291.9L1662.4 1296.3L1676.9 1300.8L1691.4 1305.3L1705.9 1309.8L1720.3 1314.3L1734.8 1319.0L1749.3 1323.6L1763.8 1328.4L1778.3 1333.2L1792.8 1338.0L1807.2 1342.9L1821.7 1347.9L1836.2 1352.9L1850.7 1358.0L1865.2 1363.1L1879.7 1368.3L1894.1 1373.6L1908.6 1378.9L1923.1 1384.2L1937.6 1389.6L1952.1 1394.9L1966.6 1400.3L1981.0 1405.6L1995.5 1410.8L2010.0 1415.8" stroke-width="1.4"/>
<path d="M83.8 517.5L83.9 516.6L84.0 515.4L84.1 514.0L84.2 512.5L84.4 511.1L84.6 510.0L84.8 509.2L84.8 508.6L84.9 508.0L85.2 507.5L85.7 506.9L86.5 506.0L87.8 504.9L89.6 503.5L91.6 502.1L93.7 500.6L95.6 499.2L97.2 498.0L98.4 497.0L99.2 496.1L99.9 495.4L100.6 494.6L101.6 493.8L103.0 493.0L104.9 492.0L107.3 491.0L109.9 489.9L112.5 488.9L114.9 488.0L117.0 487.2L118.6 486.6L119.9 486.2L121.0 485.9L122.1 485.6L123.2 485.3L124.5 485.0L125.9 484.6L127.3 484.3L128.8 483.9L130.4 483.6L132.2 483.3L134.4 483.0L136.5 482.8L138.4 482.6L140.6 482.5L143.4 482.3L147.3 482.2L152.6 482.0L160.1 481.8L169.6 481.5L180.2 481.2L190.9 481.0L200.7 480.7L208.8 480.5L214.4 480.4L218.1 480.3L221.0 480.2L224.1 480.1L228.6 480.0L235.3 479.8L244.5 479.5L255.4 479.1L267.5 478.7L280.6 478.2L294.2 477.7L308.0 477.2L322.6 476.6L338.3 475.9L354.5 475.2L370.7 474.5L386.3 473.8L400.6 473.2L413.3 472.7L424.8 472.3L435.6 472.0L446.3 471.6L457.6 471.2L469.8 470.6L483.0 469.9L496.6 469.2L510.7 468.4L525.3 467.6L540.4 466.7L556.0 465.7L572.3 464.7L589.3 463.7L606.8 462.6L624.6 461.5L642.4 460.2L660.0 458.8L676.8 457.3L692.8 455.6L708.8 453.9L725.7 452.0L744.3 450.0L765.3 447.8L790.5 445.2L819.5 442.3L850.2 439.2L880.4 436.2L907.9 433.5L930.6 431.2L947.8 429.5L961.1 428.2L971.8 427.2L981.0 426.4L990.0 425.5L1000.0 424.6L1011.0 423.5L1022.0 422.5L1032.8 421.4L1043.2 420.4L1053.0 419.5L1062.0 418.8L1070.2 418.2L1077.8 417.7L1084.8 417.4L1091.2 417.1L1097.1 416.8L1102.5 416.6L1106.7 416.4L1109.6 416.3L1111.9 416.2L1114.5 416.1L1118.3 416.2L1124.0 416.3L1132.0 416.5L1141.7 416.8L1152.5 417.1L1163.8 417.5L1175.2 418.0L1186.0 418.5L1196.4 419.1L1206.9 419.7L1217.5 420.4L1227.9 421.2L1238.1 422.0L1248.0 423.0L1257.8 424.2L1267.7 425.6L1277.4 427.0L1286.6 428.5L1295.0 429.9L1302.5 431.0L1308.1 431.8L1311.8 432.2L1314.8 432.6L1318.2 433.0L1323.1 433.7L1330.6 434.8L1341.8 436.5L1355.8 438.6L1371.4 441.0L1387.1 443.4L1401.4 445.6L1413.0 447.5L1421.3 449.0L1427.2 450.1L1431.9 451.1L1436.1 452.1L1440.8 453.2L1447.0 454.5L1454.6 456.0L1462.8 457.5L1471.6 459.1L1480.7 460.9L1490.2 462.8L1499.8 465.0L1509.1 467.3L1518.1 469.7L1527.4 472.2L1537.5 475.1L1549.1 478.3L1562.8 482.0L1580.1 486.6L1601.0 492.2L1623.2 498.1L1645.0 503.9L1664.1 509.1L1678.5 513.0L1686.8 515.3L1690.1 516.2L1690.9 516.5L1691.3 516.8L1693.6 517.6L1700.0 519.7L1710.7 523.0L1723.9 527.1L1739.0 531.8L1755.3 537.0L1772.3 542.3L1789.3 547.8L1806.8 553.5L1825.3 559.5L1844.5 565.8L1863.9 572.2L1883.1 578.7L1901.7 585.1L1919.7 591.4L1937.3 597.7L1954.8 604.0L1972.2 610.4L1989.7 617.0L2007.4 623.8L2025.5 630.9L2043.8 638.1L2062.2 645.6L2080.5 653.1L2098.7 660.8L2116.5 668.4L2134.0 676.1L2151.4 683.8L2168.6 691.6L2185.6 699.5L2202.4 707.4L2219.0 715.4L2235.4 723.5L2251.6 731.6L2267.6 739.8L2283.4 748.1L2299.2 756.5L2314.9 765.0L2330.5 773.5L2346.0 782.0L2361.4 790.7L2376.7 799.5L2392.0 808.5L2407.4 817.9L2423.7 828.3L2441.1 839.9L2458.5 851.8L2474.8 863.0L2488.9 872.7L2499.7 880.0L2506.0 884.1L2508.6 885.6L2508.9 885.6L2508.6 885.2L2509.5 885.6L2513.0 888.0L2519.4 892.3L2527.3 897.7L2536.3 903.9L2545.9 910.6L2555.6 917.5L2565.0 924.4L2574.2 931.3L2583.5 938.3L2592.9 945.6L2602.5 953.2L2612.2 961.1L2622.0 969.5L2632.0 978.4L2642.2 987.7L2652.6 997.4L2663.0 1007.4L2673.4 1017.6L2683.7 1028.0L2693.9 1038.5L2704.1 1049.2L2714.3 1060.2L2724.4 1071.4L2734.6 1082.9L2744.8 1094.8L2755.0 1107.0L2765.3 1119.5L2775.6 1132.3L2785.9 1145.4L2796.0 1158.9L2806.0 1172.6L2816.2 1187.4L2826.7 1203.3L2837.1 1219.5L2846.9 1235.2L2855.8 1249.5L2863.3 1261.5L2869.3 1271.0L2874.0 1278.6L2877.8 1284.9L2880.9 1290.2L2883.5 1295.1L2886.0 1300.0L2888.2 1305.0L2889.8 1309.7L2890.9 1313.9L2891.8 1317.6L2892.4 1320.7L2893.0 1323.0" stroke-width="0.9" stroke="#555"/>
<path d="M152.6 482.6L160.1 482.4L169.6 482.1L180.2 481.8L190.9 481.6L200.7 481.3L208.8 481.1L214.4 481.0L218.1 480.9L221.0 480.8L224.1 480.7L228.6 480.6L235.3 480.4L244.5 480.1L255.4 479.7L267.5 479.3L280.6 478.8L294.2 478.3L308.0 477.8L322.6 477.2L338.3 476.5L354.5 475.8L370.7 475.1L386.3 474.4L400.6 473.8L413.3 473.3L424.8 472.9L435.6 472.6L446.3 472.2L457.6 471.8L469.8 471.2L483.0 470.5L496.6 469.8L510.7 469.0L525.3 468.2L540.4 467.3L556.0 466.3L572.3 465.3L589.3 464.3L606.8 463.2L624.6 462.1L642.4 460.8L660.0 459.4L676.8 457.9L692.8 456.2L708.8 454.5L725.7 452.6L744.3 450.6L765.3 448.4L790.5 445.8L819.5 442.9L850.2 439.8L880.4 436.8L907.9 434.1L930.6 431.8L947.8 430.1L961.1 428.8L971.8 427.8L981.0 427.0L990.0 426.1L1000.0 425.2L1011.0 424.1L1022.0 423.1L1032.8 422.0L1043.2 421.0L1053.0 420.1L1062.0 419.4L1070.2 418.8L1077.8 418.3L1084.8 418.0L1091.2 417.7L1097.1 417.4L1102.5 417.2L1106.7 417.0L1109.6 416.9" stroke-width="2.6" stroke="#2a2a2a" clip-path="url(#silc)"/>
<path d="M308.0 479.8L322.6 479.2L338.3 478.5L354.5 477.8L370.7 477.1L386.3 476.4L400.6 475.8L413.3 475.3L424.8 474.9L435.6 474.6L446.3 474.2L457.6 473.8L469.8 473.2L483.0 472.5L496.6 471.8L510.7 471.0L525.3 470.2L540.4 469.3L556.0 468.3L572.3 467.3L589.3 466.3L606.8 465.2L624.6 464.1L642.4 462.8L660.0 461.4L676.8 459.9L692.8 458.2L708.8 456.5L725.7 454.6L744.3 452.6L765.3 450.4L790.5 447.8L819.5 444.9L850.2 441.8L880.4 438.8" stroke-width="2.0" stroke="#3a3a3a" clip-path="url(#silc)" opacity="0.7"/>
</g>
</g>
</svg>
<svg width="2880" height="1800" viewBox="0 0 2880 1800" style="position:absolute;left:0;top:0">
<defs>
<radialGradient id="ballg" cx="0.42" cy="0.28" r="0.75"><stop offset="0" stop-color="#7fe0ff"/><stop offset="0.35" stop-color="#1aa0ff"/><stop offset="0.8" stop-color="#1560f0"/><stop offset="1" stop-color="#2a4fe0"/></radialGradient>
<radialGradient id="ballg2" cx="0.45" cy="0.3" r="0.75"><stop offset="0" stop-color="#6fd0ff"/><stop offset="0.5" stop-color="#1a90f8"/><stop offset="1" stop-color="#1f6ff0"/></radialGradient>
<linearGradient id="shp" x1="0" y1="0" x2="0" y2="1"><stop offset="0" stop-color="#6db6e6"/><stop offset="0.55" stop-color="#3d8fcf"/><stop offset="1" stop-color="#1d6fb0"/></linearGradient>
<linearGradient id="shpd" x1="0" y1="0" x2="0" y2="1"><stop offset="0" stop-color="#2a78b8"/><stop offset="1" stop-color="#0b4a82"/></linearGradient>
<linearGradient id="shpv" x1="0" y1="0" x2="1" y2="0"><stop offset="0" stop-color="#8cc8ee"/><stop offset="0.5" stop-color="#4a9bd8"/><stop offset="1" stop-color="#2a7abf"/></linearGradient>
<linearGradient id="flame" x1="0" y1="0" x2="0.25" y2="1"><stop offset="0" stop-color="#d8401c"/><stop offset="0.35" stop-color="#f08a20"/><stop offset="0.65" stop-color="#fbd060"/><stop offset="1" stop-color="#fffbe8"/></linearGradient>
<linearGradient id="rain" x1="0" y1="0" x2="0" y2="1"><stop offset="0" stop-color="#f03078"/><stop offset="0.14" stop-color="#7058f0"/><stop offset="0.28" stop-color="#30b8f0"/><stop offset="0.42" stop-color="#60e080"/><stop offset="0.5" stop-color="#d0ec30"/><stop offset="0.58" stop-color="#60e080"/><stop offset="0.72" stop-color="#30b8f0"/><stop offset="0.86" stop-color="#7058f0"/><stop offset="1" stop-color="#f03078"/></linearGradient>
</defs>
<g fill="none"><ellipse cx="32" cy="73.4" rx="11.4" ry="26" stroke="#8c8c8c" stroke-width="1.4"/><g stroke="#f09aa0" stroke-width="1.6"><path d="M32 53v5M27 56l3 4M37 56l-3 4M24.5 62l4.5 2M39.5 62l-4.5 2M25 69l4-1M39 69l-4-1"/></g><path d="M30.3 67.5c0-2 3.2-2 3.2 0v8.5l2.6-1 2 1.2 2.2-.4 2 1.8v9l-1.6 5.6h-9.4l-4.6-8.4 1.6-1.4 2 1.6z" fill="#fff" stroke="#3c3c3c" stroke-width="1.5" stroke-linejoin="round"/></g>
<g stroke="#8e8e7e" stroke-width="1.4" stroke-linejoin="round"><path d="M84 57.5l8-3.5 5 2.2 10 4.3 3.6 4.6v20.4l-4.6 4.500z" fill="#ece6a6"/><path d="M80.500 60l6-3.200 21.500 9.200 1.500 23-5 3z" fill="#f2ecac"/><path d="M77.600 62l23.400 10.200 1.600 19.600-22.400-9.600z" fill="#f7f2a6"/></g><path d="M103 92l7.600-4.400 .2 2.400-7.400 4.400z" fill="#8a8a8a"/>
<path d="M144.800 55.600l4.200-1 20.400 9.400v25.600l4.600 2.600-3.400 1.400-25.400-12z" fill="#5c5c5c" stroke="#3e3e3e" stroke-width="1.2" stroke-linejoin="round"/><path d="M148 62.500l18.500 8.200v17.600l-18.500-8.600z" fill="url(#flame)"/><path d="M148.600 57.400l17.600 8v2.400l-17.600-8z" fill="#8a8a8a"/><path d="M167.500 88.500l6.800 3.800-4.200 1.600z" fill="#222"/>
<g stroke="#6a6a6a" stroke-width="1.3" fill="none"><path d="M230.500 61h35.500M257.200 53.600v20"/><path d="M231 73.600h35" stroke-dasharray="1.600 2.200" stroke="#555"/><path d="M265.300 56v18" stroke-dasharray="1.600 2.200" stroke="#555"/></g><rect x="233.400" y="79.500" width="34" height="13" fill="#9b9ba6"/><rect x="230.600" y="76.200" width="34" height="13.400" fill="#f3cb1c"/><path d="M231 76.400h33.600" stroke="#222" stroke-width="1.500" stroke-dasharray="1.500 2.100"/><path d="M239.200 76.500v4.200M255.600 76.500v4.200" stroke="#222" stroke-width="1.600"/><path d="M236.500 83.500h3v4.500" fill="none" stroke="#b8901a" stroke-width="1.500"/><rect x="253" y="83.300" width="4.200" height="4.400" fill="none" stroke="#b8901a" stroke-width="1.500"/>
<path d="M346 56l19 34" stroke="#222" stroke-width="2.2"/><rect x="343" y="52" width="7" height="7" fill="#2050e0" transform="rotate(45 346.5 55.5)"/><circle cx="355" cy="72.5" r="6.5" fill="#f02818"/><circle cx="363" cy="89" r="4.5" fill="#18d048"/>
<circle cx="516.0" cy="72.5" r="17.0" fill="url(#ballg)"/>
<path d="M664 58h24l9 9v24h-33z" fill="#f6f8fc" stroke="#6a7a80" stroke-width="1.6"/><path d="M688 58v9h9" fill="none" stroke="#6a7a80" stroke-width="1.4"/><g stroke="#6a7a80" stroke-width="1.1" fill="none" stroke-dasharray="2 1.6"><path d="M668 66c8-3 12 2 18 0M668 72h24M668 78c6-2 12 2 24 0M668 84h10M684 84h8"/></g>
<g stroke="#1c2466" stroke-width="1.6" fill="none"><rect x="835" y="53" width="9" height="12" fill="#f6f8fc"/><path d="M827 66h26v14c0 8-5 12-13 12s-13-4-13-12z" fill="#dfe4f2"/><path d="M829 70h22M829 74h22M829 78h22M830 82h20M833 86h14" stroke-dasharray="1.6 1.6" stroke-width="1.3"/></g>
<circle cx="31.0" cy="131.0" r="14.5" fill="url(#ballg)"/>
<circle cx="31" cy="131" r="14" fill="none" stroke="#6f98ff" stroke-width="1.5" stroke-dasharray="3 3" opacity="0.8"/>
<g stroke="#000" stroke-width="2.4" fill="none"><path d="M2770 141h12"/><path d="M2802 129h17" stroke-width="3"/><rect x="2803" y="129" width="15" height="14" stroke-width="1.6" stroke="#555"/><path d="M2841 127l14 14M2855 127l-14 14" stroke-width="2.6"/></g>
<g stroke="#6f7d80" fill="none" stroke-linecap="round"><circle cx="37.800" cy="182.400" r="8.600" stroke-width="2.800" fill="#f8f9fc"/><path d="M44.500 190.500l11.500 14" stroke-width="4.600" stroke="#647478"/></g>
<g stroke="#6f7d80" fill="none" stroke-linecap="round"><rect x="80.500" y="167.300" width="24.500" height="17.500" stroke-width="1.800"/><circle cx="105.900" cy="186.600" r="8.400" stroke-width="2.800" fill="#f8f9fc" fill-opacity="0.55"/><path d="M112.300 194.600l10 13" stroke-width="4.600" stroke="#647478"/></g>
<g stroke="#222" fill="none" stroke-width="1.6" stroke-linecap="round" stroke-linejoin="round"><path d="M162 203c6-8 8-22 12-28 4-5 14-9 20-8M183 167l-5 10M188 168l-5 11M193 170l-5 11M197 175c-4 4-7 8-7 12 4 2 10 2 14 4M176 211c8-6 18-10 28-14"/></g>
<g fill="none" stroke-linecap="round" stroke-linejoin="round"><ellipse cx="246" cy="189.500" rx="21" ry="10" transform="rotate(62 246 189.500)" stroke="#5a5a5a" stroke-width="3.600"/><path d="M226 186.500c6 6 14 9.500 22 10.500" stroke="#3d8ce6" stroke-width="6"/><path d="M229.500 178.500l-7 9.500 12 1z" fill="#3d8ce6" stroke="#3d8ce6" stroke-width="2"/><path d="M252 203c4-8 5-18 2-27" stroke="#3d8ce6" stroke-width="6"/><path d="M246.500 177l8-9.500 5.500 11z" fill="#3d8ce6" stroke="#3d8ce6" stroke-width="2"/><path d="M236 203l10 7 8-5" stroke="#5a5a5a" stroke-width="3"/></g>
<path d="M306.300 174l30 1.500 8.200 9.500-2.700 21.800-28.600 2.700z" fill="#f7e81a"/><circle cx="328.0" cy="196.0" r="12.2" fill="url(#ballg)"/><path d="M303 167.500l4.500 3.500 3.500 9.500-3 1.500-3.500-8z" fill="#d8c020" stroke="#333" stroke-width="1.300"/>
<ellipse cx="400" cy="187.500" rx="27" ry="10" fill="url(#shp)"/>
<ellipse cx="462" cy="189" rx="26.500" ry="12.200" fill="url(#shp)"/>
<path d="M498 184.500c14 5 38 5 53-3-10 15-42 16-53 3z" fill="url(#shp)"/>
<path d="M561 198l26-22 26 22c-16-5-36-5-52 0z" fill="url(#shpd)"/>
<path d="M623 199l26-23 26 23z" fill="url(#shpd)"/>
<path d="M684 179c14-2 40 8 52 18-18 0-42-6-52-18z" fill="url(#shp)"/>
<path d="M746 196c10-10 38-18 54-17-10 10-38 18-54 17z" fill="url(#shp)"/>
<path d="M808 201c20-8 40-18 50-26 6 10 4 20-2 24-14 4-32 4-48 2z" fill="url(#shp)"/>
<path d="M871 179c8-8 36-2 50 22-20 2-46 0-50-22z" fill="url(#shp)"/>
<ellipse cx="958" cy="189" rx="10" ry="27" fill="url(#shpv)"/>
<path d="M1013 201l24-22 24 22c-14-5-34-5-48 0z" fill="url(#shpd)"/><g fill="none" stroke="#3d8ce6" stroke-width="3.4" stroke-linecap="round"><path d="M1017 192c-6-16 12-28 28-22"/><path d="M1058 186c4 14-10 28-28 24"/><path d="M1046 165l6 6-8 4z" fill="#3d8ce6" stroke-width="2"/><path d="M1027 214l-6-6 8-3z" fill="#3d8ce6" stroke-width="2"/></g>
<ellipse cx="1097" cy="189" rx="10" ry="27" fill="url(#shpv)"/><g fill="none" stroke="#e81818" stroke-width="3.4"><path d="M1120 182c10 6 4 14-23 14s-32-10-18-15"/><path d="M1112 178l9 4-6 7z" fill="#e81818" stroke-width="1.5"/></g>
<ellipse cx="1160" cy="189" rx="10" ry="27" fill="url(#shpv)"/><g fill="none" stroke="#e81818" stroke-width="3.4"><path d="M1183 182c10 6 4 14-23 14s-32-10-18-15"/><path d="M1175 178l9 4-6 7z" fill="#e81818" stroke-width="1.5"/></g><path d="M1140 214v-14h-6l11-12 11 12h-6v14z" fill="#f4a81a" stroke="#a86a00" stroke-width="1.6"/>
<g fill="none" stroke="#222" stroke-width="1.6"><circle cx="1238" cy="189" r="17"/><ellipse cx="1238" cy="181" rx="10" ry="5"/><path d="M1224 186c4 10 24 10 28 0"/><path d="M1221.500 193c4 12 29 12 33 0"/></g>
<g fill="none" stroke-width="1.6"><circle cx="1300" cy="189" r="17" stroke="#444"/><ellipse cx="1300" cy="181" rx="10" ry="5" stroke="#e02020"/><path d="M1286 186c4 10 24 10 28 0" stroke="#e02020"/><path d="M1283.500 193c4 12 29 12 33 0" stroke="#555"/></g>
<g fill="none" stroke="#222" stroke-width="1.5"><circle cx="1362" cy="189" r="17"/><circle cx="1362" cy="189" r="8"/><path d="M1362 172l-14 25h28zM1362 206l-14-25h28zM1345 189h34M1362 172v34"/></g>
<circle cx="1440.0" cy="189.0" r="19.0" fill="url(#ballg)"/>
<circle cx="1502.0" cy="189.0" r="19.0" fill="url(#ballg2)"/>
<circle cx="1562.0" cy="190.0" r="18.0" fill="url(#ballg)"/><path d="M1552 208c6-8 20-6 36 0-10 4-28 6-36 0z" fill="#18a0d8"/><path d="M1556 198l26-30 7 6-26 30-10 4z" fill="#4aa0f0" stroke="#111" stroke-width="1.8"/><path d="M1556 198l7 6-10 4z" fill="#f0c080" stroke="#111" stroke-width="1.2"/>
<clipPath id="sb"><circle cx="1641" cy="189" r="19"/></clipPath><radialGradient id="sbg" cx="0.5" cy="0.45" r="0.6"><stop offset="0" stop-color="#f2f2f2"/><stop offset="1" stop-color="#9a9a9a"/></radialGradient><circle cx="1641" cy="189" r="19" fill="url(#sbg)"/><g clip-path="url(#sb)" stroke="#333" stroke-width="3.4"><path d="M1620 175h42M1620 182h42M1620 189h42M1620 196h42M1620 203h42"/></g>
<circle cx="1704" cy="189" r="19" fill="url(#rain)"/>
<g fill="none" stroke="#1848d8" stroke-width="3" stroke-linecap="round"><path d="M1772 168c-12 6-8 14 0 20s6 14-4 20" stroke-dasharray="7 4"/><path d="M1796 168c-12 6-8 14 0 20s6 14-4 20"/></g><path d="M1782 162v54" stroke="#222" stroke-width="1.4" stroke-dasharray="6 2 1.5 2"/>
<rect x="1843" y="172" width="15" height="15" fill="#f01818"/><rect x="1861" y="172" width="15" height="15" fill="#f8c820"/><rect x="1843" y="190" width="15" height="15" fill="#98d048"/><rect x="1861" y="190" width="15" height="15" fill="#78d8d0"/>
<g stroke="#808388" stroke-width="2.2"><path d="M2858 1797l20-20M2866 1797l12-12M2873 1797l6-6"/></g>
<path d="M0 1800V1793.500A6.500 6.500 0 0 0 6.500 1800Z" fill="#000"/><path d="M2880 1800V1793.500A6.500 6.500 0 0 1 2873.500 1800Z" fill="#000"/>
</svg>
</body></html>
